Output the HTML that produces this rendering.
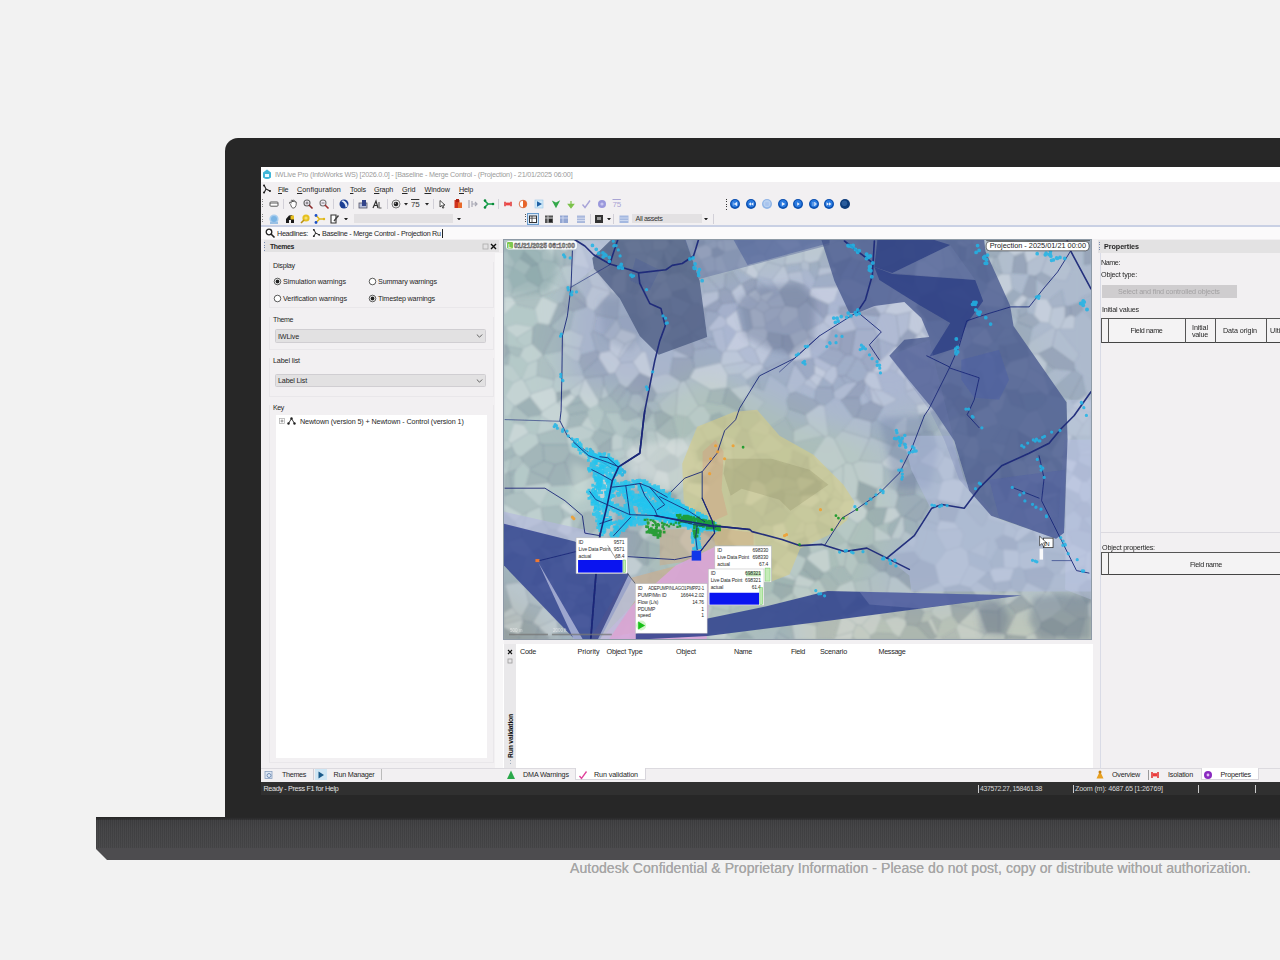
<!DOCTYPE html>
<html lang="en">
<head>
<meta charset="utf-8">
<title>IWLive Pro</title>
<style>
html,body{margin:0;padding:0;}
body{width:1280px;height:960px;overflow:hidden;background:#f2f2f2;font-family:"Liberation Sans",sans-serif;position:relative;}
.abs{position:absolute;}
#bezel{left:225px;top:138px;width:1075px;height:690px;background:#272727;border-radius:13px 0 0 0;}
#base{left:96px;top:817px;width:1184px;height:43px;background:linear-gradient(to bottom,#3d3d3f 0,#434345 10px,#474749 31px);}
#base .edge{left:0;top:0;width:100%;height:2.5px;background:linear-gradient(to bottom,#262626,#333335);}#base .dith{left:0;top:2px;width:100%;height:29px;background:repeating-linear-gradient(90deg,rgba(0,0,0,0.06) 0 1px,rgba(255,255,255,0.02) 1px 2px);}
#base .lip{left:0;top:31px;width:100%;height:12px;background:#4d4c4f;}
#base .cham{left:-1px;top:31px;width:0;height:0;border-left:0 solid transparent;border-bottom:13px solid #f2f2f2;border-right:13px solid transparent;}
#screen{left:0;top:0;width:1280px;height:960px;clip-path:inset(167px 0 165px 261px);filter:blur(0.5px);}
#screen > div, #screen > span, #screen > svg{position:absolute;white-space:nowrap;}
.t{font-size:7.5px;color:#262626;line-height:9px;letter-spacing:-0.1px;}
.b{font-weight:bold;}
#wm{left:570px;top:859.5px;font-size:14px;color:#a6a6a6;white-space:nowrap;line-height:16px;letter-spacing:0.057px;text-shadow:0 0 0.6px #a6a6a6;}
</style>
</head>
<body>
<div id="bezel" class="abs"></div>
<div id="base" class="abs"><div class="edge abs"></div><div class="dith abs"></div><div class="lip abs"></div><div class="cham abs"></div></div>
<div id="screen" class="abs">
<div style="left:261px;top:167px;width:1019px;height:628px;background:#f2f0f2"></div>
<div style="left:261px;top:167px;width:1019px;height:15px;background:#ffffff;"></div>
<svg style="left:262px;top:169px" width="10" height="11" viewBox="0 0 10 11"><path d="M5 0.5 L9 3.5 L9 8.5 Q5 11.5 1 8.5 L1 3.5 Z" fill="#3fb6d8"/><path d="M3 5 h4 v3 h-4z" fill="#e8f8ff"/></svg>
<span class="t" style="left:275.0px;top:170.0px;font-size:7.2px;letter-spacing:-0.198px;color:#9b9b9b">IWLive Pro (InfoWorks WS) [2026.0.0] - [Baseline - Merge Control - (Projection) - 21/01/2025 06:00]</span>
<svg style="left:262px;top:184px" width="10" height="10" viewBox="0 0 10 10"><path d="M2 1 L4 5 L2 9 M4 5 L8 7" stroke="#222" stroke-width="1.1" fill="none"/><circle cx="2" cy="1.5" r="1" fill="#222"/><circle cx="2" cy="8.5" r="1" fill="#222"/><circle cx="8" cy="7" r="1" fill="#222"/></svg>
<span class="t" style="left:278.0px;top:184.5px;font-size:7.2px;letter-spacing:-0.401px;"><u>F</u>ile</span>
<span class="t" style="left:297.0px;top:184.5px;font-size:7.2px;letter-spacing:0.090px;"><u>C</u>onfiguration</span>
<span class="t" style="left:350.0px;top:184.5px;font-size:7.2px;letter-spacing:-0.162px;"><u>T</u>ools</span>
<span class="t" style="left:374.0px;top:184.5px;font-size:7.2px;letter-spacing:-0.202px;"><u>G</u>raph</span>
<span class="t" style="left:402.0px;top:184.5px;font-size:7.2px;letter-spacing:-0.026px;"><u>G</u>rid</span>
<span class="t" style="left:424.5px;top:184.5px;font-size:7.2px;letter-spacing:-0.018px;"><u>W</u>indow</span>
<span class="t" style="left:459.0px;top:184.5px;font-size:7.2px;letter-spacing:-0.202px;"><u>H</u>elp</span>
<div style="left:262px;top:199.0px;width:1px;height:10px;background:repeating-linear-gradient(to bottom,#8a8a8a 0 1px,transparent 1px 2.5px)"></div>
<svg style="left:268.0px;top:198.0px" width="12" height="12" viewBox="0 0 12 12"><rect x="2" y="4" width="8" height="4.2" rx="0.8" fill="#fff" stroke="#444" stroke-width="0.9"/><path d="M2 5.4h8" stroke="#444" stroke-width=".5"/></svg>
<div style="left:283px;top:199.0px;width:1px;height:10px;background:#d2d0d8;"></div>
<svg style="left:286.5px;top:198.0px" width="12" height="12" viewBox="0 0 12 12"><path d="M3.6 6.5 L2.4 5 Q2.2 4 3.4 4.4 L4.2 5.2 L4.2 2.6 Q4.8 1.8 5.3 2.6 L5.4 4 L5.6 2.2 Q6.2 1.6 6.7 2.3 L6.8 4 L7.2 2.8 Q7.8 2.3 8.2 3 L8.2 4.4 L8.8 3.8 Q9.5 3.8 9.4 4.6 L9 7.5 Q8.4 10.2 6 10.2 Q4.4 10 3.6 6.5Z" fill="#fff" stroke="#444" stroke-width=".8"/></svg>
<svg style="left:301.5px;top:198.0px" width="12" height="12" viewBox="0 0 12 12"><circle cx="5" cy="5" r="3" fill="#f4eef8" stroke="#666" stroke-width="1.1"/><path d="M7 7 L10.5 10.5" stroke="#8a2a2a" stroke-width="1.6"/><path d="M3.5 5h3M5 3.5v3" stroke="#555" stroke-width=".8"/></svg>
<svg style="left:317.5px;top:198.0px" width="12" height="12" viewBox="0 0 12 12"><circle cx="5" cy="5" r="3" fill="#f4eef8" stroke="#777" stroke-width="1.1"/><path d="M7 7 L10.5 10.5" stroke="#a03030" stroke-width="1.6"/><path d="M3.5 5h3" stroke="#555" stroke-width=".8"/></svg>
<div style="left:333px;top:199.0px;width:1px;height:10px;background:#d2d0d8;"></div>
<svg style="left:337.5px;top:198.0px" width="12" height="12" viewBox="0 0 12 12"><circle cx="6" cy="6" r="4.5" fill="#1c3f94"/><path d="M5 2.2 Q9.5 4 9.6 8.4 L7.6 9.6 Q7.4 5 3.4 3.2Z" fill="#e4ecfa"/></svg>
<div style="left:352.5px;top:199.0px;width:1px;height:10px;background:#d2d0d8;"></div>
<svg style="left:356.5px;top:198.0px" width="12" height="12" viewBox="0 0 12 12"><rect x="2" y="5" width="8" height="5" fill="#b8c0dc" stroke="#556" stroke-width=".8"/><rect x="5" y="2" width="4" height="6" fill="#33448a"/></svg>
<svg style="left:371.0px;top:198.0px" width="12" height="12" viewBox="0 0 12 12"><path d="M2 10 L5 3 L7 10 M3 7.5 h3.5" stroke="#333" stroke-width="1.2" fill="none"/><path d="M8 4 v6 h2.5" stroke="#555" stroke-width="1.1" fill="none"/></svg>
<div style="left:386.5px;top:199.0px;width:1px;height:10px;background:#d2d0d8;"></div>
<svg style="left:389.5px;top:198.0px" width="12" height="12" viewBox="0 0 12 12"><circle cx="6" cy="6" r="4" fill="#eee" stroke="#777" stroke-width="1"/><circle cx="6" cy="6" r="2.3" fill="#222"/><circle cx="5.3" cy="5.3" r=".7" fill="#bbb"/></svg>
<svg style="left:404px;top:203.3px" width="4" height="2.6" viewBox="0 0 5 3"><path d="M0 0 L5 0 L2.5 3Z" fill="#222"/></svg>
<span class="t" style="left:411.0px;top:199.5px;font-size:7.2px;letter-spacing:-0.120px;font-size:8px;color:#333;text-decoration:overline;letter-spacing:-0.3px">75</span>
<svg style="left:425px;top:203.3px" width="4" height="2.6" viewBox="0 0 5 3"><path d="M0 0 L5 0 L2.5 3Z" fill="#222"/></svg>
<div style="left:433px;top:199.0px;width:1px;height:10px;background:#d2d0d8;"></div>
<svg style="left:436.0px;top:198.0px" width="12" height="12" viewBox="0 0 12 12"><path d="M4 2.5 L4 9 L5.7 7.5 L6.8 10.2 L7.9 9.7 L6.8 7.1 L9 7.1Z" fill="#fff" stroke="#222" stroke-width=".8"/></svg>
<svg style="left:451.5px;top:198.0px" width="12" height="12" viewBox="0 0 12 12"><rect x="2.5" y="2" width="5" height="8" fill="#d0321e"/><rect x="6" y="4.5" width="4" height="5.5" fill="#e86a2a"/><rect x="4" y="1" width="3" height="3" fill="#b02010"/></svg>
<svg style="left:466.5px;top:198.0px" width="12" height="12" viewBox="0 0 12 12"><path d="M2 2 v8 M5 3 v6 M5 6 h5 M8 4 l2 2 l-2 2" stroke="#a8a8b4" stroke-width="1.2" fill="none"/></svg>
<svg style="left:482.5px;top:198.0px" width="12" height="12" viewBox="0 0 12 12"><path d="M1.5 2.5 L5 6 L1.5 9.5 M5 6 H10.5" stroke="#14a04a" stroke-width="1.6" fill="none"/><circle cx="2" cy="2.5" r="1.3" fill="#0a8a3a"/><circle cx="2" cy="9.5" r="1.3" fill="#0a8a3a"/><circle cx="10" cy="6" r="1.3" fill="#0a8a3a"/></svg>
<div style="left:498px;top:199.0px;width:1px;height:10px;background:#d2d0d8;"></div>
<svg style="left:502.0px;top:198.0px" width="12" height="12" viewBox="0 0 12 12"><path d="M3 3.8 v4.4 M9 3.8 v4.4" stroke="#e03030" stroke-width="1.5"/><rect x="3.8" y="4.6" width="4.4" height="2.8" fill="#ee4444"/></svg>
<svg style="left:516.5px;top:198.0px" width="12" height="12" viewBox="0 0 12 12"><circle cx="6" cy="6" r="3.8" fill="#fff" stroke="#d8683a" stroke-width=".9"/><path d="M6 2.2 A3.8 3.8 0 0 1 6 9.8Z" fill="#e8642a"/></svg>
<svg style="left:532.5px;top:198.0px" width="12" height="12" viewBox="0 0 12 12"><rect x="2" y="2" width="8" height="8" fill="#cfe8f8" stroke="#9cc8e8" stroke-width=".6"/><path d="M4 3.2 L9 6 L4 8.8Z" fill="#1c5fa4"/></svg>
<svg style="left:550.0px;top:198.0px" width="12" height="12" viewBox="0 0 12 12"><path d="M1.8 2.6 L6 10.2 L10.2 2.2 L6 4.6Z" fill="#34a84a"/></svg>
<svg style="left:565.0px;top:198.0px" width="12" height="12" viewBox="0 0 12 12"><path d="M6 3 v4 M3.4 6.4 l2.6 3.4 l2.6 -3.4z" stroke="#7cc24a" stroke-width="1.2" fill="#7cc24a"/></svg>
<svg style="left:580.0px;top:198.0px" width="12" height="12" viewBox="0 0 12 12"><path d="M2.5 6.5 L5 9.5 L10 2.5" stroke="#a9a4d8" stroke-width="1.4" fill="none"/></svg>
<svg style="left:595.5px;top:198.0px" width="12" height="12" viewBox="0 0 12 12"><circle cx="6" cy="6" r="4" fill="#9a98dc"/><circle cx="6" cy="6" r="1.6" fill="#c8c6f0"/></svg>
<span class="t" style="left:612.5px;top:199.5px;font-size:7.2px;letter-spacing:-0.120px;font-size:8px;color:#a9a4d4;text-decoration:overline;letter-spacing:-0.3px">75</span>
<div style="left:725.5px;top:198.5px;width:1px;height:11px;background:repeating-linear-gradient(to bottom,#333 0 1px,transparent 1px 2.5px)"></div>
<svg style="left:729.0px;top:197.8px" width="12" height="12" viewBox="0 0 12 12"><circle cx="6" cy="6" r="5" fill="#0a4fb0"/><circle cx="6" cy="5.6" r="3.6" fill="#2a7ae0"/><path d="M4.3 4.4 v3.2 M8 4.2 L5.2 6 L8 7.8Z" fill="#e8f0ff" stroke="#e8f0ff" stroke-width=".5"/></svg>
<svg style="left:745.0px;top:197.8px" width="12" height="12" viewBox="0 0 12 12"><circle cx="6" cy="6" r="5" fill="#0a4fb0"/><circle cx="6" cy="5.6" r="3.6" fill="#2a7ae0"/><path d="M6 4.2 L3.6 6 L6 7.8Z M8.4 4.2 L6 6 L8.4 7.8Z" fill="#e8f0ff"/></svg>
<svg style="left:761.0px;top:197.8px" width="12" height="12" viewBox="0 0 12 12"><circle cx="6" cy="6" r="5" fill="#8fb4e6"/><circle cx="6" cy="5.6" r="3.6" fill="#b8d0f0"/><rect x="4.2" y="4.2" width="3.6" height="3.6" fill="#a8c4ee"/></svg>
<svg style="left:776.5px;top:197.8px" width="12" height="12" viewBox="0 0 12 12"><circle cx="6" cy="6" r="5" fill="#0a4fb0"/><circle cx="6" cy="5.6" r="3.6" fill="#2a7ae0"/><path d="M4.8 4 L8.2 6 L4.8 8Z" fill="#e8f0ff"/></svg>
<svg style="left:792.0px;top:197.8px" width="12" height="12" viewBox="0 0 12 12"><circle cx="6" cy="6" r="5" fill="#0a4fb0"/><circle cx="6" cy="5.6" r="3.6" fill="#2a7ae0"/><path d="M5.2 4.2 L7.8 6 L5.2 7.8Z" fill="#e8f0ff"/></svg>
<svg style="left:807.5px;top:197.8px" width="12" height="12" viewBox="0 0 12 12"><circle cx="6" cy="6" r="5" fill="#0a4fb0"/><circle cx="6" cy="5.6" r="3.6" fill="#2a7ae0"/><path d="M5 4 v4 M6.5 4 L8.5 6 L6.5 8Z" fill="#cfe0f8" stroke="#cfe0f8" stroke-width=".6"/></svg>
<svg style="left:823.0px;top:197.8px" width="12" height="12" viewBox="0 0 12 12"><circle cx="6" cy="6" r="5" fill="#0a4fb0"/><circle cx="6" cy="5.6" r="3.6" fill="#2a7ae0"/><path d="M3.6 4.2 L6 6 L3.6 7.8Z M6 4.2 L8.4 6 L6 7.8Z" fill="#e8f0ff"/></svg>
<svg style="left:839.0px;top:197.8px" width="12" height="12" viewBox="0 0 12 12"><circle cx="6" cy="6" r="5" fill="#0d3c7a"/><circle cx="5.4" cy="5.2" r="2.8" fill="#2a5c9c"/></svg>
<div style="left:262px;top:213.5px;width:1px;height:10px;background:repeating-linear-gradient(to bottom,#8a8a8a 0 1px,transparent 1px 2.5px)"></div>
<svg style="left:268.0px;top:212.5px" width="12" height="12" viewBox="0 0 12 12"><circle cx="6" cy="6" r="4.6" fill="#a8cdee"/><circle cx="6" cy="6" r="3" fill="#7ab4e4"/><rect x="2" y="9" width="8" height="2" fill="#9ac0e4"/></svg>
<svg style="left:283.5px;top:212.5px" width="12" height="12" viewBox="0 0 12 12"><path d="M2 10 L2 6 L5 2.5 L8 2 L10 5 L10 10 L7 10 L7 7 L5 7 L5 10Z" fill="#1a1a1a"/><rect x="6.5" y="2.5" width="3.5" height="4" fill="#e8c020"/></svg>
<svg style="left:299.0px;top:212.5px" width="12" height="12" viewBox="0 0 12 12"><circle cx="7" cy="5" r="3.6" fill="#e6c020"/><path d="M2 10 L5 7" stroke="#b89010" stroke-width="1.6"/><circle cx="7" cy="5" r="1.6" fill="#f4e070"/></svg>
<svg style="left:314.0px;top:212.5px" width="12" height="12" viewBox="0 0 12 12"><path d="M2 2.5 L5.5 6 L2 9.5 M5.5 6 H10.5" stroke="#e0b818" stroke-width="1.5" fill="none"/><circle cx="2" cy="2.5" r="1.4" fill="#1c50c8"/><circle cx="2" cy="9.5" r="1.4" fill="#1c50c8"/><circle cx="10" cy="6" r="1.2" fill="#e0b818"/></svg>
<svg style="left:328.0px;top:212.5px" width="12" height="12" viewBox="0 0 12 12"><path d="M3 2 H8 V10 H3Z" fill="#fff" stroke="#333" stroke-width="1.1"/><path d="M6 8 L10.5 2.5" stroke="#444" stroke-width="1.4"/></svg>
<svg style="left:343.5px;top:217.8px" width="4" height="2.6" viewBox="0 0 5 3"><path d="M0 0 L5 0 L2.5 3Z" fill="#222"/></svg>
<div style="left:353.5px;top:214.0px;width:99px;height:9px;background:#e3e1e3;"></div>
<svg style="left:456.5px;top:217.8px" width="4" height="2.6" viewBox="0 0 5 3"><path d="M0 0 L5 0 L2.5 3Z" fill="#222"/></svg>
<div style="left:525px;top:213.5px;width:1px;height:10px;background:repeating-linear-gradient(to bottom,#555 0 1px,transparent 1px 2.5px)"></div>
<div style="left:527px;top:212.5px;width:12px;height:12px;background:#d6e6f6;border:1px solid #6a9ccc;box-sizing:border-box"></div>
<svg style="left:527.0px;top:212.5px" width="12" height="12" viewBox="0 0 12 12"><rect x="2.5" y="3" width="7" height="6.5" fill="#fff" stroke="#333" stroke-width="1"/><path d="M2.5 5.2h7M5 3v6.5" stroke="#333" stroke-width=".8"/></svg>
<svg style="left:542.5px;top:212.5px" width="12" height="12" viewBox="0 0 12 12"><rect x="2" y="2.5" width="8" height="7.5" fill="#555"/><path d="M2 5h8M5 2.5v7.5" stroke="#ddd" stroke-width=".8"/><rect x="6" y="6" width="3" height="3" fill="#222"/></svg>
<svg style="left:557.5px;top:212.5px" width="12" height="12" viewBox="0 0 12 12"><rect x="2" y="2.5" width="8" height="7.5" fill="#93a6d2"/><path d="M2 5h8M5 2.5v7.5" stroke="#d8e0f4" stroke-width=".8"/></svg>
<svg style="left:575.0px;top:212.5px" width="12" height="12" viewBox="0 0 12 12"><rect x="2" y="2.5" width="8" height="7.5" fill="#a9b8dc"/><path d="M2 5.2h8M2 7.6h8" stroke="#e4e8f6" stroke-width=".8"/></svg>
<div style="left:590px;top:213.5px;width:1px;height:10px;background:#d2d0d8;"></div>
<svg style="left:592.5px;top:212.5px" width="12" height="12" viewBox="0 0 12 12"><rect x="2" y="2" width="8" height="8" fill="#333"/><rect x="4" y="4" width="4" height="3" fill="#999"/></svg>
<svg style="left:606.5px;top:217.8px" width="4" height="2.6" viewBox="0 0 5 3"><path d="M0 0 L5 0 L2.5 3Z" fill="#222"/></svg>
<div style="left:613px;top:213.5px;width:1px;height:10px;background:#d2d0d8;"></div>
<svg style="left:617.5px;top:212.5px" width="12" height="12" viewBox="0 0 12 12"><rect x="1.5" y="2.5" width="9" height="7.5" fill="#a4b8e0"/><path d="M1.5 5h9M1.5 7.5h9" stroke="#d4def4" stroke-width=".8"/></svg>
<div style="left:632px;top:214.0px;width:70px;height:9px;background:#e3e1e3;"></div>
<span class="t" style="left:635.5px;top:214.0px;font-size:7.2px;letter-spacing:-0.381px;color:#333">All assets</span>
<svg style="left:704px;top:217.8px" width="4" height="2.6" viewBox="0 0 5 3"><path d="M0 0 L5 0 L2.5 3Z" fill="#222"/></svg>
<div style="left:712.5px;top:213.5px;width:1px;height:10px;background:#d2d0d8;"></div>
<div style="left:261px;top:224.5px;width:1019px;height:2px;background:#c9d0e4;"></div>
<div style="left:261px;top:226.5px;width:1019px;height:12.5px;background:#fbfafb;"></div>
<svg style="left:264.0px;top:227.0px" width="12" height="12" viewBox="0 0 12 12"><circle cx="5" cy="5" r="2.8" fill="#fff" stroke="#222" stroke-width="1.3"/><path d="M7 7 L10.5 10.5" stroke="#222" stroke-width="1.6"/></svg>
<span class="t" style="left:277.0px;top:228.5px;font-size:7.2px;letter-spacing:-0.302px;">Headlines:</span>
<svg style="left:312px;top:228px" width="9" height="10" viewBox="0 0 10 10"><path d="M2 1 L4 5 L2 9 M4 5 L8 7" stroke="#222" stroke-width="1.1" fill="none"/><circle cx="2" cy="1.5" r="1" fill="#222"/><circle cx="2" cy="8.5" r="1" fill="#222"/><circle cx="8" cy="7" r="1" fill="#222"/></svg>
<span class="t" style="left:322.0px;top:228.5px;font-size:7.2px;letter-spacing:-0.256px;">Baseline - Merge Control - Projection Ru</span>
<div style="left:442px;top:228.5px;width:0.8px;height:9px;background:#222;"></div>
<div style="left:261px;top:239px;width:238px;height:529px;background:#f2f0f2;"></div>
<div style="left:264px;top:240px;width:235px;height:12px;background:#e3e2e3;"></div>
<div style="left:264px;top:241.5px;width:1px;height:9px;background:repeating-linear-gradient(to bottom,#7a8ab0 0 1px,transparent 1px 2.5px)"></div>
<span class="t" style="left:270.0px;top:242.0px;font-size:6.9px;letter-spacing:-0.346px;font-weight:bold;">Themes</span>
<svg style="left:482px;top:243px" width="7" height="7" viewBox="0 0 7 7"><rect x="1" y="1" width="5" height="5" fill="none" stroke="#aaa" stroke-width=".8"/></svg>
<svg style="left:490px;top:243px" width="7" height="7" viewBox="0 0 7 7"><path d="M1 1 L6 6 M6 1 L1 6" stroke="#111" stroke-width="1.4"/></svg>
<div style="left:494.5px;top:252.5px;width:9px;height:515px;background:#f8f7f8;"></div>
<span class="t" style="left:273.0px;top:260.5px;font-size:7.2px;letter-spacing:-0.230px;">Display</span>
<div style="left:268.5px;top:262px;width:225px;height:46px;background:transparent;border:1px solid #e9e7ea;box-sizing:border-box;border-top:none"></div>
<svg style="left:273.0px;top:276.5px" width="9" height="9" viewBox="0 0 9 9"><circle cx="4.5" cy="4.5" r="3.3" fill="#fff" stroke="#333" stroke-width=".8"/><circle cx="4.5" cy="4.5" r="1.9" fill="#222"/></svg>
<span class="t" style="left:283.0px;top:276.5px;font-size:7.2px;letter-spacing:-0.075px;">Simulation warnings</span>
<svg style="left:367.5px;top:276.5px" width="9" height="9" viewBox="0 0 9 9"><circle cx="4.5" cy="4.5" r="3.3" fill="#fff" stroke="#333" stroke-width=".8"/></svg>
<span class="t" style="left:378.0px;top:276.5px;font-size:7.2px;letter-spacing:-0.164px;">Summary warnings</span>
<svg style="left:273.0px;top:294.0px" width="9" height="9" viewBox="0 0 9 9"><circle cx="4.5" cy="4.5" r="3.3" fill="#fff" stroke="#333" stroke-width=".8"/></svg>
<span class="t" style="left:283.0px;top:294.0px;font-size:7.2px;letter-spacing:-0.097px;">Verification warnings</span>
<svg style="left:367.5px;top:294.0px" width="9" height="9" viewBox="0 0 9 9"><circle cx="4.5" cy="4.5" r="3.3" fill="#fff" stroke="#333" stroke-width=".8"/><circle cx="4.5" cy="4.5" r="1.9" fill="#222"/></svg>
<span class="t" style="left:378.0px;top:294.0px;font-size:7.2px;letter-spacing:-0.186px;">Timestep warnings</span>
<span class="t" style="left:273.0px;top:315.0px;font-size:7.0px;letter-spacing:-0.357px;">Theme</span>
<div style="left:268.5px;top:317px;width:225px;height:33px;background:transparent;border:1px solid #e9e7ea;box-sizing:border-box;border-top:none"></div>
<div style="left:275px;top:329px;width:211px;height:14px;background:#e2e1e2;border:1px solid #d0ced2;box-sizing:border-box;border-radius:1.5px"></div>
<span class="t" style="left:278.0px;top:331.8px;font-size:7.2px;letter-spacing:-0.167px;">IWLive</span>
<svg style="left:476px;top:334.0px" width="7" height="4" viewBox="0 0 7 4"><path d="M0.8 0.5 L3.5 3.2 L6.2 0.5" stroke="#555" stroke-width=".9" fill="none"/></svg>
<span class="t" style="left:273.0px;top:356.0px;font-size:7.2px;letter-spacing:-0.142px;">Label list</span>
<div style="left:268.5px;top:358px;width:225px;height:39px;background:transparent;border:1px solid #e9e7ea;box-sizing:border-box;border-top:none"></div>
<div style="left:275px;top:374px;width:211px;height:13px;background:#e2e1e2;border:1px solid #d0ced2;box-sizing:border-box;border-radius:1.5px"></div>
<span class="t" style="left:278.0px;top:376.3px;font-size:7.2px;letter-spacing:-0.182px;">Label List</span>
<svg style="left:476px;top:378.5px" width="7" height="4" viewBox="0 0 7 4"><path d="M0.8 0.5 L3.5 3.2 L6.2 0.5" stroke="#555" stroke-width=".9" fill="none"/></svg>
<span class="t" style="left:273.0px;top:403.0px;font-size:7.0px;letter-spacing:-0.354px;">Key</span>
<div style="left:268.5px;top:405px;width:225px;height:358px;background:transparent;border:1px solid #e9e7ea;box-sizing:border-box;border-top:none"></div>
<div style="left:275.5px;top:415px;width:211px;height:343px;background:#ffffff;"></div>
<svg style="left:279px;top:418px" width="6" height="6" viewBox="0 0 6 6"><rect x=".5" y=".5" width="5" height="5" fill="#fff" stroke="#aaa" stroke-width=".7"/><path d="M1.5 3h3M3 1.5v3" stroke="#666" stroke-width=".7"/></svg>
<svg style="left:287px;top:417px" width="9" height="8" viewBox="0 0 9 8"><path d="M4.5 1.5 L1.5 6.5 M4.5 1.5 L7.5 6.5" stroke="#222" stroke-width=".9"/><circle cx="4.5" cy="1.5" r="1.2" fill="#222"/><circle cx="1.5" cy="6.5" r="1.2" fill="#222"/><circle cx="7.5" cy="6.5" r="1.2" fill="#222"/></svg>
<span class="t" style="left:300.0px;top:416.5px;font-size:7.2px;letter-spacing:-0.099px;">Newtown (version 5) + Newtown - Control (version 1)</span>
<div style="left:261px;top:768px;width:243px;height:13.5px;background:#f2f0f2;"></div>
<div style="left:261px;top:767.5px;width:243px;height:0.8px;background:#dcdadf;"></div>
<svg style="left:263.0px;top:768.5px" width="12" height="12" viewBox="0 0 12 12"><rect x="2" y="2.5" width="7" height="7" fill="#dfe8f4" stroke="#8aa0c0" stroke-width=".8"/><circle cx="6" cy="6.5" r="2" fill="none" stroke="#5a7aa8" stroke-width=".8"/></svg>
<span class="t" style="left:282.0px;top:770.0px;font-size:7.2px;letter-spacing:-0.335px;">Themes</span>
<div style="left:313px;top:769.0px;width:1px;height:11px;background:#d0cdd4;"></div>
<div style="left:315px;top:769px;width:12px;height:11px;background:#cfe6f4;"></div>
<svg style="left:315.0px;top:768.5px" width="12" height="12" viewBox="0 0 12 12"><path d="M3.5 2.5 L9 6 L3.5 9.5Z" fill="#1a5a8a"/></svg>
<span class="t" style="left:333.5px;top:770.0px;font-size:7.2px;letter-spacing:-0.239px;">Run Manager</span>
<div style="left:381px;top:769.0px;width:1px;height:11px;background:#bbb;"></div>
<div style="left:503.3px;top:238.8px;width:588.4px;height:401px;background:#8e9aa6;"></div>
<div style="left:503px;top:643.5px;width:590px;height:124px;background:#ffffff;"></div>
<div style="left:504px;top:644px;width:11.5px;height:124px;background:#e9e8ea;"></div>
<svg style="left:506.5px;top:649px" width="6" height="6" viewBox="0 0 6 6"><path d="M1 1 L5 5 M5 1 L1 5" stroke="#111" stroke-width="1.1"/></svg>
<svg style="left:506.5px;top:657.5px" width="6" height="6" viewBox="0 0 6 6"><rect x="1" y="1" width="4" height="4" fill="none" stroke="#999" stroke-width=".8"/></svg>
<span class="t" style="left:509.5px;top:758px;font-size:6.8px;font-weight:bold;letter-spacing:-0.2px;transform-origin:0 0;transform:rotate(-90deg) translate(0,-4.5px);color:#111">Run validation</span>
<div style="left:509.5px;top:759.5px;width:1px;height:4px;background:repeating-linear-gradient(to bottom,#9ab 0 1px,transparent 1px 2.5px)"></div>
<span class="t" style="left:520.0px;top:647.0px;font-size:7.2px;letter-spacing:-0.303px;">Code</span>
<span class="t" style="left:577.5px;top:647.0px;font-size:7.2px;letter-spacing:-0.050px;">Priority</span>
<span class="t" style="left:606.5px;top:647.0px;font-size:7.2px;letter-spacing:-0.208px;">Object Type</span>
<span class="t" style="left:676.0px;top:647.0px;font-size:7.2px;letter-spacing:-0.135px;">Object</span>
<span class="t" style="left:734.0px;top:647.0px;font-size:7.2px;letter-spacing:-0.302px;">Name</span>
<span class="t" style="left:791.0px;top:647.0px;font-size:7.2px;letter-spacing:-0.321px;">Field</span>
<span class="t" style="left:820.0px;top:647.0px;font-size:7.2px;letter-spacing:-0.177px;">Scenario</span>
<span class="t" style="left:878.5px;top:647.0px;font-size:7.2px;letter-spacing:-0.317px;">Message</span>
<div style="left:504px;top:768px;width:594px;height:13.5px;background:#f2f0f2;"></div>
<div style="left:504px;top:767.5px;width:594px;height:0.8px;background:#dcdadf;"></div>
<svg style="left:505.0px;top:768.5px" width="12" height="12" viewBox="0 0 12 12"><path d="M6 1.5 L10 10 H2Z" fill="#2aa84a"/></svg>
<span class="t" style="left:523.0px;top:770.0px;font-size:7.2px;letter-spacing:-0.146px;">DMA Warnings</span>
<div style="left:575px;top:768px;width:70.5px;height:12px;background:#ffffff;border:1px solid #d8d6dc;border-top:none;box-sizing:border-box"></div>
<svg style="left:576.5px;top:768.5px" width="12" height="12" viewBox="0 0 12 12"><path d="M2.5 7 L4.5 9.5 L9.5 2.5" stroke="#e0409a" stroke-width="1.3" fill="none"/></svg>
<span class="t" style="left:594.0px;top:770.0px;font-size:7.2px;letter-spacing:-0.116px;">Run validation</span>
<div style="left:1093px;top:239px;width:187px;height:529px;background:#f2f0f2;"></div>
<div style="left:1099.5px;top:240px;width:1px;height:528px;background:#d9dbe6;"></div>
<div style="left:1098px;top:240px;width:182px;height:12.5px;background:#e3e2e3;"></div>
<div style="left:1099px;top:241.5px;width:1px;height:9px;background:repeating-linear-gradient(to bottom,#7a8ab0 0 1px,transparent 1px 2.5px)"></div>
<span class="t" style="left:1104.0px;top:242.3px;font-size:7.2px;letter-spacing:-0.061px;font-weight:bold;">Properties</span>
<span class="t" style="left:1101.0px;top:258.2px;font-size:7.2px;letter-spacing:-0.441px;">Name:</span>
<span class="t" style="left:1101.0px;top:270.1px;font-size:7.2px;letter-spacing:-0.202px;">Object type:</span>
<div style="left:1101.5px;top:284.5px;width:135px;height:13px;background:#cfcdcf;"></div>
<span class="t" style="left:1118.0px;top:286.7px;font-size:7.2px;letter-spacing:-0.108px;color:#a2a0a2">Select and find controlled objects</span>
<span class="t" style="left:1102.0px;top:304.8px;font-size:7.2px;letter-spacing:-0.187px;">Initial values</span>
<div style="left:1100.5px;top:318px;width:180px;height:24.5px;background:#f4f3f4;border-top:1px solid #555;border-bottom:1.2px solid #444;box-sizing:border-box"></div>
<div style="left:1100.5px;top:318px;width:1px;height:24.5px;background:#555;"></div>
<div style="left:1107.5px;top:318px;width:1px;height:24.5px;background:#555;"></div>
<div style="left:1185px;top:318px;width:1px;height:24.5px;background:#555;"></div>
<div style="left:1214.5px;top:318px;width:1px;height:24.5px;background:#555;"></div>
<div style="left:1265.5px;top:318px;width:1px;height:24.5px;background:#555;"></div>
<span class="t" style="left:1130.5px;top:326.0px;font-size:7.2px;letter-spacing:-0.362px;">Field name</span>
<span class="t" style="left:1192.0px;top:322.5px;font-size:7.2px;letter-spacing:-0.116px;">Initial</span>
<span class="t" style="left:1192.0px;top:330.0px;font-size:7.2px;letter-spacing:-0.243px;">value</span>
<span class="t" style="left:1223.0px;top:326.0px;font-size:7.2px;letter-spacing:-0.075px;">Data origin</span>
<span class="t" style="left:1270.0px;top:326.0px;font-size:7.2px;letter-spacing:-0.051px;">Ultimate</span>
<div style="left:1100.5px;top:532px;width:180px;height:1px;background:#dcdae0;"></div>
<span class="t" style="left:1102.0px;top:542.5px;font-size:7.2px;letter-spacing:-0.213px;">Object properties:</span>
<div style="left:1100.5px;top:551.5px;width:180px;height:23px;background:#f4f3f4;border-top:1px solid #555;border-bottom:1.2px solid #444;box-sizing:border-box"></div>
<div style="left:1100.5px;top:551.5px;width:1px;height:23px;background:#555;"></div>
<div style="left:1107.5px;top:551.5px;width:1px;height:23px;background:#555;"></div>
<span class="t" style="left:1190.0px;top:559.5px;font-size:7.2px;letter-spacing:-0.362px;">Field name</span>
<div style="left:1093px;top:768px;width:187px;height:13.5px;background:#f2f0f2;"></div>
<div style="left:1093px;top:767.5px;width:187px;height:0.8px;background:#dcdadf;"></div>
<svg style="left:1094.0px;top:768.5px" width="12" height="12" viewBox="0 0 12 12"><path d="M6 2 L9.5 9.5 H2.5Z" fill="#e8a020"/><circle cx="6" cy="3" r="1.5" fill="#c88010"/></svg>
<span class="t" style="left:1112.0px;top:770.0px;font-size:7.2px;letter-spacing:-0.251px;">Overview</span>
<div style="left:1148px;top:769.5px;width:1px;height:10px;background:#999;"></div>
<svg style="left:1149.0px;top:768.5px" width="12" height="12" viewBox="0 0 12 12"><path d="M3 3 v6 M9 3 v6" stroke="#e02828" stroke-width="1.5"/><rect x="4" y="4.2" width="4" height="3.2" fill="#ee3a3a"/></svg>
<span class="t" style="left:1168.0px;top:770.0px;font-size:7.2px;letter-spacing:-0.202px;">Isolation</span>
<div style="left:1201px;top:768px;width:58px;height:12px;background:#ffffff;border:1px solid #d8d6dc;border-top:none;box-sizing:border-box"></div>
<svg style="left:1202.0px;top:768.5px" width="12" height="12" viewBox="0 0 12 12"><circle cx="6" cy="6" r="4" fill="#8a2ac0"/><circle cx="6" cy="6" r="1.4" fill="#e0c0f4"/></svg>
<span class="t" style="left:1220.5px;top:770.0px;font-size:7.2px;letter-spacing:-0.232px;">Properties</span>
<div style="left:261px;top:781.5px;width:1019px;height:13.5px;background:#303030;"></div>
<span class="t" style="left:263.5px;top:784.0px;font-size:7.2px;letter-spacing:-0.329px;color:#e4e4e4">Ready - Press F1 for Help</span>
<div style="left:978px;top:784.5px;width:1px;height:8px;background:#ccc;"></div>
<span class="t" style="left:980.0px;top:784.0px;font-size:6.9px;letter-spacing:-0.353px;color:#d8d8d8">437572.27, 158461.38</span>
<div style="left:1072.5px;top:784.5px;width:1px;height:8px;background:#ccc;"></div>
<span class="t" style="left:1075.0px;top:784.0px;font-size:7.2px;letter-spacing:-0.195px;color:#d8d8d8">Zoom (m): 4687.65 [1:26769]</span>
<div style="left:1198px;top:784.5px;width:1px;height:8px;background:#ccc;"></div>
<div style="left:1254.5px;top:784.5px;width:1px;height:8px;background:#ccc;"></div>
<svg style="left:504px;top:239.5px" width="587" height="399.5" preserveAspectRatio="none" viewBox="504 240 588 400">
<defs><filter id="bl" x="-5%" y="-5%" width="110%" height="110%"><feGaussianBlur stdDeviation="0.7"/></filter><filter id="bl2" x="-20%" y="-20%" width="140%" height="140%"><feGaussianBlur stdDeviation="14"/></filter><filter id="bl3"><feGaussianBlur stdDeviation="0.55"/></filter><filter id="bl5" x="-20%" y="-20%" width="140%" height="140%"><feGaussianBlur stdDeviation="3"/></filter><filter id="bl4"><feGaussianBlur stdDeviation="1.1"/></filter></defs>
<rect x="504" y="240" width="588" height="400" fill="#b0c0c8"/>
<g filter="url(#bl2)">
<polygon points="480.0,220.0 575.0,220.0 565.0,330.0 560.0,430.0 620.0,470.0 600.0,560.0 480.0,560.0" fill="#bcd0cc" fill-opacity="0.95" />
<polygon points="560.0,390.0 640.0,390.0 640.0,470.0 600.0,470.0 560.0,430.0" fill="#bcd0ca" fill-opacity="0.8" />
<polygon points="660.0,380.0 760.0,380.0 860.0,430.0 900.0,520.0 860.0,600.0 700.0,660.0 640.0,560.0 650.0,440.0" fill="#b2c6bc" fill-opacity="0.85" />
<polygon points="580.0,250.0 700.0,290.0 720.0,360.0 655.0,400.0 570.0,380.0 565.0,330.0" fill="#aeb8d2" fill-opacity="0.85" />
<polygon points="700.0,280.0 900.0,250.0 1000.0,300.0 960.0,420.0 800.0,380.0 720.0,350.0" fill="#b2bcd6" fill-opacity="0.85" />
<polygon points="990.0,240.0 1110.0,240.0 1110.0,420.0 1060.0,400.0 1010.0,310.0" fill="#b4c0d4" fill-opacity="0.8" />
<polygon points="700.0,290.0 800.0,270.0 900.0,300.0 920.0,400.0 880.0,440.0 800.0,420.0 740.0,390.0 690.0,340.0" fill="#b0bcd8" fill-opacity="0.7" />
<polygon points="800.0,606.0 1110.0,600.0 1110.0,660.0 800.0,660.0" fill="#c0c8b8" fill-opacity="0.95" />
<polygon points="480.0,580.0 540.0,620.0 560.0,660.0 480.0,660.0" fill="#aab4ac" fill-opacity="0.9" />
</g>
<g filter="url(#bl4)">
<path d="M516 525L522 531L527 513L523 515L515 522ZM1068 532L1067 532L1054 544L1066 552L1073 544ZM628 458L626 457L617 461L623 468ZM1080 453L1080 455L1092 455L1092 449ZM782 600L777 613L790 608L795 596L793 593ZM982 326L968 328L973 339L986 328ZM704 533L696 534L695 553L714 555L717 549L719 545ZM623 449L612 451L612 451L617 461L617 461L626 457L626 452ZM830 495L832 495L835 488L832 474L822 482L822 488ZM779 316L784 307L771 308L764 313L766 324ZM766 629L778 616L777 613L767 610L757 620L761 631ZM642 587L642 587L637 575L626 578L632 590L636 590ZM1073 268L1067 260L1052 254L1048 256L1042 272L1053 278L1059 280L1067 281ZM802 269L810 271L810 263L804 261L801 263ZM637 269L638 276L644 283L647 281L650 269L646 266ZM1006 635L1027 637L1036 633L1041 628L1042 623L1035 607L1034 607L1017 614ZM710 441L721 436L723 435L724 430L710 420L701 429L707 441ZM1054 327L1030 343L1028 349L1030 355L1039 354L1053 347L1057 330ZM1065 427L1066 433L1073 436L1077 437L1078 436L1084 425L1071 411L1068 413ZM815 365L827 372L833 366L818 358L814 359ZM787 252L775 240L774 240L765 255L768 262L783 266L785 266L785 265ZM1042 272L1048 256L1043 254L1028 263L1028 274L1030 275L1036 276ZM750 310L755 308L759 303L748 295L747 295L740 305L740 306ZM971 484L976 496L986 495L983 481ZM988 599L994 592L978 582L971 588L980 600ZM818 521L819 517L812 508L800 505L793 513L802 521L806 524L816 523ZM770 433L770 428L761 420L749 431L767 436ZM992 442L992 443L995 451L1003 458L1007 445ZM925 612L932 611L945 593L945 588L940 583L915 593L912 602ZM639 464L639 490L640 490L642 492L649 491L657 470L654 466L647 460L647 460L647 460ZM968 328L965 325L955 342L956 345L964 351L973 343L973 339ZM701 429L696 428L684 439L690 449L697 451L707 441ZM672 328L665 317L664 317L662 336L664 339ZM692 250L694 250L694 249L694 243L693 240L685 240ZM668 276L667 280L672 292L686 288L687 286L678 273L670 274ZM870 439L860 461L882 463L890 455L893 446L871 437ZM772 280L783 266L768 262L759 273L758 276ZM1018 531L1029 523L1024 510L1017 506L1017 506L1009 521ZM780 451L785 446L770 433L767 436L756 450L756 454L757 454L765 454ZM682 615L672 598L665 602L654 611L654 623L658 628L677 630ZM581 243L590 268L605 249L605 249L606 247L597 240L582 240ZM771 308L784 307L786 306L781 294L767 302ZM601 400L609 396L604 384ZM1084 425L1078 436L1092 437L1092 415ZM678 389L672 392L659 404L662 411L672 417L673 417L676 415ZM565 242L566 245L568 250L576 247L581 243L582 240L566 240ZM553 387L556 393L570 390L584 380L585 378L585 378L583 375L555 377L554 380ZM966 260L966 260L969 260L971 259L973 243L970 245L967 247ZM970 552L986 558L989 539ZM691 511L697 509L701 499L685 491L677 496L677 497ZM755 350L750 346L738 351L746 362L754 365L761 364ZM554 591L543 594L546 601L554 599L557 595ZM751 393L742 401L745 411L757 412L765 402ZM621 363L633 362L642 352L636 339L635 339L619 360ZM909 329L911 312L897 315L900 339Z" fill="#fff" fill-opacity="0.09" stroke="#56667a" stroke-opacity="0.22" stroke-width="0.6"/>
<path d="M993 569L991 562L986 558L970 552L968 552L970 565L988 573L991 573ZM1084 518L1092 528L1092 516ZM770 428L770 433L785 446L792 446L794 443L794 431L786 418ZM737 267L732 271L741 284L742 284L754 278L746 273ZM965 456L963 451L953 446L952 447L958 460L964 457ZM941 338L946 336L948 320L948 319L927 321L937 338ZM1002 274L993 266L985 262L985 262L990 282ZM646 405L653 413L654 413L662 411L659 404L654 401L646 402ZM660 586L673 580L651 570L649 583ZM1084 310L1092 319L1092 294L1082 298L1081 302ZM625 266L625 264L605 249L605 249L610 267ZM785 494L801 496L801 492L799 488L783 491ZM621 329L636 334L642 325L642 321L637 315L618 317L617 319L617 319ZM672 295L670 298L672 314L682 317L692 304ZM506 249L505 246L504 247L504 253ZM1012 430L1002 426L992 442L1007 445ZM569 599L567 592L566 591L561 594L563 606ZM598 272L611 291L613 276L608 270ZM841 276L842 279L852 279L861 261L852 258ZM784 508L790 514L793 513L800 505L802 496L801 496L785 494ZM506 345L507 345L507 330L506 327L504 326L504 346ZM919 527L937 531L939 525L922 519L917 522ZM857 329L875 329L880 316L854 314L853 314L852 318ZM560 635L561 640L571 640L574 638L575 634ZM1005 311L1004 308L984 306L991 322L998 322ZM836 637L842 616L822 617L817 626L817 640L834 640ZM611 485L614 496L640 490L639 490L628 480ZM723 240L715 240L717 241ZM957 629L942 638L944 640L961 640ZM962 416L954 405L941 421L941 425ZM786 418L794 431L809 424L806 415L789 409ZM567 290L567 287L562 288L541 296L542 296L558 304L563 303ZM785 266L788 273L802 271L802 269L801 263L785 265ZM852 577L845 567L840 567L831 569L828 572L840 586L852 581ZM918 261L925 260L935 244L935 243L920 241L916 243L918 261ZM554 599L546 601L545 607L557 619L562 617L562 607ZM617 319L596 315L593 331L604 336L617 319Z" fill="#3c4a66" fill-opacity="0.03" stroke="#56667a" stroke-opacity="0.22" stroke-width="0.6"/>
<path d="M760 389L758 377L752 387ZM996 360L998 356L988 348L988 350ZM867 547L849 544L859 563L870 564ZM835 593L828 594L817 602L816 605L816 605L822 617L842 616L844 615L844 612ZM562 509L560 506L541 508L543 522L549 530L557 531L564 519ZM764 367L767 369L791 358L790 355L783 347L773 349L763 365ZM664 341L664 342L671 343L690 334L691 333L684 321L672 328L664 339ZM758 377L760 372L747 380L748 385L751 387L752 387ZM820 534L834 529L818 521L816 523L819 533ZM760 389L764 391L770 375L767 369L764 367L760 372L758 377ZM573 265L576 247L568 250L565 252L564 266ZM894 245L902 250L907 242L905 240L896 240ZM740 425L742 429L748 431L749 431L761 420L757 412L745 411L742 413L741 415ZM900 640L931 640L917 626L907 625L900 638ZM858 383L865 380L869 372L862 360L857 358L846 376L856 382ZM1050 503L1060 517L1058 496L1055 497ZM889 535L892 538L902 517L901 516L892 522L889 527ZM794 587L795 586L796 581L771 574L770 575L775 583ZM818 276L820 268L819 261L810 263L810 271L816 280ZM905 517L904 517L905 531L917 538L919 527L917 522ZM813 288L838 287L842 279L841 276L837 272L818 276L816 280ZM567 583L585 587L586 585L589 576L567 574L565 580ZM722 578L742 574L736 564L719 568L718 570ZM712 347L694 350L693 359L695 369L721 363L723 353L717 348ZM938 632L942 621L934 616L932 618ZM625 264L629 254L624 243L618 240L606 247L605 249ZM625 621L620 601L619 599L610 595L602 601L607 613L620 622ZM609 374L603 376L604 384L609 396L610 396L620 384L615 373ZM920 462L937 447L934 433L924 432L920 434L918 446L918 457L920 462ZM542 547L549 530L543 522L522 532L522 538L532 552L533 552L533 552L539 549ZM941 338L943 354L956 345L955 342L946 336L941 338ZM767 369L770 375L787 387L795 364L795 361L791 358ZM566 429L566 429L560 428L537 435L539 443L543 445L568 445ZM1066 527L1063 519L1060 518L1052 518L1047 522L1049 534ZM637 269L627 269L626 292L631 293L638 276ZM596 351L600 353L610 351L610 340L604 336L593 331L591 333ZM517 357L520 356L523 349L507 346L509 352L510 353ZM777 462L777 461L765 454L757 454L762 463L771 467ZM877 420L872 422L871 437L893 446L894 445L897 436L895 431ZM633 439L643 433L632 427L623 437L623 437ZM984 306L978 301L976 301L973 304L968 310L968 311L982 326L986 328L987 328L991 322ZM871 636L871 640L900 640L900 638L894 634L876 633ZM505 585L518 583L526 557L519 555L504 563L504 585ZM824 378L823 378L818 387L833 388L833 385ZM998 241L999 240L998 240ZM1055 369L1048 364L1045 376ZM512 608L505 585L504 585L504 613ZM702 340L712 347L717 348L714 339ZM841 376L838 376L833 385L833 388L834 392L846 384ZM648 542L648 565L660 554L663 548L663 547ZM739 248L754 243L756 240L737 240ZM792 623L785 622L778 633L790 640L795 640ZM610 396L609 396L601 400L599 401L598 405L605 413L605 413L620 413L622 410L617 403ZM1021 394L1025 409L1029 413L1038 410L1044 405L1047 401L1048 396L1042 392ZM679 272L694 282L699 281L690 270L686 270L679 272ZM574 311L569 309L551 326L555 331L562 333L570 330ZM993 569L1005 568L1004 550L999 548L991 562ZM568 618L582 614L580 606L576 605L567 618ZM942 484L944 481L938 469L920 462L920 462L915 467L914 473L917 478ZM638 508L642 492L640 490L614 496L613 500L618 508L634 510ZM988 348L988 347L973 343L964 351L966 367L970 371L976 370L985 357L988 350ZM1080 640L1080 640L1080 640ZM857 358L852 355L846 355L837 367L838 376L841 376L846 376ZM543 281L538 264L538 264L531 266L525 275L528 281L539 287ZM616 434L605 413L605 413L599 430L614 435ZM737 310L743 331L748 332L753 328L750 310L740 306ZM846 376L841 376L846 384L856 382ZM712 331L708 329L703 327L692 333L702 340L714 339ZM903 259L902 250L894 245L880 251L878 262L882 269L894 265ZM655 314L664 317L665 317L672 314L670 298L654 301ZM558 553L562 548L547 549L551 551ZM924 432L934 433L940 429L941 425L941 421L934 411L920 415Z" fill="#3c4a66" fill-opacity="0.09" stroke="#56667a" stroke-opacity="0.22" stroke-width="0.6"/>
<path d="M933 640L944 640L942 638L937 638ZM827 341L832 329L824 322L807 331L809 336ZM789 551L777 562L777 563L796 579L799 575L803 569L807 559ZM888 508L896 508L899 496L897 491L884 485L878 489L875 508ZM1036 633L1027 637L1027 640L1039 640ZM507 240L504 240L504 247L505 246ZM1088 482L1083 482L1080 494L1083 502L1088 502L1092 498L1092 487ZM944 453L937 447L920 462L938 469L945 456ZM828 499L830 495L822 488L818 495L821 501L826 504ZM830 511L830 511L835 529L836 530L844 515L839 509ZM699 461L695 468L706 477L716 463ZM1024 480L1029 479L1028 466L1024 461L1022 460L1009 462L1015 477ZM801 263L804 261L804 246L802 246L787 252L785 265ZM883 391L873 389L884 407L896 401L897 399ZM588 275L592 286L611 292L612 292L611 291L598 272L589 269ZM746 362L723 366L728 375L741 374L754 365ZM1020 567L1025 570L1046 567L1045 552L1044 548L1043 547L1020 554ZM806 415L809 424L824 436L826 437L829 436L825 406L820 405ZM985 357L996 360L996 360L988 350ZM525 275L531 266L520 259L515 263L513 268L513 268ZM551 242L553 245L565 242L566 240L550 240ZM597 564L592 560L584 561L567 574L567 574L589 576ZM988 573L970 565L960 585L971 588L978 582ZM837 367L833 366L827 372L824 378L833 385L838 376ZM929 622L937 637L938 632L932 618ZM879 242L880 240L878 240ZM539 290L539 287L528 281L513 288L511 296L512 297ZM688 417L699 406L685 381L681 382L678 389L676 415ZM543 355L543 355L532 344L525 347L523 349L520 356L528 364L538 360ZM519 555L526 557L532 552L522 538L508 542L508 544L513 552ZM523 620L522 617L517 614L504 619L504 625ZM723 584L710 588L713 601L725 587ZM1087 395L1074 405L1074 408L1092 413L1092 403ZM631 640L629 640L631 640ZM586 546L569 541L568 543L570 554L584 561L592 560ZM905 355L909 374L917 368ZM852 257L852 258L861 261L868 260L858 240L841 240ZM598 272L608 270L610 267L605 249L590 268L589 269L589 269ZM612 451L623 449L623 437L623 437L616 434L616 434L614 435L612 438ZM873 389L870 387L873 402L884 407L884 407ZM696 428L701 429L710 420L711 416L704 406L699 406L688 417ZM1041 501L1055 497L1058 496L1059 493L1041 496ZM871 636L862 626L857 625L854 632L853 638L857 640L871 640ZM1052 618L1063 609L1058 598L1049 590L1047 592L1035 607L1042 623ZM1047 522L1034 527L1034 530L1039 541L1043 547L1044 548L1048 545L1049 534Z" fill="#fff" fill-opacity="0.18" stroke="#56667a" stroke-opacity="0.22" stroke-width="0.6"/>
<path d="M532 344L533 328L517 338L518 342L525 347ZM595 492L598 474L573 486L573 487L578 492L588 494ZM777 562L789 551L788 548L774 541L758 550ZM676 580L675 580L675 580L672 598L682 615L691 610L698 602L694 588ZM670 271L673 258L666 249L664 250L664 253ZM995 257L985 258L985 262L993 266ZM662 283L651 283L653 294ZM879 246L879 242L878 240L862 240ZM805 533L794 535L789 537L789 545L806 537ZM533 552L533 552L538 569L546 570ZM897 315L885 313L881 314L880 316L875 329L879 339L879 339L897 346L897 347L900 339ZM535 249L524 249L524 251L538 264L538 264L542 260L541 253ZM1011 483L1012 488L1024 480L1015 477L1015 477ZM759 598L767 610L777 613L777 613L782 600L773 593ZM699 406L704 406L707 402L711 390L690 378L685 381ZM713 608L708 623L713 632L726 631L733 620L730 612L730 612ZM1057 330L1053 347L1075 363L1080 354L1059 329ZM854 582L858 597L873 603L870 579ZM846 384L834 392L835 398L841 400L845 398L858 383L856 382ZM818 465L813 456L809 457L810 470ZM537 586L532 585L525 586L529 604L542 608L545 607L546 601L543 594ZM673 358L692 358L674 350ZM901 350L889 370L897 372L901 366ZM1065 487L1074 475L1073 473L1071 472L1059 471L1053 483L1060 489ZM735 470L756 454L756 450L754 449L736 443L733 449L734 470ZM843 431L870 439L871 437L872 422L857 418L854 418ZM935 244L942 244L947 242L949 240L949 240L934 240L935 243ZM800 602L795 596L790 608L797 612ZM625 578L619 563L600 565L608 584L611 590ZM916 243L913 242L907 242L902 250L903 259L918 261ZM733 590L732 590L730 612L730 612L751 601L752 599ZM597 564L598 563L606 543L588 541L586 546L592 560ZM754 243L761 254L765 255L774 240L756 240ZM795 364L787 387L790 394L796 392L804 384L807 380ZM819 517L818 521L834 529L835 529L830 511ZM853 314L854 314L876 307L868 295L855 301L853 305ZM1002 251L998 257L1003 274L1011 274L1013 273L1015 256L1009 251ZM727 349L723 328L712 331L714 339L717 348L723 353L726 351ZM930 403L935 388L935 387L931 383L907 392L906 393L917 405ZM873 603L874 603L876 604L887 597L891 577L886 572L880 572L870 579Z" fill="#fff" fill-opacity="0.06" stroke="#56667a" stroke-opacity="0.22" stroke-width="0.6"/>
<path d="M646 405L639 414L640 417L645 424L653 413ZM897 578L915 593L940 583L936 566L921 560ZM903 259L894 265L915 278L918 261L918 261ZM1017 614L1034 607L1022 595L1009 605ZM852 318L853 314L853 305L840 307L839 314L842 317ZM822 482L819 481L817 481L801 492L801 496L802 496L818 495L822 488ZM1085 248L1092 246L1092 240L1075 240L1075 242ZM563 303L558 304L549 325L551 326L569 309ZM1080 530L1092 533L1092 528L1084 518L1083 518ZM548 479L549 483L551 486L572 485L565 462L555 465ZM640 394L646 402L654 401L657 394L650 383ZM866 383L865 380L858 383L845 398L860 398L864 392ZM873 402L870 402L862 406L857 418L872 422L877 420L884 407ZM1037 453L1041 464L1047 464L1051 460ZM1066 306L1066 306L1066 318L1072 315L1071 306ZM858 597L844 612L844 615L847 617L874 603L873 603ZM639 533L627 531L616 533L626 557L634 557L643 539ZM674 502L677 497L677 496L671 491L652 492L657 508ZM1085 248L1085 265L1092 264L1092 246ZM828 315L829 304L810 296L807 301L825 319ZM875 508L878 489L859 481L857 499L868 511ZM539 549L533 552L546 570L549 571L551 565ZM634 510L618 508L614 532L616 533L627 531ZM879 242L879 246L880 251L894 245L896 240L880 240ZM1028 298L1037 298L1037 279L1036 276L1030 275L1023 295L1023 295ZM783 335L783 347L790 355L795 347L790 335ZM551 326L549 325L538 323L533 327L533 328L532 344L543 355L543 355L555 331ZM1079 462L1078 462L1073 473L1074 475L1083 482L1088 482L1092 477L1092 468ZM712 256L715 258L722 255L725 252L725 252L718 247L712 249ZM719 299L722 304L737 302L732 292L725 288L720 290L719 291ZM917 626L921 623L925 612L912 602L909 605L906 620L907 625ZM692 358L693 359L694 350L690 334L671 343L674 350ZM888 561L873 545L867 547L870 564L880 572L886 572ZM1072 315L1076 317L1084 310L1081 302L1071 306ZM505 296L504 295L504 297ZM665 274L668 276L670 274L670 271L664 253L662 260ZM1092 580L1089 580L1080 587L1080 591L1088 605L1092 602L1092 580ZM935 388L947 398L954 400L961 395L963 388L950 383L935 387ZM809 470L810 470L809 457L808 457L802 469L803 472ZM696 534L704 533L710 527L709 516L706 515L693 530ZM529 417L541 415L542 412L530 397L516 406ZM914 473L901 480L897 491L899 496L916 494L917 478ZM1059 493L1060 491L1060 489L1053 483L1046 481L1038 484L1041 496ZM587 307L567 290L563 303L569 309L574 311ZM680 633L681 633L704 622L691 610L682 615L677 630L678 632ZM1046 567L1025 570L1028 583L1047 592L1049 590L1055 575ZM693 303L686 288L672 292L672 295L692 304ZM860 398L845 398L841 400L854 418L857 418L862 406ZM921 623L917 626L931 640L933 640L937 638L937 637L929 622ZM846 355L852 355L856 330L842 333L840 350ZM1005 640L1007 640L1006 637ZM1037 442L1036 441L1019 431L1022 460L1024 461L1034 450ZM779 506L770 498L765 515ZM938 500L941 521L955 523L961 506L960 505L938 500ZM673 258L670 271L670 274L678 273L679 272L679 272L680 261L675 258ZM905 349L913 345L918 335L909 329L900 339L897 347L901 350L902 350ZM1055 369L1074 371L1076 370L1075 363L1053 347L1039 354L1048 364ZM610 595L611 590L608 584L586 585L585 587L586 591L596 601L597 601L602 601ZM722 304L719 299L704 308L706 310L717 312ZM999 548L1004 550L1018 551L1018 543L1018 542L1015 539L1004 535L996 540ZM598 448L599 455L612 451L612 451L612 438ZM565 462L572 485L573 486L598 474L599 473L595 464L570 453ZM1028 274L1028 263L1025 252L1015 256L1013 273ZM673 240L667 240L670 244L671 244ZM673 640L681 640L680 633L678 632ZM897 578L921 560L915 552L892 555L888 561L886 572L891 577ZM965 476L964 457L958 460L956 461L954 479L963 481ZM1092 580L1092 580L1092 580ZM742 284L747 295L748 295L756 290L757 278L757 278L754 278ZM1075 511L1083 518L1084 518L1092 516L1092 507L1088 502L1083 502L1078 506ZM706 477L695 468L688 471L689 483L708 485ZM547 549L562 548L568 543L569 541L567 536L557 531L549 530L542 547ZM960 624L976 609L951 605L953 616L959 624ZM614 532L613 532L606 543L598 563L600 565L619 563L626 557L616 533ZM782 490L768 496L770 498L779 506L784 508L785 494L783 491ZM1027 637L1006 635L1006 635L1006 637L1007 640L1027 640ZM971 437L976 437L981 430L974 415L967 416L969 436ZM1000 356L1008 358L1005 346L1000 345Z" fill="#3c4a66" fill-opacity="0.18" stroke="#56667a" stroke-opacity="0.22" stroke-width="0.6"/>
<path d="M802 521L794 535L805 533L806 524ZM604 336L610 340L615 338L621 329L617 319ZM913 242L916 243L920 241L920 240L913 240ZM510 416L514 406L505 397L504 397L504 417ZM1022 595L1021 594L1012 589L1005 593L1006 605L1009 605ZM561 594L557 595L554 599L562 607L563 606ZM620 384L627 388L640 373L633 362L621 363L615 373ZM1004 535L1015 539L1018 531L1009 521L1006 524ZM816 523L806 524L805 533L806 537L808 539L819 533ZM608 584L600 565L598 563L597 564L589 576L586 585ZM745 577L755 578L754 552L743 554L738 560L736 564L742 574ZM678 273L687 286L694 282L679 272ZM935 387L950 383L947 368L935 367L934 368L931 383ZM580 349L564 345L562 351L573 360L579 362L581 355ZM708 329L712 331L723 328L727 324L726 319L720 315ZM1053 483L1059 471L1052 460L1051 460L1047 464L1046 481ZM513 383L521 379L512 366L508 365L504 365L504 378ZM655 431L648 431L646 432L647 460L647 460L659 448ZM790 280L805 285L802 271L788 273ZM554 262L542 260L538 264L543 281L546 280L561 269L561 268ZM1001 463L986 467L984 480L993 484L999 484L1002 477ZM832 495L834 497L844 502L844 501L843 498L835 488ZM847 542L834 548L840 567L845 567L849 544L848 543ZM537 376L524 381L531 394L553 387L554 380ZM701 261L707 273L716 271L715 258L712 256L701 260ZM859 563L849 544L849 544L845 567L852 577ZM917 538L905 531L901 539L914 549L917 542ZM855 301L868 295L869 287L852 279L842 279L838 287L839 289ZM651 283L647 281L644 283L637 294L651 297L653 294ZM546 280L543 281L539 287L539 290L541 296L562 288ZM1034 607L1035 607L1047 592L1028 583L1021 594L1022 595ZM628 480L639 490L639 464L638 464L628 472ZM681 525L686 526L687 523L674 505L672 510ZM931 383L934 368L933 367L917 368L909 374L907 377L906 380L907 392ZM567 592L579 595L586 591L585 587L567 583L566 591ZM713 601L712 606L713 608L730 612L732 590L725 587ZM575 602L579 595L567 592L569 599ZM511 444L512 447L516 455L521 457L539 443L537 435L537 435L529 433ZM589 269L573 265L564 266L561 268L561 269L568 286L575 285L588 275L589 269ZM960 505L961 506L966 507L973 504L976 496L971 484L966 483ZM842 333L856 330L857 329L852 318L842 317L836 329ZM718 247L717 241L715 240L714 240L708 245L712 249ZM994 505L1007 501L999 484L993 484L990 498ZM942 300L968 310L973 304L940 292L937 292ZM512 447L511 444L508 441L504 440L504 451ZM704 293L700 303L704 308L719 299L719 291ZM647 254L645 253L629 254L625 264L625 266L626 268L627 269L637 269L646 266L647 255ZM635 295L637 315L642 321L654 314L655 314L654 301L651 297L637 294ZM833 472L818 465L810 470L809 470L819 481L822 482L832 474Z" fill="#fff" fill-opacity="0.12" stroke="#56667a" stroke-opacity="0.22" stroke-width="0.6"/>
<path d="M671 491L668 473L657 470L649 491L652 492ZM818 495L802 496L800 505L812 508L821 501ZM1019 309L1028 299L1028 298L1023 295L1014 304ZM505 296L511 296L513 288L509 277L504 278L504 295ZM986 328L973 339L973 343L988 347L994 342L987 328ZM577 513L565 502L560 506L562 509L572 516ZM519 636L523 621L523 620L504 625L504 628ZM554 246L553 245L551 242L541 253L542 260L554 262ZM680 538L680 543L691 556L695 553L696 534L693 530L687 527ZM1052 518L1039 505L1024 510L1029 523L1034 527L1047 522ZM947 368L966 367L964 351L956 345L943 354L939 358L935 367ZM988 288L978 301L984 306L1004 308L1006 303L1005 297ZM809 337L795 347L790 355L791 358L795 361L812 358ZM727 324L737 332L743 331L737 310L726 319ZM771 574L796 581L796 579L777 563ZM1009 251L1015 256L1025 252L1029 247L1027 240L1016 240L1011 245ZM514 423L508 441L511 444L529 433L524 425ZM853 638L854 632L836 637L834 640L852 640ZM973 304L976 301L963 286L940 292ZM599 358L609 374L615 373L621 363L619 360L618 358L610 351L600 353ZM590 409L598 405L599 401L585 378L584 380L579 395L583 402ZM1046 481L1047 464L1041 464L1028 466L1029 479L1031 482L1038 484ZM920 241L935 243L934 240L920 240ZM768 495L765 485L758 481L752 481L745 504L751 506ZM1071 472L1073 473L1078 462L1063 458L1056 458ZM1011 581L1015 569L1005 568L993 569L991 573L995 583ZM1011 362L1003 372L1025 380L1026 380L1030 367L1029 357ZM677 630L658 628L656 632L654 640L673 640L678 632ZM610 351L618 358L625 344L615 338L610 340ZM799 575L796 579L796 581L795 586L810 588L816 582ZM626 557L619 563L625 578L626 578L637 575L643 565L634 557ZM815 365L815 374L823 378L824 378L827 372ZM1025 252L1028 263L1043 254L1034 249L1029 247ZM918 335L920 334L922 331L927 321L917 308L911 312L909 329ZM567 574L584 561L570 554L563 561L563 562ZM892 612L895 602L887 597L876 604L876 611L881 615ZM917 308L921 296L921 296L904 293L888 307L885 313L897 315L911 312Z" fill="#fff" fill-opacity="0.3" stroke="#56667a" stroke-opacity="0.22" stroke-width="0.6"/>
<path d="M1060 574L1063 575L1086 566L1087 555L1067 563ZM1061 329L1066 318L1066 306L1053 308L1050 323L1054 327L1057 330L1059 329ZM945 588L960 585L970 565L968 552L961 547L947 551L936 566L940 583ZM525 586L518 583L505 585L512 608L517 614L522 617L529 604ZM730 389L742 401L751 393L751 387L748 385ZM542 608L533 623L539 627L557 619L557 619L545 607ZM733 449L736 443L735 440L723 435L721 436L725 449ZM962 416L962 416L941 425L940 429L953 433L955 432ZM795 596L800 602L816 605L817 602L810 588L795 586L794 587L793 593ZM654 517L648 517L639 533L643 539L645 540L664 525L662 523ZM713 632L708 623L704 622L681 633L706 640L707 640ZM691 610L704 622L708 623L713 608L712 606L698 602ZM759 273L768 262L765 255L761 254L749 257L750 260ZM1048 364L1039 354L1030 355L1029 357L1030 367L1045 376L1045 376ZM1088 482L1092 487L1092 477ZM817 626L796 621L792 623L795 640L817 640ZM894 634L900 638L907 625L906 620L897 617L885 620ZM747 295L742 284L741 284L732 292L737 302L740 305ZM729 469L734 470L733 449L725 449L717 455L718 462ZM576 397L579 395L584 380L570 390L571 394ZM725 252L725 252L739 249L739 248L737 240L723 240ZM956 461L945 456L938 469L944 481L954 479ZM897 372L906 380L907 377L901 366ZM780 291L790 280L788 273L785 266L783 266L772 280L779 291ZM1066 552L1066 555L1067 563L1087 555L1089 552L1073 544ZM717 241L718 247L725 252L723 240L723 240ZM1090 618L1092 621L1092 617ZM595 432L596 431L588 416L581 426ZM986 634L960 624L959 624L957 629L961 640L982 640ZM836 329L842 317L839 314L828 315L825 319L824 322L832 329ZM592 286L586 299L587 307L594 311L611 292ZM638 464L639 464L647 460L634 446L626 452L626 457L628 458ZM515 522L523 515L504 504L504 512ZM645 253L640 240L632 240L624 243L629 254ZM961 240L970 245L973 243L973 243L973 240L961 240Z" fill="#fff" fill-opacity="0.21" stroke="#56667a" stroke-opacity="0.22" stroke-width="0.6"/>
<path d="M807 559L803 569L817 581L820 580L824 573L807 559ZM706 575L699 585L710 588L723 584L722 578L718 570ZM705 240L697 240L694 243L694 249L705 245ZM782 600L793 593L794 587L775 583L773 593ZM1020 317L1018 319L1018 322L1033 328L1041 322L1035 315L1028 313ZM582 614L591 618L597 601L596 601L580 606ZM717 455L710 441L707 441L697 451L699 461L716 463L718 462ZM673 358L670 375L681 382L685 381L690 378L695 369L693 359L692 358ZM1078 506L1083 502L1080 494L1065 487L1060 489L1060 491ZM754 552L755 578L756 578L770 575L771 574L777 563L777 562L758 550L757 550ZM504 628L504 640L519 640L519 636ZM504 496L512 493L510 475L508 473L508 473L505 474ZM776 639L775 640L778 640ZM727 388L723 404L742 413L745 411L742 401L730 389L727 388ZM523 462L530 469L544 461L543 445L539 443L521 457ZM676 456L671 454L654 466L657 470L668 473L679 467L678 458ZM802 469L808 457L793 450L792 460ZM550 579L549 571L546 570L538 569L532 585L537 586ZM1011 245L1016 240L1007 240ZM775 477L783 478L786 477L787 466L777 462L771 467ZM682 317L684 321L691 333L692 333L703 327L706 310L704 308L700 303L693 303L692 304ZM1056 636L1063 635L1068 627L1052 618L1042 623L1041 628ZM627 389L627 388L620 384L610 396L617 403ZM976 370L970 371L968 380L987 398L987 398L988 397L982 372ZM530 471L548 479L555 465L544 461L530 469ZM684 321L682 317L672 314L665 317L672 328ZM762 463L758 481L765 485L775 477L771 467ZM504 558L504 563L519 555L513 552ZM1060 517L1060 518L1063 519L1075 511L1078 506L1060 491L1059 493L1058 496ZM990 282L985 262L978 268L978 276L988 284ZM586 299L575 285L568 286L567 287L567 290L587 307L587 307ZM988 633L1000 633L1000 612L980 611ZM674 505L674 502L657 508L654 517L662 523L672 510ZM1053 278L1042 272L1036 276L1037 279L1046 286ZM1034 249L1041 240L1027 240L1029 247ZM1028 349L1020 343L1005 346L1008 358L1011 362L1029 357L1030 355ZM797 481L800 477L803 472L802 469L792 460L787 466L786 477ZM980 600L971 588L960 585L945 588L945 593L951 605L976 609L978 608ZM837 272L841 276L852 258L852 257L834 264L835 267ZM543 445L544 461L555 465L565 462L570 453L568 445L568 445ZM809 470L803 472L800 477L817 481L819 481ZM549 637L539 628L535 640L548 640ZM767 339L773 349L783 347L783 335L781 334L768 332ZM654 623L654 611L653 608L636 604L637 622ZM526 486L549 483L548 479L530 471ZM827 506L833 499L828 499L826 504ZM591 512L588 512L585 513L578 530L589 535L600 527ZM745 632L735 639L754 639ZM922 519L932 501L924 499L905 517L917 522ZM781 294L786 306L798 308L807 301L810 296L811 290L805 285L790 280L780 291ZM657 430L672 417L662 411L654 413ZM520 259L531 266L538 264L524 251ZM1011 581L995 583L996 590L1005 593L1012 589ZM995 583L991 573L988 573L978 582L994 592L996 590ZM789 409L806 415L820 405L815 400L796 392L790 394L787 401ZM563 562L563 561L558 553L551 551L557 563ZM1039 505L1050 503L1055 497L1041 501ZM620 413L622 420L628 421L640 417L639 414L628 406L622 410ZM1079 462L1080 455L1080 453L1077 437L1073 436L1063 458L1078 462ZM789 545L788 548L789 551L807 559L807 559L811 554L808 539L806 537ZM579 362L583 372L599 358L600 353L596 351L581 355ZM706 575L689 558L684 563L676 580L694 588L699 585ZM754 449L748 431L742 429L735 440L736 443ZM894 265L882 269L882 271L915 284L915 278ZM634 557L643 565L648 566L648 565L648 542L645 540L643 539Z" fill="#3c4a66" fill-opacity="0.15" stroke="#56667a" stroke-opacity="0.22" stroke-width="0.6"/>
<path d="M716 271L707 273L706 275L720 290L725 288L726 273ZM1049 301L1053 308L1066 306L1066 306L1063 290ZM958 460L952 447L944 453L945 456L956 461ZM752 481L735 470L730 501L733 507L745 504ZM1000 612L1000 609L988 599L980 600L978 608L980 611ZM523 515L527 513L540 507L540 507L523 492L514 493L512 493L504 496L504 496L504 504ZM516 455L511 458L508 473L516 470L523 462L521 457ZM1052 460L1059 471L1071 472L1056 458L1053 457ZM996 341L1005 328L998 322L991 322L987 328L994 342L996 342ZM825 319L807 301L798 308L799 316L804 329L807 331L824 322ZM1078 592L1065 610L1079 619L1086 619L1089 618L1088 605L1080 591ZM551 551L547 549L542 547L539 549L551 565L557 563ZM882 269L878 262L868 260L861 261L852 279L869 287L882 274L882 271ZM897 346L879 339L881 361ZM1009 462L1022 460L1019 431L1018 430L1012 430L1007 445L1003 458L1003 460ZM508 542L522 538L522 532L522 531L516 525L504 532L504 536ZM636 602L636 590L632 590L619 599L620 601L635 603ZM985 258L982 254L971 259L969 260L978 268L985 262L985 262ZM918 457L894 445L894 445L893 446L890 455L910 466L915 467L920 462ZM968 512L981 526L984 526L988 519L990 510L973 504L966 507ZM699 281L701 281L706 275L707 273L701 261L690 270ZM1004 308L1005 311L1018 319L1020 317L1019 309L1014 304L1006 303ZM756 290L761 295L771 292L757 278ZM757 640L757 640L757 640ZM783 478L782 490L783 491L799 488L797 481L786 477ZM648 517L638 508L634 510L627 531L639 533ZM639 414L646 405L646 402L640 394L632 394L628 406ZM720 290L706 275L701 281L704 293L719 291ZM1011 483L1015 477L1004 478ZM510 416L514 423L524 425L529 417L516 406L514 406ZM1038 484L1031 482L1017 506L1024 510L1039 505L1039 505L1041 501L1041 496ZM922 519L939 525L941 521L938 500L932 501ZM720 315L726 319L737 310L740 306L740 305L737 302L722 304L717 312ZM555 377L554 371L543 355L538 360L537 376L554 380ZM572 533L578 530L585 513L577 513L572 516L572 516ZM565 252L557 247L554 246L554 262L561 268L564 266ZM1003 458L995 451L980 451L977 460L979 462L986 467L1001 463L1003 460ZM576 605L580 606L596 601L586 591L579 595L575 602ZM762 518L765 515L770 498L768 496L768 495L751 506ZM998 241L996 244L1002 251L1009 251L1011 245L1007 240L999 240ZM572 516L562 509L564 519L572 516ZM1089 552L1092 551L1092 533L1080 530L1068 532L1073 544ZM603 376L585 378L585 378L599 401L601 400L604 384ZM949 240L947 242L959 263L961 262L960 245L957 242ZM882 618L885 620L897 617L892 612L881 615ZM562 617L557 619L557 619L558 632L560 635L575 634L578 629L568 618L567 618ZM870 387L866 383L864 392L870 402L873 402ZM820 268L835 267L834 264L827 246L826 246L819 261ZM634 446L647 460L647 460L646 432L643 433L633 439ZM862 360L879 339L875 329L857 329L856 330L852 355L857 358ZM726 418L725 428L740 425L741 415ZM672 417L657 430L656 431L670 440L677 438L678 438L673 417ZM778 633L777 634L776 639L778 640L790 640ZM945 269L941 272L936 291L937 292L940 292L963 286L964 279L956 267ZM821 501L812 508L819 517L830 511L830 511L827 506L826 504ZM818 240L818 240L818 240ZM533 623L542 608L529 604L522 617L523 620L523 621ZM998 257L995 257L993 266L1002 274L1003 274ZM735 470L752 481L758 481L762 463L757 454L756 454L735 470ZM716 463L706 477L708 485L709 486L729 469L718 462ZM828 572L824 573L820 580L828 594L835 593L840 586ZM539 290L512 297L516 303L517 305L535 309L542 296L541 296ZM723 404L727 388L711 390L707 402L722 405ZM897 617L906 620L909 605L895 602L892 612ZM1056 636L1041 628L1036 633L1039 640L1056 640ZM1052 247L1063 240L1051 240ZM987 398L990 403L1007 392L1008 390L999 377L988 397ZM817 626L822 617L816 605L797 619L796 621ZM1066 555L1045 552L1046 567L1055 575L1060 574L1067 563Z" fill="#3c4a66" fill-opacity="0.06" stroke="#56667a" stroke-opacity="0.22" stroke-width="0.6"/>
<path d="M977 460L980 451L979 441L976 437L971 437L963 451L965 456ZM892 538L892 539L901 539L905 531L904 517L902 517ZM853 464L847 463L844 465L843 498L844 501L857 499L859 481ZM893 288L888 307L904 293ZM754 365L741 374L747 380L760 372L764 367L763 365L761 364ZM738 351L726 351L723 353L721 363L723 366L746 362ZM876 611L862 626L871 636L876 633L882 618L881 615ZM665 448L670 440L656 431L655 431L659 448ZM835 488L843 498L844 465L833 472L832 474ZM1075 329L1076 317L1072 315L1066 318L1061 329ZM875 527L875 542L891 540L892 539L892 538L889 535L876 527ZM568 250L566 245L557 247L565 252ZM810 263L819 261L826 246L818 241L804 246L804 261ZM852 581L840 586L835 593L844 612L858 597L854 582ZM884 485L884 466L882 463L860 461L853 464L859 481L878 489ZM918 457L918 446L894 445ZM844 465L847 463L835 439L829 436L826 437L813 456L818 465L833 472ZM763 365L773 349L767 339L755 350L761 364ZM818 240L818 241L826 246L827 246L841 240L818 240ZM767 339L768 332L765 328L753 328L748 332L750 346L755 350ZM896 425L895 431L897 436L907 433L908 418L906 417ZM1018 542L1034 530L1034 527L1029 523L1018 531L1015 539ZM512 608L504 613L504 619L517 614ZM973 243L982 253L990 244L987 240L973 240ZM883 391L877 373L873 372L869 372L865 380L866 383L870 387L873 389ZM517 338L533 328L533 327L516 324L506 327L507 330ZM1017 506L1017 506L1031 482L1029 479L1024 480L1012 488L1008 501ZM753 328L765 328L766 324L764 313L755 308L750 310ZM522 379L521 379L513 383L505 397L514 406L516 406L530 397L531 394L524 381Z" fill="#fff" fill-opacity="0.24" stroke="#56667a" stroke-opacity="0.22" stroke-width="0.6"/>
<path d="M675 258L680 261L687 251L681 249ZM508 365L510 353L509 352L504 358L504 365ZM1020 317L1028 313L1028 299L1019 309ZM924 499L916 494L899 496L896 508L901 516L902 517L904 517L905 517ZM996 360L997 374L999 375L1003 372L1011 362L1008 358L1000 356L998 356L996 360ZM764 525L762 518L751 506L745 504L733 507L732 509L733 525L755 533ZM650 599L655 593L656 590L643 587L642 587L642 587L646 597ZM918 446L920 434L907 433L897 436L894 445L894 445ZM818 387L818 387L816 390L815 400L820 405L825 406L835 398L834 392L833 388ZM583 402L579 395L576 397L568 406ZM583 375L585 378L603 376L609 374L599 358L583 372ZM692 333L691 333L690 334L694 350L712 347L702 340ZM724 430L725 428L726 418L720 413L711 416L710 420ZM511 458L516 455L512 447L504 451L504 462ZM961 262L966 260L967 247L960 245ZM830 348L840 350L842 333L836 329L832 329L827 341ZM1083 376L1071 399L1074 405L1087 395L1083 376ZM565 408L569 415L587 412L590 409L583 402L568 406ZM1019 390L1008 390L1007 392L1007 393L1012 405L1025 409L1021 394ZM618 317L620 294L612 292L611 292L594 311L596 315L617 319ZM588 416L587 412L569 415L566 429L566 429L581 426ZM1068 627L1063 635L1070 640L1080 640L1080 640L1086 619L1079 619ZM999 484L1007 501L1008 501L1012 488L1011 483L1004 478L1002 477ZM1028 349L1030 343L1033 328L1018 322L1014 328L1015 335L1020 343ZM622 410L628 406L632 394L627 389L617 403ZM706 310L703 327L708 329L720 315L717 312ZM987 398L968 399L975 413L990 406L990 403L987 398ZM514 474L516 470L508 473L508 473L510 475ZM638 276L631 293L635 295L637 294L644 283ZM1000 633L1006 635L1006 635L1017 614L1009 605L1006 605L1000 609L1000 612ZM1039 541L1034 530L1018 542L1018 543ZM990 244L982 253L982 254L985 258L995 257L998 257L1002 251L996 244ZM1050 392L1049 395L1071 399L1083 376L1076 370L1074 371ZM717 549L738 560L743 554L728 538L719 545ZM717 455L725 449L721 436L710 441ZM1006 303L1014 304L1023 295L1023 295L1013 289L1005 297ZM833 366L837 367L846 355L840 350L830 348L818 358ZM773 526L784 523L790 514L784 508L779 506L765 515L762 518L764 525ZM803 569L799 575L816 582L817 581ZM1004 478L1015 477L1015 477L1009 462L1003 460L1001 463L1002 477ZM884 524L888 508L875 508L868 511L866 518L875 527L876 527L881 525ZM591 438L598 448L612 438L614 435L599 430L596 431L595 432ZM516 525L515 522L504 512L504 532ZM869 372L873 372L881 361L879 339L879 339L862 360ZM948 320L963 318L968 311L968 310L942 300L948 319ZM514 493L514 474L510 475L512 493ZM812 358L795 361L795 364L807 380L810 379L815 374L815 365L814 359ZM613 276L626 268L625 266L610 267L608 270ZM941 421L954 405L954 400L947 398L934 410L934 411ZM687 527L693 530L706 515L697 509L691 511L687 523L686 526ZM955 342L965 325L963 318L948 320L946 336ZM1048 430L1036 441L1037 442L1053 451L1063 434ZM680 261L679 272L686 270L692 251L687 251ZM971 484L983 481L984 480L986 467L979 462L965 476L963 481L966 483ZM519 636L519 640L535 640L539 628L539 627L533 623L523 621ZM726 273L725 288L732 292L741 284L732 271L728 272ZM562 333L555 331L543 355L562 351L562 351L564 345ZM1028 583L1025 570L1020 567L1015 569L1011 581L1012 589L1021 594Z" fill="#3c4a66" fill-opacity="0.12" stroke="#56667a" stroke-opacity="0.22" stroke-width="0.6"/>
<path d="M728 538L731 529L710 527L704 533L719 545ZM571 394L570 390L556 393L557 402L558 403ZM967 416L974 415L975 413L968 399L961 395L954 400L954 405L962 416L962 416ZM880 316L881 314L876 307L854 314ZM602 601L597 601L591 618L590 629L593 631L602 629L607 613ZM942 300L937 292L936 291L921 296L917 308L927 321L927 321L948 319ZM627 389L632 394L640 394L650 383L651 378L640 373L627 388ZM736 564L738 560L717 549L714 555L719 568ZM509 352L507 346L506 345L504 346L504 358ZM982 326L968 311L963 318L965 325L968 328Z" fill="#3c4a66" fill-opacity="0.21" stroke="#56667a" stroke-opacity="0.22" stroke-width="0.6"/>
<path d="M942 621L953 616L951 605L945 593L932 611L934 616ZM749 257L741 254L737 267L746 273L750 260ZM926 347L930 363L933 367L934 368L935 367L939 358L938 354L934 340L932 341L928 344ZM632 590L626 578L625 578L611 590L610 595L619 599ZM557 247L566 245L565 242L553 245L554 246ZM759 303L755 308L764 313L771 308L767 302L767 302L761 299ZM566 429L568 445L568 445L591 438L595 432L581 426ZM562 607L562 617L567 618L576 605L575 602L569 599L563 606ZM835 439L847 463L853 464L860 461L870 439L843 431ZM947 242L942 244L945 269L956 267L959 263ZM816 582L810 588L817 602L828 594L820 580L817 581ZM509 277L513 268L513 268L504 265L504 278ZM810 379L807 380L804 384L816 390L818 387ZM538 360L528 364L522 379L524 381L537 376ZM1041 464L1037 453L1034 450L1024 461L1028 466ZM938 535L947 551L961 547L964 535L961 530L960 529L937 531ZM574 638L571 640L574 640ZM836 530L847 542L848 543L858 524L844 515ZM895 602L909 605L912 602L915 593L897 578L891 577L887 597ZM505 474L508 473L504 464L504 474ZM543 522L541 508L540 507L527 513L522 531L522 532ZM549 483L526 486L523 492L540 507L551 486ZM800 477L797 481L799 488L801 492L817 481ZM537 435L537 435L560 428L541 416ZM807 331L804 329L790 335L795 347L809 337L809 336ZM1029 413L1018 430L1019 431L1036 441L1048 430L1038 410ZM722 255L715 258L716 271L726 273L728 272ZM953 433L953 446L963 451L971 437L969 436L955 432ZM1026 380L1025 380L1019 390L1021 394L1042 392ZM584 336L570 330L562 333L564 345L580 349ZM1025 380L1003 372L999 375L999 377L1008 390L1019 390ZM837 272L835 267L820 268L818 276ZM824 436L809 424L794 431L794 443ZM994 505L990 510L988 519L1006 524L1009 521L1017 506L1008 501L1007 501ZM1074 408L1071 411L1084 425L1092 415L1092 413ZM1048 545L1054 544L1067 532L1066 527L1049 534ZM882 274L869 287L868 295L876 307L881 314L885 313L888 307L893 288ZM827 506L830 511L839 509L844 502L834 497L833 499ZM645 253L647 254L653 250L653 240L640 240ZM643 587L656 590L660 586L649 583ZM799 316L798 308L786 306L784 307L779 316L783 328ZM653 377L651 378L650 383L657 394L672 392L678 389L681 382L670 375L666 374ZM978 608L976 609L960 624L986 634L988 633L980 611ZM808 539L811 554L825 549L820 534L819 533ZM907 242L913 242L913 240L905 240ZM827 246L834 264L852 257L841 240L841 240ZM1006 637L1006 635L1000 633L988 633L986 634L982 640L1005 640Z" fill="#fff" fill-opacity="0.15" stroke="#56667a" stroke-opacity="0.22" stroke-width="0.6"/>
<path d="M853 638L852 640L857 640ZM694 243L697 240L693 240ZM666 527L666 535L680 538L687 527L686 526L681 525ZM1015 335L1014 328L1005 328L996 341ZM866 518L858 524L848 543L849 544L849 544L867 547L873 545L875 542L875 527ZM758 550L774 541L773 526L764 525L755 533L757 550ZM659 261L662 260L664 253L664 250L653 250L647 254L647 255ZM660 554L675 580L676 580L684 563L664 548L663 548ZM961 262L959 263L956 267L964 279L975 276L966 260L966 260ZM508 544L508 542L504 536L504 548ZM1080 455L1079 462L1092 468L1092 455ZM969 436L967 416L962 416L955 432ZM671 244L670 244L666 249L673 258L675 258L681 249Z" fill="#fff" fill-opacity="0.03" stroke="#56667a" stroke-opacity="0.22" stroke-width="0.6"/>
<path d="M874 603L847 617L857 625L862 626L876 611L876 604ZM1056 458L1063 458L1073 436L1066 433L1063 434L1053 451L1053 457ZM662 523L664 525L666 527L681 525L672 510ZM710 588L699 585L694 588L698 602L712 606L713 601ZM554 580L550 579L537 586L543 594L554 591ZM919 415L920 415L934 411L934 410L930 403L917 405ZM1088 605L1089 618L1090 618L1092 617L1092 602ZM1089 552L1087 555L1086 566L1089 580L1092 580L1092 580L1092 551ZM631 640L630 624L628 623L618 640L629 640ZM650 269L647 281L651 283L662 283L667 280L668 276L665 274L656 271ZM557 402L542 412L541 415L541 416L560 428L566 429L569 415L565 408L558 403ZM1026 380L1042 392L1048 396L1049 395L1050 392L1045 376L1030 367ZM646 597L642 587L636 590L636 602ZM937 531L960 529L955 523L941 521L939 525L937 531ZM681 633L680 633L681 640L706 640ZM599 503L595 492L588 494ZM844 615L842 616L836 637L854 632L857 625L847 617ZM557 619L539 627L539 628L549 637L558 632ZM732 639L728 635L726 640L731 640ZM990 406L975 413L974 415L981 430L999 424L996 414ZM815 374L810 379L818 387L818 387L823 378ZM983 481L986 495L990 498L993 484L984 480ZM889 370L901 350L901 350L897 347L897 346L881 361L873 372L877 373L883 373ZM926 347L928 344L920 334L918 335L913 345ZM619 360L635 339L625 344L618 358ZM767 302L775 292L771 292L761 295L761 299ZM564 519L557 531L567 536L572 533L572 516ZM678 438L677 438L676 456L678 458L690 449L684 439ZM1018 551L1004 550L1005 568L1015 569L1020 567L1020 554ZM925 260L941 272L945 269L942 244L935 244ZM617 461L617 461L603 475L607 478L624 472L623 468ZM755 533L733 525L731 529L728 538L743 554L754 552L757 550ZM535 249L541 253L551 242L550 240L539 240ZM665 602L655 593L650 599L653 608L654 611ZM549 325L558 304L542 296L535 309L538 323ZM599 503L600 504L613 500L614 496L611 485L607 478L603 475L599 473L598 474L595 492ZM613 276L611 291L612 292L620 294L626 292L627 269L626 268ZM957 242L960 245L967 247L970 245L961 240ZM513 268L515 263L506 249L504 253L504 265ZM667 280L662 283L653 294L651 297L654 301L670 298L672 295L672 292ZM759 303L761 299L761 295L756 290L748 295Z" fill="#fff" fill-opacity="0.27" stroke="#56667a" stroke-opacity="0.22" stroke-width="0.6"/>
<path d="M932 341L922 331L920 334L928 344ZM938 500L960 505L966 483L963 481L954 479L944 481L942 484ZM892 522L901 516L896 508L888 508L884 524ZM1007 392L990 403L990 406L996 414L1003 409L1007 393ZM802 246L798 240L775 240L787 252ZM653 250L664 250L666 249L670 244L667 240L653 240ZM645 637L632 640L643 640ZM824 573L828 572L831 569L829 550L825 549L811 554L807 559ZM788 548L789 545L789 537L784 523L773 526L774 541ZM1080 494L1083 482L1074 475L1065 487ZM701 260L712 256L712 249L708 245L705 245L694 249L694 250ZM701 499L703 498L710 489L709 486L708 485L689 483L685 491ZM578 629L590 629L591 618L582 614L568 618ZM565 408L568 406L576 397L571 394L558 403ZM726 631L713 632L707 640L726 640L728 635ZM748 332L743 331L737 332L727 349L726 351L738 351L750 346ZM590 268L581 243L576 247L573 265L589 269ZM671 454L676 456L677 438L670 440L665 448ZM615 338L625 344L635 339L636 339L636 336L636 334L621 329ZM516 303L512 297L511 296L505 296L504 297L504 315ZM1041 322L1050 323L1053 308L1049 301L1047 299L1038 299L1035 315ZM1013 289L1011 274L1003 274L1002 274L990 282L988 284L988 288L1005 297ZM835 301L839 289L838 287L813 288L811 290L810 296L829 304ZM868 511L857 499L844 501L844 502L839 509L844 515L858 524L866 518ZM893 471L910 466L890 455L882 463L884 466ZM646 266L650 269L656 271L659 261L647 255ZM642 352L633 362L640 373L651 378L653 377L646 352ZM695 369L690 378L711 390L727 388L727 388L728 375L723 366L721 363ZM934 410L947 398L935 388L930 403ZM531 394L530 397L542 412L557 402L556 393L553 387ZM930 363L926 347L913 345L905 349ZM746 273L754 278L757 278L758 276L759 273L750 260ZM915 278L915 284L921 296L921 296L936 291L941 272L925 260L918 261Z" fill="#fff" fill-opacity="0.33" stroke="#56667a" stroke-opacity="0.22" stroke-width="0.6"/>
</g>
<rect x="504" y="240" width="588" height="400" fill="#34486a" fill-opacity="0.045"/>
<g filter="url(#bl5)">
<polygon points="630.0,445.0 690.0,440.0 700.0,470.0 680.0,492.0 650.0,480.0 628.0,470.0" fill="#dde4e4" fill-opacity="0.5" />
<polygon points="572.0,462.0 590.0,470.0 586.0,500.0 570.0,505.0" fill="#d8e4dc" fill-opacity="0.4" />
<polygon points="738.0,300.0 760.0,286.0 800.0,284.0 816.0,300.0 814.0,340.0 796.0,356.0 770.0,350.0 745.0,336.0" fill="#50607e" fill-opacity="0.32" />
<polygon points="1034.0,598.0 1060.0,594.0 1092.0,598.0 1092.0,640.0 1040.0,640.0 1030.0,622.0" fill="#50607e" fill-opacity="0.36" />
<polygon points="978.0,604.0 1000.0,600.0 1011.0,618.0 1005.0,637.0 982.0,634.0" fill="#50607e" fill-opacity="0.34" />
<polygon points="880.0,418.0 925.0,416.0 940.0,450.0 930.0,490.0 895.0,488.0" fill="#6070a0" fill-opacity="0.3" />
<polygon points="504.0,244.0 545.0,244.0 560.0,262.0 548.0,292.0 504.0,296.0" fill="#5a8088" fill-opacity="0.3" />
<polygon points="600.0,300.0 640.0,296.0 650.0,330.0 630.0,352.0 604.0,340.0" fill="#6a7a9a" fill-opacity="0.22" />
</g>
<g filter="url(#bl)">
<polygon points="684.0,500.0 682.5,464.0 697.5,427.0 735.0,412.0 757.5,410.0 780.0,436.0 814.0,455.0 844.0,485.0 855.0,502.0 847.5,520.6 829.0,535.6 800.6,549.0 790.0,575.0 772.0,582.0 772.0,546.0 716.0,546.0 712.0,530.0 700.0,533.0 690.0,520.0" fill="#d6cc86" fill-opacity="0.6" />
<polygon points="726.0,459.0 772.0,459.0 810.0,470.0 829.0,485.0 791.0,511.0 780.0,500.0 742.0,489.0 731.0,496.0 724.0,474.0" fill="#7c7c50" fill-opacity="0.22" />
<polygon points="703.0,452.0 716.0,440.0 724.0,452.0 722.0,490.0 728.0,515.0 712.0,522.0 703.0,498.0" fill="#d8987a" fill-opacity="0.35" />
<polygon points="660.0,530.0 716.0,528.0 754.0,533.0 754.0,546.0 716.0,546.0 700.0,560.0 660.0,566.0" fill="#d0a880" fill-opacity="0.45" />
<polygon points="625.0,580.0 700.0,560.0 715.0,548.0 715.0,575.0 640.0,632.0 600.0,640.0 590.0,640.0" fill="#cfae8a" fill-opacity="0.6" />
<polygon points="676.0,566.0 716.0,547.0 716.0,575.0 709.0,580.0 709.0,606.0 707.0,640.0 600.0,640.0 640.0,598.0" fill="#dca6dc" fill-opacity="0.85" />
<polygon points="903.0,436.0 952.0,436.0 965.0,480.0 1000.0,520.0 1058.0,538.0 1065.0,440.0 1092.0,440.0 1092.0,592.0 912.0,592.0 910.0,576.0 887.0,558.0 915.0,536.0 931.0,508.0 912.0,470.0" fill="#b2bce0" fill-opacity="0.5" />
<polygon points="1068.0,400.0 1092.0,400.0 1092.0,600.0 1066.0,590.0" fill="#c4cceb" fill-opacity="0.35" />
<polygon points="504.0,512.0 585.0,530.0 600.0,540.0 576.0,542.0 504.0,526.0" fill="#b4b8e0" fill-opacity="0.6" />
<polygon points="592.5,258.0 611.0,240.0 686.0,240.0 700.0,281.0 707.5,337.0 659.0,355.0 640.0,336.0 620.0,298.5 594.0,268.5" fill="#46567f" fill-opacity="0.74" />
<polygon points="636.0,258.0 660.0,270.0 650.0,290.0 630.0,280.0" fill="#4a5a98" fill-opacity="0.3" />
<polygon points="577.0,241.0 611.0,240.0 592.0,258.0 594.0,268.0 572.0,286.0 573.0,250.0" fill="#bcc4e2" fill-opacity="0.5" />
<polygon points="685.0,240.0 830.0,240.0 830.0,245.0 699.5,279.0" fill="#62729f" fill-opacity="0.5" />
<polygon points="734.0,240.0 830.0,240.0 830.0,243.0 748.0,265.0" fill="#465a96" fill-opacity="0.5" />
<polygon points="822.0,240.0 985.0,240.0 986.3,251.3 1011.0,305.6 1014.4,326.0 1067.5,402.5 1068.5,440.0 1065.0,533.0 1057.0,539.0 992.0,516.0 970.0,491.0 955.0,441.0 935.0,411.0 910.0,381.0 890.0,356.0 905.0,340.0 930.0,337.0 922.0,318.0 905.0,302.0 875.0,306.0 858.0,313.0 850.0,313.0 835.0,281.0" fill="#42528a" fill-opacity="0.74" />
<polygon points="878.0,240.0 935.0,240.0 951.0,245.0 893.0,273.0 875.0,267.0" fill="#2c3e84" fill-opacity="0.76" />
<polygon points="893.0,274.0 976.0,280.0 984.0,301.0 968.0,323.0 958.0,348.0 930.0,357.0 951.0,323.0 920.0,305.0 880.0,280.0 875.0,267.0" fill="#2c3e84" fill-opacity="0.8" />
<polygon points="893.0,273.0 951.0,245.0 976.0,280.0" fill="#7484b4" fill-opacity="0.25" />
<polygon points="962.0,360.0 1000.0,350.0 1010.0,380.0 1000.0,400.0 975.0,398.0 962.0,380.0" fill="#4a5ea6" fill-opacity="0.45" />
<polygon points="990.0,480.0 1066.0,470.0 1065.0,533.0 1057.0,539.0 1000.0,518.0" fill="#4d60a4" fill-opacity="0.4" />
<polygon points="890.0,356.0 930.0,340.0 955.0,441.0 970.0,491.0 960.0,480.0 945.0,440.0 930.0,410.0" fill="#6a7bb0" fill-opacity="0.25" />
<polygon points="504.0,524.0 575.0,542.0 628.0,573.0 632.0,580.0 600.0,640.0 575.0,640.0 504.0,566.0" fill="#2f4090" fill-opacity="0.82" />
<polygon points="538.4,562.8 574.0,640.0 583.0,640.0" fill="#b4bcdc" fill-opacity="0.8" />
<polygon points="629.0,575.0 636.0,584.0 636.0,600.0 609.0,640.0 598.0,640.0" fill="#b8c0dc" fill-opacity="0.75" />
<polygon points="636.0,634.0 708.0,619.0 766.0,607.0 828.0,591.5 1022.0,596.0 937.0,607.0 831.0,621.0 708.0,636.5 640.0,640.0 636.0,640.0" fill="#33448e" fill-opacity="0.88" />
<polygon points="860.0,592.0 1022.0,596.0 920.0,609.0 870.0,605.0" fill="#8a98c8" fill-opacity="0.3" />
</g>
<g filter="url(#bl3)">
<polyline points="575.0,239.8 585.0,246.0 593.8,254.8 610.0,264.0 630.0,269.8 638.8,272.9 666.2,269.8 672.5,265.4 682.5,263.5 693.8,256.0 696.2,248.5 698.8,239.8" fill="none" stroke="#1b2878" stroke-width="1.6" stroke-opacity="0.95" stroke-linejoin="round" stroke-linecap="round" />
<polyline points="618.0,239.8 613.8,252.2 610.0,264.0" fill="none" stroke="#1b2878" stroke-width="1.6" stroke-opacity="0.95" stroke-linejoin="round" stroke-linecap="round" />
<polyline points="638.8,273.5 640.0,283.5 650.0,303.5 661.2,308.5 665.5,326.0 660.0,341.0 655.0,361.0 650.0,386.0 645.0,411.0 643.8,420.0 640.0,453.5 618.8,467.2 612.5,481.0 605.0,516.0 600.0,536.0 596.0,576.0 591.0,638.5" fill="none" stroke="#1b2878" stroke-width="1.6" stroke-opacity="0.95" stroke-linejoin="round" stroke-linecap="round" />
<polyline points="887.5,558.5 915.0,536.0 932.5,508.5 942.5,504.8 965.0,508.5 980.0,488.5 1002.5,466.0 1030.0,453.5 1050.0,443.5 1062.5,428.5 1075.0,416.0 1092.0,392.0" fill="none" stroke="#1b2878" stroke-width="1.6" stroke-opacity="0.95" stroke-linejoin="round" stroke-linecap="round" />
<polyline points="655.0,516.0 712.5,526.0 750.0,529.8 752.5,532.0 782.5,539.8 800.0,546.0 822.5,544.8 845.0,552.0 867.5,548.5 887.5,558.5 910.0,569.8" fill="none" stroke="#1b2878" stroke-width="1.6" stroke-opacity="0.95" stroke-linejoin="round" stroke-linecap="round" />
<polyline points="1068.0,240.0 1071.6,251.0 1092.0,289.0" fill="none" stroke="#1b2878" stroke-width="1.6" stroke-opacity="0.95" stroke-linejoin="round" stroke-linecap="round" />
<polyline points="875.0,241.0 873.0,275.0 866.0,300.0 858.0,312.0" fill="none" stroke="#1b2878" stroke-width="1.6" stroke-opacity="0.95" stroke-linejoin="round" stroke-linecap="round" />
<polyline points="845.0,241.0 872.0,262.0" fill="none" stroke="#1b2878" stroke-width="1.6" stroke-opacity="0.95" stroke-linejoin="round" stroke-linecap="round" />
<polyline points="572.5,251.0 571.2,286.0 567.5,316.0 562.5,336.0 562.0,376.0 561.2,411.0 560.0,421.0 567.5,436.0 582.5,448.5 600.0,461.0 617.5,472.0" fill="none" stroke="#1b2878" stroke-width="1.0" stroke-opacity="0.9" stroke-linejoin="round" stroke-linecap="round" />
<polyline points="505.0,488.5 545.0,488.5 565.0,501.0 582.5,516.0 585.0,533.5 600.0,536.0" fill="none" stroke="#1b2878" stroke-width="1.0" stroke-opacity="0.9" stroke-linejoin="round" stroke-linecap="round" />
<polyline points="537.5,561.5 576.0,552.0 600.0,548.0 628.0,557.0 675.0,560.0 695.0,556.0" fill="none" stroke="#1b2878" stroke-width="1.0" stroke-opacity="0.9" stroke-linejoin="round" stroke-linecap="round" />
<polyline points="667.5,496.0 685.0,478.5 702.5,472.0 717.5,453.5 725.0,431.0 736.0,420.0 740.0,408.5 760.0,376.0 795.0,358.5 820.0,336.0 858.0,312.0" fill="none" stroke="#1b2878" stroke-width="1.0" stroke-opacity="0.9" stroke-linejoin="round" stroke-linecap="round" />
<polyline points="1071.6,251.0 1058.5,272.0 1045.0,288.0 1030.0,307.0 1011.4,307.0 985.0,315.0 967.5,321.0 960.0,346.0 950.0,368.5 930.0,408.5 925.0,416.0" fill="none" stroke="#1b2878" stroke-width="1.0" stroke-opacity="0.9" stroke-linejoin="round" stroke-linecap="round" />
<polyline points="702.5,472.0 702.5,498.5 712.5,521.0 715.0,533.5 697.5,556.0" fill="none" stroke="#1b2878" stroke-width="1.0" stroke-opacity="0.9" stroke-linejoin="round" stroke-linecap="round" />
<polyline points="925.0,416.0 912.5,448.5 900.0,473.5 880.0,493.5 855.0,511.0 842.5,518.5 825.0,546.0" fill="none" stroke="#1b2878" stroke-width="1.0" stroke-opacity="0.9" stroke-linejoin="round" stroke-linecap="round" />
<polyline points="1040.0,456.0 1045.0,478.5 1042.5,501.0 1055.0,526.0 1070.0,556.0 1077.5,571.0 1090.0,573.5" fill="none" stroke="#1b2878" stroke-width="1.0" stroke-opacity="0.9" stroke-linejoin="round" stroke-linecap="round" />
<polyline points="1015.0,488.5 1040.0,498.5" fill="none" stroke="#1b2878" stroke-width="1.0" stroke-opacity="0.9" stroke-linejoin="round" stroke-linecap="round" />
<polyline points="858.0,312.0 882.0,332.0 870.0,345.0 880.0,360.0" fill="none" stroke="#1b2878" stroke-width="1.0" stroke-opacity="0.9" stroke-linejoin="round" stroke-linecap="round" />
<polyline points="927.5,356.0 950.0,367.0" fill="none" stroke="#1b2878" stroke-width="1.0" stroke-opacity="0.9" stroke-linejoin="round" stroke-linecap="round" />
<polyline points="950.0,368.0 980.0,378.0 975.0,400.0 968.0,415.0 980.0,428.0" fill="none" stroke="#1b2878" stroke-width="1.0" stroke-opacity="0.9" stroke-linejoin="round" stroke-linecap="round" />
<polyline points="610.0,264.8 571.2,287.2" fill="none" stroke="#1b2878" stroke-width="0.7" stroke-opacity="0.85" stroke-linejoin="round" stroke-linecap="round" />
<polyline points="505.0,419.8 560.0,421.5" fill="none" stroke="#1b2878" stroke-width="0.7" stroke-opacity="0.85" stroke-linejoin="round" stroke-linecap="round" />
<polyline points="820.0,336.0 780.0,372.0" fill="none" stroke="#1b2878" stroke-width="0.7" stroke-opacity="0.85" stroke-linejoin="round" stroke-linecap="round" />
<polyline points="1053.0,561.0 1072.0,561.0" fill="none" stroke="#1b2878" stroke-width="0.7" stroke-opacity="0.85" stroke-linejoin="round" stroke-linecap="round" />
<polyline points="573.8,442.5 588.8,456.0 607.5,462.5 618.8,467.0" fill="none" stroke="#1b2878" stroke-width="1.0" stroke-opacity="0.9" stroke-linejoin="round" stroke-linecap="round" />
<polyline points="612.5,487.5 626.0,486.0 640.0,483.8 650.0,487.5 667.5,497.5" fill="none" stroke="#1b2878" stroke-width="1.0" stroke-opacity="0.9" stroke-linejoin="round" stroke-linecap="round" />
<polyline points="607.5,505.0 630.0,515.0 657.5,516.0 695.0,525.0 716.0,527.5" fill="none" stroke="#1b2878" stroke-width="1.0" stroke-opacity="0.9" stroke-linejoin="round" stroke-linecap="round" />
<polyline points="631.0,517.5 613.8,536.0" fill="none" stroke="#1b2878" stroke-width="1.0" stroke-opacity="0.9" stroke-linejoin="round" stroke-linecap="round" />
<polyline points="640.0,483.8 645.0,496.0 655.0,510.0 657.5,516.0" fill="none" stroke="#1b2878" stroke-width="1.0" stroke-opacity="0.9" stroke-linejoin="round" stroke-linecap="round" />
<polyline points="650.0,487.5 665.0,505.0 657.5,510.0" fill="none" stroke="#1b2878" stroke-width="1.0" stroke-opacity="0.9" stroke-linejoin="round" stroke-linecap="round" />
<polyline points="697.5,525.0 696.0,537.5 697.5,550.0" fill="none" stroke="#1b2878" stroke-width="1.0" stroke-opacity="0.9" stroke-linejoin="round" stroke-linecap="round" />
<polyline points="612.5,481.0 600.0,474.0 592.0,470.0" fill="none" stroke="#1b2878" stroke-width="1.0" stroke-opacity="0.9" stroke-linejoin="round" stroke-linecap="round" />
<polyline points="618.0,467.0 608.0,458.0 600.0,457.0" fill="none" stroke="#1b2878" stroke-width="1.0" stroke-opacity="0.9" stroke-linejoin="round" stroke-linecap="round" />
<polyline points="607.5,505.0 596.0,500.0 590.0,492.0" fill="none" stroke="#1b2878" stroke-width="1.0" stroke-opacity="0.9" stroke-linejoin="round" stroke-linecap="round" />
<polyline points="660.0,497.0 690.0,512.0 705.0,522.0" fill="none" stroke="#1b2878" stroke-width="1.0" stroke-opacity="0.9" stroke-linejoin="round" stroke-linecap="round" />
<polyline points="626.0,486.0 628.0,500.0 630.0,515.0" fill="none" stroke="#1b2878" stroke-width="1.0" stroke-opacity="0.9" stroke-linejoin="round" stroke-linecap="round" />
<polyline points="612.0,520.0 600.0,524.0" fill="none" stroke="#1b2878" stroke-width="1.0" stroke-opacity="0.9" stroke-linejoin="round" stroke-linecap="round" />
</g>
<g filter="url(#bl3)">
<path d="M564.9 257.0h0M564.8 256.6h0M570.3 257.9h0M563.7 254.9h0" stroke="#1fb4e6" stroke-width="3.25" stroke-linecap="round" stroke-opacity="0.85" fill="none"/>
<path d="M621.5 264.4h0M596.4 249.3h0M609.6 261.4h0M609.5 257.3h0M603.4 256.8h0M622.6 268.2h0M603.1 253.0h0M592.6 245.5h0M605.0 254.5h0M606.1 255.5h0M598.9 253.2h0M621.0 266.1h0M618.8 267.1h0M619.0 267.7h0" stroke="#1fb4e6" stroke-width="3.75" stroke-linecap="round" stroke-opacity="0.85" fill="none"/>
<path d="M614.6 245.3h0M618.5 249.9h0M613.5 241.2h0M616.3 245.6h0M620.3 255.9h0M614.0 245.9h0" stroke="#1fb4e6" stroke-width="3.25" stroke-linecap="round" stroke-opacity="0.85" fill="none"/>
<path d="M632.4 276.6h0M630.9 275.2h0M646.8 289.7h0M633.9 275.9h0M631.4 274.8h0" stroke="#1fb4e6" stroke-width="3.25" stroke-linecap="round" stroke-opacity="0.85" fill="none"/>
<path d="M698.7 272.4h0M702.5 280.7h0M690.2 258.9h0M699.8 269.6h0M694.4 267.5h0M694.5 268.4h0M695.4 264.0h0M693.4 258.0h0M695.5 268.3h0M699.0 275.5h0" stroke="#1fb4e6" stroke-width="3.75" stroke-linecap="round" stroke-opacity="0.85" fill="none"/>
<path d="M667.6 323.1h0M663.3 316.0h0M665.9 318.3h0M666.4 323.4h0" stroke="#1fb4e6" stroke-width="3.25" stroke-linecap="round" stroke-opacity="0.85" fill="none"/>
<path d="M570.7 294.1h0M568.5 289.9h0M568.1 287.8h0M572.2 291.9h0M576.6 292.0h0M571.8 294.9h0" stroke="#1fb4e6" stroke-width="3.25" stroke-linecap="round" stroke-opacity="0.85" fill="none"/>
<path d="M561.4 334.2h0M560.6 336.3h0" stroke="#1fb4e6" stroke-width="3.25" stroke-linecap="round" stroke-opacity="0.85" fill="none"/>
<path d="M560.9 374.5h0M562.6 380.4h0M563.0 380.9h0M560.9 377.0h0" stroke="#1fb4e6" stroke-width="3.25" stroke-linecap="round" stroke-opacity="0.85" fill="none"/>
<path d="M647.7 389.2h0M646.7 387.1h0M647.6 389.6h0" stroke="#1fb4e6" stroke-width="3.25" stroke-linecap="round" stroke-opacity="0.85" fill="none"/>
<path d="M652.9 372.0h0" stroke="#1fb4e6" stroke-width="3.25" stroke-linecap="round" stroke-opacity="0.85" fill="none"/>
<path d="M568.4 436.2h0M554.3 426.8h0M562.6 431.5h0M572.1 439.2h0M556.5 425.8h0M579.7 447.3h0M555.4 425.0h0M567.1 431.3h0M556.1 425.5h0M557.4 428.4h0M555.3 424.9h0M562.9 429.8h0" stroke="#1fb4e6" stroke-width="3.25" stroke-linecap="round" stroke-opacity="0.85" fill="none"/>
<path d="M596.5 456.1h0M617.1 469.3h0M589.2 453.4h0M590.4 449.8h0M596.4 458.0h0M606.4 463.1h0M593.1 453.8h0M619.2 471.2h0M624.7 472.2h0M618.9 472.5h0M607.1 462.4h0M601.1 457.3h0M619.6 473.0h0M613.0 468.1h0M591.5 451.3h0M590.3 452.9h0M594.9 455.5h0M598.6 458.6h0M592.8 452.5h0M597.1 458.8h0M622.5 475.1h0M619.6 471.0h0M619.3 470.6h0M590.9 454.5h0M622.3 470.1h0M618.4 472.3h0" stroke="#1fb4e6" stroke-width="3.75" stroke-linecap="round" stroke-opacity="0.85" fill="none"/>
<path d="M798.9 354.1h0M805.5 364.2h0M805.0 361.5h0M803.4 362.7h0" stroke="#1fb4e6" stroke-width="3.25" stroke-linecap="round" stroke-opacity="0.85" fill="none"/>
<path d="M855.9 312.8h0M834.3 318.2h0M857.0 314.6h0M858.4 310.0h0M848.8 313.1h0M835.9 322.5h0M851.5 316.0h0M841.8 316.6h0M837.7 318.3h0M838.7 321.3h0M847.4 317.4h0M859.8 313.7h0" stroke="#1fb4e6" stroke-width="3.75" stroke-linecap="round" stroke-opacity="0.85" fill="none"/>
<path d="M856.1 249.5h0M858.4 252.3h0M853.7 245.5h0M853.5 246.9h0M867.1 258.6h0M873.4 263.1h0M870.9 256.0h0M859.8 250.7h0M851.0 246.1h0M868.7 257.6h0M867.2 254.2h0M848.7 245.5h0M869.6 256.7h0M848.8 245.7h0" stroke="#1fb4e6" stroke-width="4.0" stroke-linecap="round" stroke-opacity="0.85" fill="none"/>
<path d="M871.5 270.7h0M870.2 266.7h0M870.1 269.8h0M870.7 266.6h0M870.0 270.1h0M872.4 276.7h0" stroke="#1fb4e6" stroke-width="4.0" stroke-linecap="round" stroke-opacity="0.85" fill="none"/>
<path d="M864.0 346.9h0M863.1 348.7h0M870.1 355.0h0M866.1 349.0h0M877.8 365.5h0M880.4 368.3h0M877.7 361.9h0M878.6 365.3h0M862.0 345.3h0M881.1 373.1h0M872.7 358.8h0M880.3 365.4h0M860.8 349.7h0M863.2 348.3h0" stroke="#1fb4e6" stroke-width="3.25" stroke-linecap="round" stroke-opacity="0.85" fill="none"/>
<path d="M842.6 336.6h0M836.6 342.8h0M830.3 342.8h0M830.7 343.4h0M827.3 346.7h0M836.7 336.0h0" stroke="#1fb4e6" stroke-width="3.25" stroke-linecap="round" stroke-opacity="0.85" fill="none"/>
<path d="M807.5 347.0h0M805.8 346.5h0M808.3 346.2h0M796.8 355.3h0" stroke="#1fb4e6" stroke-width="3.25" stroke-linecap="round" stroke-opacity="0.85" fill="none"/>
<path d="M976.1 304.4h0M978.9 312.3h0M986.6 317.8h0M973.3 304.4h0M980.0 314.6h0M974.6 302.4h0M991.4 324.2h0M980.3 312.5h0M978.7 313.7h0M976.6 310.0h0M976.8 302.5h0M981.0 312.1h0" stroke="#1fb4e6" stroke-width="3.75" stroke-linecap="round" stroke-opacity="0.85" fill="none"/>
<path d="M956.8 352.7h0M957.0 353.8h0M956.5 349.2h0M957.1 339.1h0M958.1 347.6h0M958.4 352.1h0" stroke="#1fb4e6" stroke-width="4.0" stroke-linecap="round" stroke-opacity="0.85" fill="none"/>
<path d="M982.7 428.1h0M969.5 409.4h0M973.9 417.4h0M973.1 416.7h0M966.7 409.3h0" stroke="#1fb4e6" stroke-width="3.25" stroke-linecap="round" stroke-opacity="0.85" fill="none"/>
<path d="M988.4 255.1h0M987.5 263.3h0M978.4 245.6h0M987.4 259.7h0M984.5 257.5h0M976.9 252.4h0M985.6 256.5h0M986.0 263.4h0M984.9 258.3h0M979.9 250.5h0" stroke="#1fb4e6" stroke-width="3.75" stroke-linecap="round" stroke-opacity="0.85" fill="none"/>
<path d="M1057.5 258.0h0M1051.2 253.9h0M1046.0 248.1h0M1049.9 254.6h0M1046.2 254.8h0M1060.9 257.4h0M1065.7 258.5h0M1052.5 260.4h0M1058.2 258.5h0M1051.4 251.6h0M1051.8 256.2h0M1054.3 259.9h0M1038.1 253.7h0M1047.0 253.2h0" stroke="#1fb4e6" stroke-width="3.75" stroke-linecap="round" stroke-opacity="0.85" fill="none"/>
<path d="M1040.0 296.3h0M1037.2 297.1h0M1039.6 298.4h0M1038.1 296.8h0" stroke="#1fb4e6" stroke-width="3.25" stroke-linecap="round" stroke-opacity="0.85" fill="none"/>
<path d="M1088.0 309.6h0M1081.8 303.7h0M1084.2 305.3h0M1085.1 302.2h0M1084.2 301.1h0" stroke="#1fb4e6" stroke-width="4.0" stroke-linecap="round" stroke-opacity="0.85" fill="none"/>
<path d="M1082.3 402.6h0M1082.8 403.4h0M1084.8 407.9h0M1087.4 415.6h0" stroke="#1fb4e6" stroke-width="3.25" stroke-linecap="round" stroke-opacity="0.85" fill="none"/>
<path d="M1039.8 441.1h0M1028.6 443.3h0M1037.4 439.3h0M1034.2 440.2h0M1060.9 430.7h0M1036.1 441.3h0M1022.6 446.0h0M1052.6 432.3h0M1045.5 436.6h0M1024.8 447.3h0M1040.8 441.2h0M1043.5 437.6h0" stroke="#1fb4e6" stroke-width="3.25" stroke-linecap="round" stroke-opacity="0.85" fill="none"/>
<path d="M1041.5 466.6h0M1042.1 470.4h0M1041.7 466.9h0M1043.7 468.5h0M1038.2 459.7h0M1045.1 477.7h0" stroke="#1fb4e6" stroke-width="3.25" stroke-linecap="round" stroke-opacity="0.85" fill="none"/>
<path d="M1013.1 487.7h0M1036.8 507.6h0M1024.7 493.3h0M1041.9 509.5h0M1033.4 504.6h0M1047.4 517.0h0M1047.3 516.3h0M1025.8 501.3h0M1020.7 495.2h0M1036.9 507.5h0" stroke="#1fb4e6" stroke-width="3.25" stroke-linecap="round" stroke-opacity="0.85" fill="none"/>
<path d="M1064.0 541.5h0M1083.8 571.9h0M1066.3 545.5h0M1078.2 560.1h0M1069.2 554.1h0M1063.8 545.7h0M1084.6 571.4h0M1065.9 544.6h0M1083.2 571.2h0M1061.7 537.9h0" stroke="#1fb4e6" stroke-width="3.25" stroke-linecap="round" stroke-opacity="0.85" fill="none"/>
<path d="M1036.2 561.5h0M1033.4 560.7h0M1037.8 562.2h0" stroke="#1fb4e6" stroke-width="3.25" stroke-linecap="round" stroke-opacity="0.85" fill="none"/>
<path d="M906.4 447.6h0M916.8 451.3h0M913.2 451.9h0M897.0 430.7h0M901.6 441.1h0M905.9 444.9h0M900.6 441.3h0M915.3 451.3h0M905.7 444.8h0M899.5 437.8h0M905.4 444.4h0M903.1 438.5h0M913.1 447.0h0M895.2 438.8h0M909.9 453.0h0M905.5 435.8h0M914.6 448.2h0M900.5 440.4h0M897.6 433.1h0M897.0 439.1h0M900.4 445.8h0M901.5 443.1h0" stroke="#1fb4e6" stroke-width="3.5" stroke-linecap="round" stroke-opacity="0.85" fill="none"/>
<path d="M902.4 470.2h0M902.5 479.4h0M902.6 470.7h0M903.0 477.4h0M903.0 474.4h0M902.0 461.2h0M901.7 470.2h0M899.4 470.3h0" stroke="#1fb4e6" stroke-width="3.25" stroke-linecap="round" stroke-opacity="0.85" fill="none"/>
<path d="M866.8 503.9h0M883.7 493.0h0M855.5 507.0h0M876.6 495.1h0M871.6 499.5h0M883.8 491.6h0M881.2 490.5h0M871.0 499.1h0" stroke="#1fb4e6" stroke-width="3.25" stroke-linecap="round" stroke-opacity="0.85" fill="none"/>
<path d="M942.4 506.0h0M947.8 505.9h0M942.2 505.7h0M932.7 505.4h0M935.3 506.0h0M940.3 506.9h0" stroke="#1fb4e6" stroke-width="3.25" stroke-linecap="round" stroke-opacity="0.85" fill="none"/>
<path d="M981.2 484.3h0M976.3 489.0h0M980.1 483.5h0" stroke="#1fb4e6" stroke-width="3.25" stroke-linecap="round" stroke-opacity="0.85" fill="none"/>
<path d="M845.8 551.2h0M852.1 552.4h0M847.1 550.9h0M863.6 552.1h0M840.2 552.5h0M853.7 553.2h0" stroke="#1fb4e6" stroke-width="3.25" stroke-linecap="round" stroke-opacity="0.85" fill="none"/>
<path d="M895.3 560.5h0M890.3 560.6h0M883.2 559.3h0M891.3 563.8h0M884.5 558.3h0M895.7 561.2h0M896.6 566.3h0M884.4 559.4h0" stroke="#1fb4e6" stroke-width="3.25" stroke-linecap="round" stroke-opacity="0.85" fill="none"/>
<path d="M816.3 591.0h0M825.1 596.2h0M819.3 594.2h0M821.2 594.1h0" stroke="#1fb4e6" stroke-width="3.25" stroke-linecap="round" stroke-opacity="0.85" fill="none"/>
<path d="M579.0 449.7h0M606.3 460.9h0M609.3 459.8h0M588.5 460.6h0M614.9 464.5h0M605.2 459.9h0M579.8 450.1h0M614.7 469.9h0M600.3 461.4h0M581.2 445.1h0M573.1 444.9h0M595.1 461.8h0M612.5 464.9h0M604.3 457.3h0M600.7 459.7h0M607.2 461.7h0M585.7 452.8h0M589.9 453.4h0M595.6 460.2h0M614.7 462.9h0M614.6 465.8h0M607.6 462.4h0M595.6 460.7h0M609.4 466.3h0M601.4 457.9h0M596.8 458.0h0M601.5 462.0h0M596.3 455.2h0M575.7 446.7h0M602.8 460.8h0M614.9 467.5h0M601.4 459.8h0M598.1 456.0h0M612.0 459.5h0M579.4 446.2h0M580.3 444.4h0M579.9 444.0h0M596.1 457.4h0M589.6 457.8h0M580.6 448.9h0M593.5 457.2h0M617.0 464.7h0M602.2 465.5h0M587.1 454.2h0M589.0 457.1h0M595.0 455.0h0M575.2 446.4h0M603.4 462.7h0M588.8 454.4h0M603.0 465.6h0M575.6 442.1h0M606.3 466.3h0M575.8 444.2h0M592.1 457.1h0M589.4 454.3h0M611.5 462.1h0M601.6 457.2h0M599.2 456.3h0M588.3 453.6h0M581.5 449.9h0M607.5 458.2h0M575.1 440.3h0M576.6 444.6h0M597.3 460.6h0M614.2 468.4h0M595.8 463.0h0M605.0 465.1h0M580.5 448.9h0M581.6 448.8h0M612.9 467.3h0M606.9 459.0h0M574.4 443.4h0M579.6 443.3h0M593.3 455.2h0M578.8 447.0h0M594.9 459.6h0M619.1 467.8h0M575.9 441.7h0M614.2 464.5h0M609.9 463.1h0M588.7 454.8h0M613.1 462.4h0M589.2 455.4h0M617.3 462.4h0M583.6 451.6h0M602.1 462.8h0M577.6 440.4h0M609.0 458.4h0M600.2 454.7h0M593.6 456.9h0M578.7 447.4h0M580.5 453.3h0M614.4 462.2h0M586.9 449.2h0M599.0 459.5h0M581.3 447.4h0M607.9 461.9h0M577.3 439.6h0M598.2 460.2h0M591.0 453.0h0M598.9 461.1h0M584.1 451.2h0M616.7 464.1h0M608.7 460.6h0M591.1 455.6h0M573.4 446.1h0M613.2 461.5h0M614.9 467.5h0M598.8 461.1h0M615.0 465.0h0M614.0 463.3h0M617.0 462.9h0M620.5 466.6h0M608.2 459.0h0" stroke="#25c4ee" stroke-width="2.9" stroke-linecap="square" stroke-opacity="0.85" fill="none"/>
<path d="M643.4 489.7h0M663.4 496.6h0M622.8 484.4h0M649.6 492.3h0M614.1 483.8h0M654.7 490.6h0M632.6 484.4h0M624.1 484.6h0M621.5 488.2h0M653.5 486.9h0M633.9 483.9h0M646.7 487.6h0M642.1 481.2h0M648.5 489.4h0M617.7 484.0h0M613.5 488.6h0M652.6 490.8h0M640.1 486.8h0M633.6 486.8h0M647.4 485.0h0M613.1 490.9h0M663.9 490.8h0M654.7 491.4h0M654.1 488.9h0M658.9 494.6h0M641.5 481.1h0M668.4 495.0h0M616.8 488.6h0M629.3 483.1h0M655.3 495.9h0M624.7 482.7h0M669.7 495.5h0M619.3 490.0h0M614.3 490.3h0M639.7 486.3h0M624.6 487.2h0M644.6 484.0h0M662.6 497.1h0M661.3 490.9h0M621.9 483.3h0M618.3 485.7h0M639.8 485.4h0M650.5 489.7h0M641.2 485.7h0M632.4 487.1h0M626.0 485.6h0M626.1 481.8h0M669.1 496.8h0M648.7 489.5h0M667.2 495.8h0M670.0 493.5h0M636.0 482.5h0M645.0 488.7h0M656.8 494.9h0M629.1 487.2h0M668.7 495.5h0M650.9 491.4h0M634.8 482.2h0M627.5 482.9h0M623.6 483.3h0M654.5 491.0h0M662.0 490.9h0M623.7 488.0h0M663.4 492.9h0M650.0 484.9h0M667.2 496.1h0M637.4 480.8h0M615.8 488.9h0M668.0 501.3h0M633.0 480.9h0M629.5 489.4h0M627.7 487.2h0M635.5 481.8h0M663.4 495.3h0M662.9 491.9h0M633.4 485.1h0M621.4 483.5h0M641.4 487.1h0M657.2 488.0h0M654.0 491.2h0M617.6 484.3h0M647.8 487.3h0M650.3 490.6h0M665.3 499.5h0M656.3 494.5h0M619.1 485.9h0M656.5 496.8h0M611.5 483.2h0M623.7 489.4h0M660.8 496.6h0M658.9 489.7h0M667.8 498.1h0M628.2 487.6h0M642.2 488.0h0M639.8 480.6h0M644.8 481.0h0M650.3 489.7h0M645.3 490.4h0M623.7 485.4h0M613.0 489.2h0M618.5 490.0h0M641.4 486.6h0M618.7 488.7h0M663.5 495.3h0M645.6 486.4h0M658.7 487.0h0M655.0 486.1h0M629.1 486.0h0M643.2 486.1h0M665.2 494.4h0M650.5 486.8h0M647.3 482.5h0M621.1 485.0h0M618.0 486.0h0M654.3 493.9h0M614.9 488.4h0M611.5 484.7h0M629.0 483.3h0M656.5 487.3h0M659.1 495.7h0M644.7 489.0h0M650.6 489.2h0M627.9 488.9h0M663.5 500.1h0M649.0 486.0h0M640.9 487.1h0M626.7 489.2h0M621.5 485.5h0" stroke="#25c4ee" stroke-width="2.9" stroke-linecap="square" stroke-opacity="0.85" fill="none"/>
<path d="M623.6 509.1h0M685.2 521.5h0M674.5 516.3h0M665.4 517.8h0M704.5 524.9h0M627.8 517.5h0M682.7 521.4h0M659.1 517.2h0M623.3 512.6h0M677.7 518.1h0M644.1 515.5h0M687.6 522.5h0M703.1 523.9h0M671.9 518.7h0M667.0 519.7h0M706.3 527.1h0M661.5 515.7h0M677.8 521.6h0M651.0 516.5h0M707.5 526.6h0M713.3 526.3h0M712.6 524.1h0M617.8 511.4h0M646.4 517.1h0M707.1 526.3h0M676.6 520.4h0M621.9 509.3h0M614.9 505.9h0M616.9 509.7h0M642.7 514.7h0M630.1 513.5h0M685.3 523.0h0M697.2 524.6h0M699.7 523.2h0M614.4 511.5h0M651.6 519.4h0M706.8 522.5h0M634.0 516.4h0M686.5 523.8h0M712.6 526.8h0M696.1 527.6h0M688.9 519.3h0M630.4 510.7h0M656.6 515.8h0M706.2 524.6h0M624.5 510.7h0M630.3 511.2h0M668.4 519.5h0M707.5 530.1h0M616.4 510.1h0M707.7 527.0h0M668.1 518.1h0M639.1 518.2h0M686.7 522.6h0M617.2 505.4h0M689.7 521.1h0M619.6 509.3h0M711.4 530.3h0M620.0 510.9h0M649.2 513.5h0M657.0 513.3h0M680.6 521.8h0M678.9 518.4h0M685.5 517.9h0M659.9 518.6h0M715.1 531.1h0M613.0 510.3h0M648.6 515.3h0M650.3 519.4h0M629.8 517.5h0M690.2 524.7h0M709.3 527.4h0M633.8 518.1h0M703.4 523.7h0M690.6 520.8h0M607.3 503.8h0M683.3 524.1h0M685.6 525.6h0M657.9 517.6h0M633.5 512.5h0M652.6 511.8h0M664.6 516.1h0M614.3 506.6h0M616.7 510.9h0M617.9 505.3h0M656.9 519.0h0M706.0 524.4h0M644.3 515.5h0M677.7 517.9h0M652.0 514.3h0M696.4 521.6h0M659.7 517.7h0M686.9 523.9h0M650.4 518.4h0M705.1 524.7h0M674.5 518.9h0M639.0 518.5h0M631.3 512.4h0M645.3 512.3h0M675.7 523.1h0M634.4 518.9h0M623.8 516.5h0M649.1 513.0h0M695.6 528.3h0M664.9 522.3h0M706.9 527.0h0M692.4 521.1h0M634.5 514.4h0M717.0 527.5h0M624.7 513.1h0M672.1 518.8h0M704.8 523.4h0M693.5 528.4h0M705.4 524.1h0M682.8 521.2h0M687.2 520.5h0M669.8 521.9h0M620.3 508.4h0M711.9 523.9h0M642.5 512.9h0M689.2 525.9h0M631.3 516.3h0M626.9 517.1h0M648.3 516.6h0M684.9 522.4h0M702.9 529.0h0M708.6 528.0h0M645.7 519.1h0M650.4 516.2h0M691.7 520.5h0M695.6 528.1h0M710.1 529.8h0M673.8 523.2h0M644.3 517.6h0M712.3 526.4h0M652.6 518.7h0M632.8 512.0h0M707.6 528.9h0M614.5 510.2h0M688.3 523.8h0M698.5 521.8h0M673.8 520.1h0M690.6 524.3h0M611.3 506.1h0M629.5 510.9h0M612.7 503.2h0M675.5 517.2h0M687.8 524.3h0M685.6 519.7h0M653.6 518.8h0M676.9 523.2h0M696.7 522.9h0M611.1 503.0h0M669.9 520.2h0M710.4 524.1h0M651.0 514.9h0M688.5 524.2h0M704.8 523.7h0M684.3 518.4h0M714.3 528.8h0M630.4 512.0h0M708.8 523.7h0M686.4 521.4h0M711.0 526.3h0M687.7 525.4h0M648.3 513.4h0M652.5 517.6h0M650.5 515.2h0M683.9 521.9h0M655.3 518.3h0M631.7 518.3h0M687.0 523.9h0M628.6 516.1h0M654.0 515.3h0M669.7 522.0h0M616.3 508.1h0M631.4 513.3h0M628.0 510.6h0M617.4 512.6h0M635.4 516.0h0M641.5 516.0h0M714.8 526.4h0M684.4 525.3h0M655.0 516.0h0M672.4 516.9h0M619.3 514.6h0M662.2 516.7h0M690.0 523.2h0M643.5 515.3h0M675.9 518.3h0M678.7 522.1h0M701.1 523.0h0M674.5 519.2h0M622.8 514.2h0M700.2 529.0h0M695.2 527.2h0M687.4 525.1h0M676.3 523.3h0M683.8 522.2h0M607.4 502.3h0M606.1 506.8h0M629.2 510.4h0M695.2 528.2h0M664.7 516.6h0M639.8 511.4h0M617.7 511.3h0M687.4 524.3h0M695.6 527.7h0M617.8 511.2h0M647.8 516.8h0M609.9 502.8h0M709.5 524.5h0M663.1 514.1h0M689.1 526.4h0M691.9 527.2h0M639.0 515.9h0M676.0 522.1h0M678.4 521.2h0M620.2 508.4h0M672.6 517.2h0M650.6 512.9h0M665.3 517.6h0M640.9 515.8h0M658.1 513.2h0M656.0 517.6h0M680.4 521.4h0M641.4 515.9h0M696.9 525.5h0M683.2 519.1h0M653.1 512.3h0M701.2 526.9h0M703.7 525.3h0M693.4 527.3h0M704.4 529.6h0M710.8 526.1h0M685.9 518.7h0M651.0 512.7h0M666.5 515.6h0M670.4 518.9h0M607.1 506.5h0M610.9 506.6h0M712.1 529.9h0M688.7 526.0h0M683.1 517.8h0M622.2 512.3h0M641.5 517.7h0" stroke="#25c4ee" stroke-width="2.9" stroke-linecap="square" stroke-opacity="0.85" fill="none"/>
<path d="M613.8 537.4h0M616.0 527.7h0M617.6 527.7h0M618.6 530.9h0M627.4 521.6h0M628.4 514.8h0M629.0 517.3h0M625.8 526.9h0M626.1 525.8h0M614.7 531.8h0M624.6 529.2h0M620.8 524.5h0M631.2 524.6h0M615.8 535.7h0M625.7 520.1h0M621.8 522.1h0M611.9 537.0h0M615.7 530.3h0M617.7 536.4h0M619.4 530.1h0M622.3 526.8h0M616.4 534.6h0M629.4 515.1h0M622.8 529.8h0M622.2 525.8h0M625.0 525.8h0M624.3 523.2h0M622.8 526.4h0M622.0 530.5h0M612.6 539.0h0M626.8 523.4h0M631.4 521.1h0M616.2 533.7h0M626.3 520.2h0M633.6 519.0h0M627.6 518.8h0M614.3 535.4h0M616.7 529.3h0M621.2 527.9h0M627.7 522.9h0M630.8 523.2h0M619.6 533.1h0M611.0 534.7h0M629.3 515.8h0M624.5 528.9h0M622.6 526.3h0M617.9 528.9h0M633.6 518.7h0M618.4 535.4h0M615.1 530.4h0M625.7 527.9h0M618.6 531.3h0M629.0 522.3h0M623.9 530.9h0M611.6 533.3h0" stroke="#25c4ee" stroke-width="2.9" stroke-linecap="square" stroke-opacity="0.85" fill="none"/>
<path d="M659.9 516.5h0M641.8 493.2h0M650.8 506.8h0M653.0 513.7h0M645.8 497.9h0M648.9 501.3h0M651.7 503.2h0M647.6 497.3h0M643.1 486.7h0M652.6 505.8h0M642.8 495.8h0M648.8 493.3h0M651.6 511.9h0M655.0 510.5h0M660.2 510.5h0M644.8 500.0h0M639.3 489.7h0M638.4 482.7h0M652.7 506.3h0M652.4 504.9h0M649.3 503.4h0M647.1 495.9h0M658.6 513.9h0M648.6 502.7h0M646.0 506.0h0M642.7 490.2h0M641.9 487.7h0M655.7 508.1h0M653.1 503.3h0M651.4 512.2h0M640.3 489.6h0M639.2 487.5h0M641.2 494.0h0M638.8 483.0h0M646.0 500.7h0M640.9 491.8h0M644.1 486.7h0M646.2 500.7h0M647.1 497.8h0M647.7 497.6h0M647.0 490.2h0M647.2 499.2h0M643.3 499.5h0M642.7 496.9h0M652.1 509.4h0M644.7 487.9h0M653.4 501.9h0M643.7 500.8h0M646.8 502.4h0M651.5 506.7h0M643.0 494.3h0M650.3 499.5h0M657.9 512.6h0M646.8 503.0h0M645.4 487.1h0M653.8 510.1h0M646.0 494.8h0M653.9 504.8h0M639.6 495.4h0M643.5 484.1h0M644.8 490.9h0M644.1 484.4h0M641.7 487.9h0M645.3 501.0h0M648.3 502.9h0M654.5 510.2h0M656.9 518.2h0M641.8 489.2h0M656.2 513.1h0M655.7 508.8h0M645.2 500.1h0M651.2 508.3h0M658.5 514.8h0M649.3 499.7h0M655.2 511.0h0M638.1 484.4h0M640.8 489.2h0M652.0 504.6h0M654.9 514.1h0M655.1 515.0h0M643.4 495.3h0" stroke="#25c4ee" stroke-width="2.9" stroke-linecap="square" stroke-opacity="0.85" fill="none"/>
<path d="M659.5 510.2h0M657.3 511.3h0M654.3 494.4h0M661.3 506.8h0M654.7 495.5h0M657.7 500.0h0M657.4 512.5h0M666.4 504.9h0M659.0 503.7h0M658.5 506.9h0M664.3 509.9h0M661.9 511.5h0M658.4 497.1h0M664.9 508.3h0M661.5 503.8h0M666.5 507.9h0M651.9 488.8h0M652.5 490.8h0M662.3 502.2h0M659.0 505.5h0M650.4 495.1h0M658.5 494.9h0M665.0 503.0h0M652.6 488.2h0M656.3 507.5h0M658.9 505.3h0M666.3 506.3h0M656.4 490.3h0M651.5 496.5h0M651.9 492.1h0M668.6 502.2h0M661.0 505.4h0M661.6 502.1h0M660.9 496.6h0M655.0 493.6h0M658.4 503.5h0M664.4 509.3h0M662.6 502.5h0M655.1 490.8h0M660.4 504.7h0M650.0 491.8h0M665.5 503.2h0M664.8 503.0h0M660.6 507.4h0M661.6 506.8h0M659.8 495.3h0M660.7 506.4h0M654.2 488.4h0M648.3 491.3h0M666.0 500.9h0M661.3 500.4h0M656.0 497.5h0M662.0 510.0h0M658.2 496.7h0M662.5 499.3h0M653.9 491.4h0M652.3 493.8h0M664.9 503.1h0M662.8 496.1h0M656.4 498.9h0M665.4 507.5h0M653.1 492.8h0M660.3 493.3h0M663.8 498.3h0M658.9 497.2h0M659.4 491.4h0M653.8 490.9h0M658.7 497.6h0M654.8 492.6h0M661.0 502.6h0" stroke="#25c4ee" stroke-width="2.9" stroke-linecap="square" stroke-opacity="0.85" fill="none"/>
<path d="M699.8 538.9h0M699.9 545.0h0M699.4 542.7h0M696.3 548.9h0M698.0 543.3h0M696.5 529.1h0M696.6 528.5h0M699.0 531.2h0M692.5 537.7h0M694.7 529.5h0M696.6 536.9h0M695.4 534.6h0M694.7 526.5h0M699.7 530.7h0M695.3 525.3h0M700.6 547.9h0M697.8 548.5h0M697.6 532.5h0M695.2 539.4h0M698.4 543.9h0M698.1 540.1h0M694.1 527.0h0M696.6 544.8h0M698.7 536.5h0M699.0 542.7h0M695.2 532.9h0M693.0 542.8h0M699.5 530.9h0M695.8 527.2h0M696.5 532.6h0M693.0 535.7h0M694.3 534.5h0M692.4 537.4h0M696.7 543.4h0M695.6 548.3h0M699.5 545.4h0M693.1 541.6h0M696.7 540.3h0M692.7 533.9h0M698.2 527.9h0M697.1 543.1h0M699.5 539.0h0M700.2 524.7h0M697.0 546.6h0M693.9 549.0h0M698.9 535.6h0M695.7 549.7h0M694.5 537.1h0M698.3 526.7h0M699.3 538.7h0M698.2 522.4h0M696.6 539.5h0M693.2 540.4h0M694.6 527.1h0M699.7 534.4h0" stroke="#25c4ee" stroke-width="2.9" stroke-linecap="square" stroke-opacity="0.85" fill="none"/>
<path d="M608.1 482.0h0M599.0 472.0h0M613.7 481.5h0M608.2 479.8h0M592.2 469.5h0M609.4 482.2h0M594.6 471.7h0M608.2 480.1h0M607.6 477.2h0M606.8 474.1h0M599.3 472.4h0M608.7 480.3h0M600.7 474.6h0M604.3 478.1h0M602.4 477.3h0M600.0 473.5h0M601.0 473.3h0M599.2 472.2h0M604.6 478.0h0M601.0 473.7h0M598.9 476.2h0M588.9 469.6h0M597.6 473.6h0M606.4 481.0h0M601.9 476.8h0M596.6 474.1h0M597.6 470.4h0M603.8 478.5h0M593.8 469.7h0M607.9 476.6h0M605.5 478.5h0M609.9 474.8h0M613.8 483.3h0M602.4 473.9h0M602.7 473.3h0M595.4 473.1h0M610.6 475.8h0M594.5 473.8h0M613.1 482.5h0M607.2 478.4h0M611.8 482.0h0M608.7 476.5h0M611.6 477.8h0M597.4 469.8h0M600.8 475.3h0M602.9 477.9h0M599.4 476.9h0M603.2 473.2h0M591.9 470.3h0M606.9 479.3h0M589.7 471.3h0" stroke="#25c4ee" stroke-width="2.9" stroke-linecap="square" stroke-opacity="0.85" fill="none"/>
<path d="M618.4 468.2h0M610.1 459.0h0M614.4 463.5h0M600.6 454.9h0M604.9 454.0h0M616.7 461.5h0M609.5 459.2h0M618.9 468.7h0M609.6 462.3h0M603.8 454.6h0M605.1 461.5h0M600.5 460.3h0M599.4 456.6h0M599.0 456.7h0M606.7 460.3h0M615.9 464.8h0M619.9 468.9h0M600.7 457.6h0M617.5 465.7h0M599.4 455.3h0M620.3 467.1h0M617.7 464.5h0M613.8 463.1h0M608.6 459.1h0M609.3 458.8h0M612.8 459.6h0M607.8 464.5h0M611.3 464.2h0M599.4 453.9h0M618.5 464.0h0M617.6 465.5h0M612.8 464.5h0M600.1 461.0h0M610.6 458.4h0M605.6 461.9h0M604.2 459.0h0M611.7 461.0h0M616.0 466.5h0M619.7 467.5h0M611.5 463.5h0M609.0 454.9h0M608.9 455.8h0M611.0 461.6h0M612.8 467.0h0M600.8 460.2h0M609.2 462.8h0M616.4 465.0h0" stroke="#25c4ee" stroke-width="2.9" stroke-linecap="square" stroke-opacity="0.85" fill="none"/>
<path d="M601.4 502.9h0M605.4 507.7h0M596.1 502.2h0M596.4 503.7h0M607.2 506.6h0M596.3 496.6h0M606.1 505.3h0M592.2 500.6h0M593.1 493.5h0M597.7 498.2h0M610.4 503.8h0M599.3 505.4h0M592.7 495.8h0M597.8 502.6h0M590.9 497.8h0M597.0 502.9h0M592.3 495.8h0M595.0 494.8h0M600.2 501.4h0M597.3 497.3h0M593.3 502.1h0M594.9 496.1h0M603.7 502.3h0M593.7 499.0h0M589.1 490.5h0M593.1 499.6h0M596.1 504.5h0M595.8 498.2h0M593.7 489.4h0M602.2 506.3h0M598.9 497.3h0M606.9 504.4h0M601.3 506.0h0M589.1 498.7h0M604.1 504.9h0M595.6 491.5h0M599.4 499.3h0M591.6 497.3h0M596.5 498.1h0M595.4 495.4h0M606.5 501.0h0M587.7 492.2h0M592.2 501.9h0M598.1 500.1h0M589.0 493.5h0M601.5 499.8h0M604.7 507.4h0M596.0 501.7h0M596.2 500.4h0" stroke="#25c4ee" stroke-width="2.9" stroke-linecap="square" stroke-opacity="0.85" fill="none"/>
<path d="M701.3 522.7h0M671.3 500.9h0M681.6 508.8h0M670.9 506.8h0M698.4 520.6h0M683.8 509.9h0M688.7 511.2h0M687.3 512.1h0M695.1 518.9h0M707.2 519.0h0M676.8 506.1h0M698.7 516.5h0M664.7 503.4h0M706.0 516.7h0M669.5 502.9h0M669.2 501.3h0M689.2 511.6h0M665.6 497.5h0M698.0 515.0h0M704.6 519.1h0M706.9 517.8h0M699.9 517.6h0M669.9 501.3h0M687.2 508.2h0M659.5 496.3h0M683.6 506.9h0M665.4 498.1h0M663.3 498.8h0M699.9 513.8h0M662.0 498.3h0M681.3 509.2h0M687.3 509.8h0M704.9 525.1h0M704.4 521.0h0M692.2 512.2h0M675.5 503.5h0M662.5 495.7h0M668.2 496.5h0M694.1 511.0h0M682.8 511.5h0M685.2 507.5h0M665.2 503.6h0M695.3 519.8h0M698.6 519.3h0M670.2 504.5h0M669.3 502.7h0M703.0 521.5h0M677.3 509.5h0M701.5 518.9h0M700.2 518.2h0M692.9 516.2h0M687.7 508.5h0M703.9 517.0h0M674.8 507.3h0M691.8 509.7h0M662.1 501.6h0M687.7 512.1h0M700.6 515.3h0M683.1 509.2h0M669.7 502.2h0M695.1 515.8h0M694.6 517.5h0M677.1 502.5h0M684.8 510.6h0M694.4 519.8h0M677.4 506.3h0M672.9 507.6h0M686.7 510.8h0M660.0 494.9h0M679.4 501.5h0M676.5 501.3h0M686.6 510.8h0M676.5 504.2h0M679.1 505.2h0M683.7 506.3h0M670.9 499.3h0M698.5 519.3h0M659.2 500.7h0M669.3 501.8h0M666.0 494.6h0M701.3 516.4h0M676.5 507.3h0M686.3 508.6h0M663.8 497.3h0M679.8 509.8h0M677.9 500.7h0M688.3 513.3h0M658.8 501.1h0M680.4 504.4h0M690.8 511.5h0M704.2 516.9h0M689.0 515.1h0M697.8 513.2h0M682.3 507.4h0M683.6 510.7h0M660.3 500.9h0M676.6 506.2h0M664.7 502.6h0M699.4 517.7h0M702.5 517.7h0M664.4 498.8h0M662.6 501.7h0M676.0 502.6h0M693.0 518.4h0M660.7 501.9h0M685.3 509.9h0M690.4 514.8h0M668.0 502.2h0M686.1 509.3h0M678.1 511.3h0M701.7 517.8h0M687.3 508.3h0M693.6 511.7h0" stroke="#25c4ee" stroke-width="2.9" stroke-linecap="square" stroke-opacity="0.85" fill="none"/>
<path d="M627.0 513.5h0M627.2 501.3h0M624.3 490.3h0M628.3 492.0h0M625.8 494.9h0M632.1 505.6h0M627.7 511.4h0M627.5 492.2h0M631.6 508.1h0M626.1 486.6h0M630.6 496.4h0M622.3 487.5h0M632.9 515.0h0M628.9 507.4h0M626.3 512.3h0M626.2 509.0h0M630.4 493.0h0M628.6 503.0h0M625.2 498.2h0M626.9 514.3h0M629.1 497.1h0M630.4 517.3h0M626.9 517.4h0M626.2 508.6h0M623.5 490.3h0M630.5 493.1h0M631.4 501.9h0M629.7 508.9h0M631.8 499.1h0M623.9 490.2h0M630.0 486.5h0M631.5 510.1h0M623.8 491.0h0M630.0 495.0h0M625.1 486.2h0M628.0 492.6h0M626.8 501.5h0M627.5 492.9h0M632.4 503.4h0M625.2 505.8h0M628.9 501.9h0M629.5 485.4h0M626.7 495.0h0M632.1 505.0h0M629.1 499.8h0M625.1 485.4h0M623.4 489.1h0M630.5 504.4h0M631.1 498.7h0M625.4 490.2h0M624.2 487.6h0M626.6 490.0h0M627.0 507.4h0M630.8 510.9h0M625.8 484.0h0M627.6 514.3h0M630.3 503.4h0M632.6 510.2h0M632.1 507.9h0M630.5 501.1h0M627.4 498.3h0M627.6 516.8h0M624.6 491.9h0M627.3 504.9h0" stroke="#25c4ee" stroke-width="2.9" stroke-linecap="square" stroke-opacity="0.85" fill="none"/>
<path d="M607.6 522.9h0M606.8 524.8h0M607.8 520.3h0M611.0 523.4h0M605.2 519.7h0M608.2 519.7h0M605.3 522.7h0M605.5 522.4h0M609.5 524.5h0M608.3 524.7h0M609.2 521.6h0M602.3 524.5h0M603.7 522.8h0M610.4 517.8h0M607.6 520.4h0M609.4 524.1h0M609.1 521.5h0M606.6 522.6h0M605.2 522.9h0M610.6 520.3h0M603.1 518.6h0M607.4 523.4h0M599.7 522.9h0M608.1 522.7h0M598.4 524.1h0M604.8 522.5h0M609.7 521.1h0" stroke="#25c4ee" stroke-width="2.9" stroke-linecap="square" stroke-opacity="0.85" fill="none"/>
<path d="M602.7 473.0h0M600.3 468.6h0M597.3 503.6h0M595.6 492.1h0M595.7 486.9h0M596.0 504.4h0M600.9 486.1h0M596.8 495.6h0M597.9 474.7h0M600.0 473.9h0M600.3 480.3h0M600.4 484.7h0M602.1 473.4h0M592.9 485.5h0M598.1 493.4h0M598.3 483.7h0M600.4 472.4h0M595.6 508.6h0M592.2 504.5h0M598.7 498.4h0M595.6 500.6h0M595.9 504.5h0M594.9 501.3h0M596.7 480.2h0M591.4 495.8h0M597.2 485.5h0M600.6 484.0h0M600.0 486.3h0M593.2 493.8h0M592.6 503.9h0M600.8 479.5h0M601.5 481.2h0M599.5 490.7h0M599.7 486.9h0M595.5 507.8h0M598.8 493.1h0M597.0 478.8h0M595.2 493.4h0M598.0 482.1h0M591.7 493.4h0M595.2 495.3h0M592.0 493.4h0M593.1 504.7h0M596.1 496.0h0M594.1 476.6h0M594.1 504.6h0M596.0 507.6h0M602.4 471.9h0M598.2 473.8h0M595.2 477.5h0M603.2 467.9h0M597.7 487.5h0M598.2 505.7h0M597.7 485.9h0M598.5 477.1h0M597.7 478.6h0M603.1 473.4h0M592.4 491.0h0M602.7 472.9h0M597.6 489.4h0M599.9 487.5h0M594.6 494.4h0M599.3 473.4h0M594.1 500.9h0M595.8 486.8h0M596.8 480.2h0M595.7 498.9h0M596.1 487.0h0M598.8 499.7h0M596.0 497.5h0M592.5 493.9h0M595.3 497.9h0M596.1 496.6h0M594.9 492.9h0M600.9 467.8h0M591.9 496.9h0M597.4 484.6h0M597.8 499.6h0M598.4 508.1h0M595.2 477.4h0M593.6 495.9h0M599.7 487.6h0M600.0 473.1h0M601.5 478.3h0M598.2 509.0h0M596.7 494.4h0M601.3 472.3h0M596.0 481.2h0M601.6 471.9h0" stroke="#25c4ee" stroke-width="2.9" stroke-linecap="square" stroke-opacity="0.85" fill="none"/>
<path d="M625.1 496.7h0M629.4 492.6h0M650.9 509.8h0M624.9 496.1h0M628.5 500.5h0M647.2 505.9h0M647.9 503.3h0M635.7 499.1h0M649.0 507.5h0M651.3 513.5h0M630.0 500.4h0M645.0 506.5h0M625.9 491.8h0M625.9 498.0h0M633.2 495.7h0M629.0 493.8h0M621.6 490.9h0M623.8 495.4h0M643.0 501.9h0M631.2 494.9h0M632.3 492.1h0M632.9 497.6h0M652.3 511.2h0M627.2 496.0h0M633.3 494.3h0M648.8 509.5h0M636.7 495.9h0M649.2 508.2h0M650.5 513.1h0M636.2 501.8h0M644.0 508.3h0M629.9 495.1h0M626.5 496.4h0M645.2 507.7h0M642.3 500.1h0M622.8 492.5h0M618.9 494.0h0M635.3 501.9h0M617.7 493.9h0M650.4 510.1h0M633.6 501.7h0M639.5 505.3h0M647.7 503.8h0M635.7 496.4h0M633.7 498.7h0M649.3 510.0h0M624.0 490.2h0M642.4 499.1h0M639.8 500.7h0M642.9 505.2h0M641.6 504.4h0M643.6 503.4h0M640.0 496.5h0M644.6 509.6h0M619.5 494.9h0M653.1 514.2h0M630.2 492.0h0M635.9 495.2h0M629.4 494.8h0M644.9 506.1h0M646.7 511.5h0M620.6 492.1h0M618.5 493.7h0M644.6 504.0h0M638.9 505.1h0M618.6 495.6h0M641.6 500.3h0M641.3 498.3h0M645.0 511.9h0M637.9 495.5h0M650.6 504.1h0M633.4 497.4h0M647.3 507.1h0M648.4 512.9h0M627.3 497.0h0M630.8 500.5h0M644.3 502.6h0M638.9 501.0h0M640.7 500.8h0M631.4 495.1h0M633.3 493.1h0" stroke="#25c4ee" stroke-width="2.9" stroke-linecap="square" stroke-opacity="0.85" fill="none"/>
<path d="M694.0 516.5h0M671.0 505.3h0M701.1 522.9h0M689.1 515.2h0M666.4 506.0h0M696.9 519.4h0M683.1 515.5h0M686.7 513.5h0M693.7 519.5h0M681.9 509.3h0M690.3 516.2h0M691.0 513.3h0M693.8 517.3h0M695.1 520.4h0M673.6 507.6h0M689.5 513.7h0M689.9 514.0h0M698.9 523.9h0M674.8 507.4h0M682.4 509.3h0M682.5 510.0h0M701.9 524.1h0M679.1 505.2h0M691.8 521.2h0M667.6 501.2h0M683.0 514.3h0M696.3 520.6h0M689.2 515.0h0M674.8 506.4h0M685.8 512.9h0M679.0 505.2h0M680.0 512.3h0M664.4 504.2h0M697.5 522.6h0M678.7 507.6h0M689.0 513.0h0M701.2 516.8h0M669.5 505.5h0M687.7 513.2h0M684.6 516.7h0M696.7 521.7h0M687.7 516.5h0M667.3 503.8h0M670.1 507.5h0M694.8 522.5h0M687.6 516.8h0M698.0 517.5h0M666.5 503.9h0M673.1 504.3h0M682.8 509.3h0M676.5 509.1h0M684.8 511.8h0M670.7 501.3h0M673.5 503.9h0M693.2 515.8h0M674.2 508.5h0M675.3 506.1h0M688.9 513.9h0M666.8 499.8h0M699.8 522.3h0M702.6 519.7h0M699.2 521.3h0M679.3 507.9h0M686.2 516.1h0M686.1 507.9h0M664.5 502.6h0M692.6 515.7h0M690.1 511.6h0M685.8 514.8h0M676.9 505.2h0M695.0 516.7h0M685.7 514.1h0M695.9 519.0h0M675.6 508.6h0M689.0 520.1h0M687.6 508.9h0M682.1 512.5h0M671.6 502.5h0M693.2 518.9h0M668.9 501.7h0M681.7 515.4h0M686.5 511.9h0M699.6 518.8h0M675.9 508.6h0M664.0 501.6h0M677.2 509.8h0M671.8 507.9h0M687.6 512.6h0M697.1 515.7h0M673.2 499.8h0" stroke="#25c4ee" stroke-width="2.9" stroke-linecap="square" stroke-opacity="0.85" fill="none"/>
<path d="M603.2 526.4h0M613.6 483.4h0M607.0 504.6h0M608.6 505.7h0M605.4 510.0h0M601.9 517.8h0M606.2 513.2h0M609.1 503.3h0M603.6 506.9h0M609.4 490.2h0M603.0 517.9h0M608.9 502.7h0M604.9 520.1h0M606.9 507.6h0M606.2 501.8h0M611.7 504.7h0M605.5 499.0h0M604.5 499.8h0M614.7 487.6h0M603.2 510.1h0M602.9 508.7h0M601.8 526.8h0M600.2 531.0h0M602.9 527.9h0M609.7 501.1h0M601.3 518.4h0M603.3 511.5h0M607.9 493.4h0M612.8 491.6h0M613.9 487.9h0M608.9 480.6h0M607.9 506.1h0M600.0 522.2h0M607.2 503.9h0M603.5 506.9h0M607.2 500.5h0M614.9 480.5h0M610.7 488.3h0M614.1 486.0h0M603.6 517.8h0M607.1 501.7h0M606.5 515.9h0M608.5 488.3h0M608.9 495.3h0M597.9 528.0h0M604.4 508.0h0M602.4 535.2h0M607.2 492.6h0M606.6 502.1h0M603.1 519.1h0M598.4 528.0h0M604.8 521.0h0M604.8 503.4h0M606.1 495.3h0M612.8 483.6h0M604.2 525.9h0M608.9 505.7h0M606.1 492.7h0M610.0 495.1h0M610.1 488.9h0M612.6 495.6h0M605.4 505.1h0M607.9 480.3h0M607.5 503.5h0M608.1 503.9h0M606.6 509.5h0M602.3 528.9h0M600.3 523.6h0M614.4 485.2h0M613.1 481.3h0M604.2 526.4h0M608.5 493.7h0M612.0 480.6h0M606.1 497.4h0M601.5 523.3h0M612.0 496.7h0M608.6 482.4h0M615.3 481.4h0M607.3 504.9h0M607.2 492.5h0M610.5 498.1h0M608.2 491.8h0M609.3 492.9h0M608.9 478.8h0M606.0 520.0h0M599.9 521.8h0M607.6 483.5h0M607.3 515.8h0M600.2 516.7h0M612.5 496.8h0M602.0 523.5h0M613.7 482.5h0M608.6 486.3h0M609.7 491.1h0M603.9 526.2h0M615.2 486.0h0M607.1 505.2h0M604.7 500.0h0M612.0 492.0h0M599.7 528.6h0M602.6 516.7h0M607.7 512.7h0M606.8 522.9h0M604.0 532.8h0M601.0 527.5h0M604.8 514.0h0M609.7 490.2h0M608.7 498.5h0M611.6 485.2h0M610.2 483.7h0M605.3 524.2h0M607.9 505.8h0M602.8 525.7h0M611.2 508.2h0M600.1 530.3h0M599.5 526.7h0M614.5 488.4h0M609.1 510.0h0M610.2 504.8h0" stroke="#25c4ee" stroke-width="2.9" stroke-linecap="square" stroke-opacity="0.85" fill="none"/>
<path d="M667.0 517.8h0M663.9 514.7h0M687.7 520.6h0M700.7 528.7h0M678.8 519.9h0M676.8 522.3h0M694.8 524.1h0M710.1 526.4h0M715.5 523.7h0M665.1 518.2h0M654.0 514.9h0M678.0 519.0h0M692.2 523.7h0M708.3 524.6h0M710.2 524.4h0M673.6 522.8h0M696.5 525.0h0M700.4 526.8h0M697.4 526.2h0M672.4 518.2h0M660.4 521.1h0M675.0 519.7h0M695.7 521.6h0M691.2 526.7h0M684.8 524.2h0M698.0 525.4h0M691.0 525.9h0M676.1 518.3h0M686.1 519.8h0M690.5 519.6h0M658.1 519.1h0M658.4 518.2h0M684.6 522.1h0M656.4 517.3h0M714.6 527.0h0M658.6 513.3h0M686.7 524.3h0M664.8 517.2h0M703.3 528.5h0M695.7 525.8h0M665.4 517.8h0M694.4 523.0h0M677.8 521.3h0M700.1 525.1h0M699.4 520.6h0M688.7 521.5h0M688.8 525.0h0M671.0 520.9h0M688.1 524.9h0M712.0 529.7h0M712.7 522.9h0M670.2 519.7h0M659.0 519.4h0M702.1 526.6h0M668.1 514.8h0M698.6 525.9h0M706.1 520.9h0M703.7 523.6h0M674.8 518.5h0M666.8 516.4h0M670.7 514.9h0M691.3 524.4h0M669.1 515.9h0M662.8 518.7h0M687.6 522.4h0M676.3 520.9h0M711.2 524.2h0M692.7 519.1h0M671.6 520.2h0M657.8 519.2h0M671.1 518.8h0M691.4 521.1h0M708.0 524.0h0M674.2 519.1h0M685.6 517.4h0M699.4 520.8h0M696.4 520.2h0M676.6 520.1h0M693.4 526.4h0M667.7 515.9h0M663.9 514.4h0M659.6 518.3h0M688.2 523.6h0M666.8 520.0h0M697.9 523.9h0M692.7 525.9h0M691.6 523.1h0M679.0 523.2h0M681.6 524.7h0M669.6 522.7h0M692.9 524.3h0M654.1 515.8h0M711.0 526.5h0M665.1 520.1h0M676.1 521.8h0M665.8 521.6h0M670.5 520.8h0M705.7 525.5h0M694.8 524.2h0M717.4 530.3h0M667.3 519.0h0M713.5 529.2h0M679.3 523.2h0M712.4 530.0h0M710.3 521.9h0M671.9 521.4h0M705.5 528.5h0M670.5 516.5h0M709.6 522.5h0M712.6 528.9h0M702.9 521.5h0M672.8 518.2h0M713.0 522.8h0M670.3 516.9h0M667.3 518.0h0M685.2 519.9h0M708.2 525.1h0M686.1 522.9h0M703.2 525.1h0M652.3 512.7h0M675.1 518.1h0M672.5 516.0h0M701.6 525.2h0M697.6 522.9h0M661.7 516.5h0M691.3 519.0h0M668.2 516.6h0M665.3 517.4h0M708.8 523.7h0M683.3 524.4h0M703.5 522.2h0M680.4 518.2h0M665.1 516.8h0M672.7 523.4h0M699.7 525.7h0M691.5 519.3h0" stroke="#25c4ee" stroke-width="2.9" stroke-linecap="square" stroke-opacity="0.85" fill="none"/>
<path d="M671.6 511.0h0M657.1 505.7h0M684.6 517.8h0M669.0 512.3h0M681.2 516.4h0M633.0 497.2h0M687.0 516.6h0M673.0 517.9h0M641.0 502.4h0M685.3 517.2h0M637.3 504.6h0M667.8 515.5h0M635.4 504.8h0M684.2 520.7h0M644.4 506.6h0M646.9 508.5h0M665.5 513.2h0M667.7 510.4h0M682.5 514.8h0M679.4 512.3h0M670.3 508.6h0M676.0 517.1h0M640.7 499.7h0M644.2 498.9h0M644.1 499.5h0M687.8 520.6h0M667.8 511.3h0M650.8 505.8h0M669.9 510.0h0M650.5 502.9h0M634.1 503.3h0M666.5 509.8h0M647.0 503.1h0M638.7 505.2h0M669.6 510.3h0M671.3 513.8h0M681.5 514.2h0M664.3 509.7h0M680.2 519.3h0M672.2 514.8h0M683.8 520.2h0M647.3 506.2h0M638.4 498.8h0M661.6 505.5h0M642.7 499.1h0M668.7 516.6h0M669.5 512.5h0M665.6 507.3h0M692.0 517.6h0M636.0 502.3h0M672.0 515.9h0M682.6 520.2h0M666.7 511.9h0M655.3 505.2h0M647.4 504.4h0M637.7 503.5h0M636.7 501.8h0M648.0 506.4h0M642.5 504.2h0M661.3 510.1h0M672.5 510.7h0M640.4 503.5h0M654.9 510.7h0M674.2 511.6h0M681.3 515.8h0M659.2 509.9h0M645.7 508.6h0M651.9 510.2h0M654.0 510.2h0M664.0 514.7h0M672.4 518.2h0M677.3 512.8h0M680.9 520.3h0M686.2 516.5h0M641.5 501.8h0M657.4 506.3h0M657.6 507.4h0M649.0 506.7h0M687.7 519.3h0M672.7 511.8h0M670.7 512.4h0M692.5 518.7h0M643.5 504.5h0M685.6 515.9h0M680.7 514.5h0M685.4 519.0h0M665.0 507.4h0M690.0 522.5h0M660.9 510.4h0M670.0 515.0h0M685.7 521.3h0M645.8 501.7h0M653.2 507.1h0M666.2 512.9h0M655.0 508.5h0M672.1 511.3h0M666.1 510.0h0M676.4 510.6h0M653.2 507.6h0M662.2 506.1h0M639.5 504.8h0M646.9 505.3h0M670.9 509.9h0M645.3 501.0h0M653.8 509.1h0M679.4 511.9h0M682.8 521.1h0M666.8 507.3h0M665.0 510.7h0M645.3 501.7h0M639.0 501.1h0M685.5 515.8h0M634.7 504.3h0M647.3 503.7h0M660.2 511.7h0M676.3 515.7h0M657.2 503.5h0M638.4 502.3h0M661.6 506.6h0M641.7 505.6h0M677.2 512.3h0M681.6 519.6h0M686.6 514.5h0M656.6 504.1h0M690.8 519.3h0M639.3 502.8h0M638.4 500.0h0M685.1 515.4h0" stroke="#25c4ee" stroke-width="2.9" stroke-linecap="square" stroke-opacity="0.85" fill="none"/>
<path d="M613.4 476.5h0M608.9 470.8h0M598.8 468.8h0M620.9 472.7h0M610.4 473.8h0M599.4 468.5h0M611.9 471.0h0M589.8 469.7h0M604.5 469.5h0M590.9 469.9h0M601.0 472.3h0M604.2 467.5h0M591.6 464.1h0M593.1 466.3h0M599.7 469.0h0M600.1 465.2h0M606.9 471.6h0M594.0 468.0h0M588.9 468.7h0M612.0 475.2h0M595.2 463.5h0M601.4 466.6h0M606.7 470.0h0M616.2 473.7h0M602.6 466.7h0M594.2 463.4h0M593.2 461.9h0M612.5 469.8h0M613.8 470.9h0M591.1 466.4h0M615.1 473.8h0M600.4 469.4h0M594.3 463.8h0M610.5 468.9h0M616.1 469.9h0M605.1 471.5h0M616.7 471.4h0M596.6 462.1h0M594.5 465.9h0M602.6 467.6h0M605.8 469.7h0M596.8 468.1h0M593.5 470.0h0M594.6 468.8h0M605.5 472.3h0M608.5 469.3h0M599.6 470.7h0M598.9 469.5h0M596.5 463.9h0M597.8 468.6h0M605.1 471.1h0M613.8 476.7h0M613.4 470.8h0M616.6 474.7h0M594.5 466.3h0M600.3 468.5h0M612.6 468.8h0M602.8 471.2h0M614.6 475.9h0M593.8 468.2h0M604.5 467.2h0M600.9 470.9h0M615.9 473.9h0M615.6 475.3h0M601.2 470.8h0" stroke="#25c4ee" stroke-width="2.9" stroke-linecap="square" stroke-opacity="0.85" fill="none"/>
<path d="M601.7 492.9h0M606.9 495.0h0M599.8 479.4h0M598.6 486.4h0M612.7 495.5h0M596.3 480.1h0M604.1 486.0h0M602.4 485.4h0M600.5 481.3h0M604.6 488.4h0M602.1 488.2h0M611.0 491.7h0M595.3 478.8h0M609.3 491.1h0M603.4 487.4h0M601.7 482.9h0M610.9 497.9h0M607.7 497.7h0M605.2 487.9h0M601.5 488.5h0M601.2 486.2h0M598.4 479.3h0M601.4 479.8h0M604.3 488.3h0M614.2 496.0h0M600.4 479.1h0M599.6 489.2h0M601.8 484.1h0M607.7 489.8h0M600.8 484.3h0M600.2 484.8h0M604.6 486.5h0M595.9 478.1h0M609.6 493.5h0M598.7 481.2h0M610.6 490.9h0M601.1 482.1h0M600.4 479.4h0M597.0 487.7h0M609.4 495.4h0M602.1 482.9h0M598.9 485.2h0M604.6 486.8h0M601.3 483.4h0M607.7 492.4h0M602.9 488.1h0M600.7 486.2h0M598.0 483.4h0M605.8 492.4h0M610.6 492.3h0M608.5 489.9h0M611.2 491.3h0" stroke="#25c4ee" stroke-width="2.9" stroke-linecap="square" stroke-opacity="0.85" fill="none"/>
<path d="M645.9 506.2h0M695.8 526.2h0M694.6 529.4h0M666.7 518.5h0M689.2 526.0h0M640.9 508.4h0M684.8 520.2h0M660.3 509.9h0M697.4 526.8h0M649.5 508.5h0M647.4 507.3h0M687.4 518.0h0M651.0 504.2h0M656.0 511.2h0M655.1 511.7h0M642.0 504.1h0M670.2 517.5h0M685.6 521.0h0M649.8 512.0h0M690.5 526.3h0M690.4 525.4h0M677.3 517.0h0M673.8 517.9h0M662.7 509.7h0M666.2 518.3h0M679.8 520.5h0M682.0 525.3h0M644.2 506.6h0M696.4 525.5h0M649.0 507.7h0M673.0 515.8h0M688.6 528.6h0M657.6 512.8h0M699.5 523.0h0M689.4 524.8h0M667.5 513.1h0M656.5 507.9h0M675.7 518.4h0M686.2 523.6h0M641.7 505.7h0M687.3 521.0h0M642.7 503.5h0M687.0 521.8h0M657.1 509.9h0M690.8 525.8h0M676.3 515.5h0M660.7 511.0h0M662.7 512.2h0M663.8 510.2h0M687.3 523.8h0M678.9 518.6h0M638.4 506.1h0M688.4 522.4h0M692.1 525.5h0M693.7 530.3h0M657.6 515.4h0M669.6 516.4h0M652.7 504.6h0M679.9 524.6h0M652.1 508.6h0M681.9 522.3h0M696.4 528.6h0M653.1 511.4h0M652.8 509.5h0M673.5 517.9h0M690.8 522.7h0M673.2 520.5h0M675.2 516.4h0M655.8 509.1h0M641.3 504.6h0M650.4 511.9h0M675.2 514.8h0M664.5 515.2h0M651.6 512.0h0M661.0 514.3h0M695.5 525.5h0M659.2 516.6h0M647.7 507.9h0M652.7 507.7h0M696.4 525.6h0M701.9 529.1h0M649.6 505.8h0M680.1 525.2h0M682.7 520.0h0M690.8 523.2h0M689.3 527.6h0M676.1 520.6h0M644.0 506.7h0M672.8 521.8h0M639.9 509.6h0M674.8 515.9h0M702.3 524.6h0M656.4 513.0h0M647.5 505.1h0M693.3 523.8h0M656.0 509.5h0M683.8 524.2h0M651.0 505.5h0M696.3 529.0h0M639.6 509.0h0M694.2 525.9h0M658.3 512.6h0M661.4 515.1h0M661.8 516.0h0M652.6 511.4h0M645.4 509.4h0M666.2 515.8h0M688.2 526.1h0M688.5 524.5h0M656.6 514.7h0M673.7 521.3h0M645.6 503.2h0M673.1 518.6h0M641.9 501.9h0M647.5 511.9h0M653.3 512.2h0M691.5 524.4h0M661.5 514.1h0M695.9 522.2h0M682.8 525.7h0M644.1 509.3h0M650.1 508.0h0M642.8 509.6h0M699.5 530.1h0M692.0 525.6h0M702.3 531.3h0M656.8 509.9h0M653.6 511.3h0M652.9 509.2h0M702.3 529.4h0M677.9 523.1h0M671.5 521.0h0M674.8 516.1h0M679.6 518.5h0M689.8 526.8h0M666.2 515.8h0M676.6 523.0h0M646.0 507.3h0M663.1 514.2h0M663.8 515.4h0M641.9 506.8h0" stroke="#25c4ee" stroke-width="2.9" stroke-linecap="square" stroke-opacity="0.85" fill="none"/>
<path d="M631.1 520.9h0M644.7 522.4h0M631.4 524.6h0M629.6 521.6h0M644.6 519.2h0M631.0 520.5h0M638.2 520.2h0M644.4 519.7h0M618.2 524.5h0M626.9 524.6h0M634.1 521.5h0M645.8 519.2h0M632.4 523.6h0M618.2 524.2h0M623.9 521.1h0M635.9 521.4h0M628.1 524.1h0M636.4 521.9h0M643.1 523.2h0M644.7 523.0h0M635.2 523.0h0M633.9 519.8h0M645.8 522.6h0M619.6 521.3h0M625.1 525.1h0M630.9 519.4h0M629.9 523.0h0M637.9 522.7h0M616.5 528.0h0M627.5 519.8h0M629.0 519.8h0M636.8 522.5h0M643.7 523.6h0M617.3 526.0h0M642.0 520.2h0M621.5 526.2h0M617.4 528.7h0M614.1 523.0h0M642.0 524.3h0M633.4 521.9h0M633.6 520.6h0M639.6 524.3h0M625.4 519.5h0M638.2 518.4h0M614.4 527.2h0M620.1 522.2h0M611.9 523.8h0M635.5 523.1h0M642.8 521.6h0M634.9 525.4h0M622.1 524.1h0M620.7 524.4h0M616.5 522.3h0M645.9 519.0h0M633.8 518.5h0M627.2 526.6h0M620.0 521.3h0M645.3 523.9h0M631.6 525.3h0M644.8 522.1h0M635.0 519.8h0M623.1 522.1h0M632.2 518.4h0M641.4 521.1h0M640.0 521.8h0M628.5 520.2h0" stroke="#25c4ee" stroke-width="2.9" stroke-linecap="square" stroke-opacity="0.85" fill="none"/>
<path d="M660.7 500.2h0M669.3 498.2h0M681.0 512.5h0M666.8 501.5h0M667.3 503.9h0M666.1 498.1h0M673.6 508.9h0M662.7 504.0h0M666.1 501.0h0M674.8 506.9h0M677.5 503.8h0M685.4 513.4h0M673.2 507.8h0M683.0 510.3h0M690.5 511.9h0M686.4 508.3h0M688.1 516.1h0M698.0 513.8h0M673.9 502.7h0M679.9 506.9h0M665.9 504.4h0M661.3 498.1h0M684.0 512.8h0M690.2 515.2h0M683.8 511.2h0M672.7 502.8h0M686.9 510.6h0M667.4 502.3h0M671.8 504.3h0M662.6 500.8h0M664.8 497.7h0M678.9 511.2h0M681.2 505.4h0M682.0 507.2h0M676.4 510.0h0M694.9 517.7h0M686.8 510.1h0M668.0 497.9h0M682.0 506.5h0M690.3 514.0h0M673.8 510.8h0M682.7 511.7h0M673.2 504.0h0M686.2 515.0h0M694.0 514.7h0M675.9 501.7h0M684.8 509.5h0M667.2 502.8h0M679.2 505.4h0M672.4 502.5h0M673.4 509.3h0M662.6 499.0h0M702.9 515.5h0M680.1 508.7h0M675.3 509.6h0M693.0 516.9h0M682.2 510.9h0M674.4 505.2h0M679.6 506.5h0M678.1 510.1h0M698.5 517.0h0M682.4 505.9h0M666.9 499.8h0M686.8 510.9h0M690.0 515.9h0M690.6 518.6h0M663.7 501.1h0M690.9 515.4h0M679.4 503.6h0M674.6 503.4h0M694.3 516.1h0M666.7 505.6h0M675.5 504.0h0M679.3 505.9h0M688.2 515.7h0M676.1 502.4h0M664.0 502.2h0M676.5 512.6h0M670.3 505.7h0M673.3 503.7h0M699.3 518.4h0M673.6 509.0h0M673.3 507.3h0M662.4 498.5h0M677.2 508.3h0M678.2 505.3h0M684.1 512.9h0M692.3 518.0h0M678.0 505.2h0M679.2 506.2h0M672.9 500.1h0M696.9 519.2h0" stroke="#25c4ee" stroke-width="2.9" stroke-linecap="square" stroke-opacity="0.85" fill="none"/>
<path d="M606.0 526.6h0M605.0 531.6h0M593.6 514.4h0M600.3 526.1h0M598.1 515.3h0M596.3 513.9h0M603.5 525.6h0M596.8 521.2h0M602.4 524.2h0M597.7 512.1h0M604.5 524.9h0M597.6 515.0h0M605.1 529.1h0M603.6 525.3h0M606.4 526.9h0M602.7 528.9h0M600.1 509.1h0M602.8 520.3h0M600.5 520.1h0M604.2 522.6h0M597.3 514.2h0M602.8 516.0h0M597.3 515.0h0M603.2 527.4h0M599.3 510.2h0M594.8 514.8h0M602.5 531.5h0M594.8 510.7h0M599.4 513.8h0M602.8 525.7h0M604.4 526.9h0M599.6 521.6h0M595.7 508.5h0M600.7 519.5h0M598.0 517.2h0M609.4 525.2h0M604.2 526.0h0M599.4 520.5h0M602.6 529.0h0M598.3 514.0h0M601.2 521.5h0M604.1 527.5h0M597.6 515.1h0M602.1 526.8h0M608.8 527.7h0M599.4 525.0h0M598.8 519.2h0M597.1 517.3h0M595.5 515.1h0" stroke="#25c4ee" stroke-width="2.9" stroke-linecap="square" stroke-opacity="0.85" fill="none"/>
<path d="M679.7 520.0h0M688.3 517.7h0M680.0 515.7h0M679.1 517.9h0M690.3 518.5h0M707.0 522.1h0M698.7 522.3h0M703.0 521.8h0M685.1 521.9h0M697.6 519.0h0M690.3 522.3h0M709.2 526.2h0M691.3 521.0h0M709.6 528.4h0M702.2 521.1h0M712.4 528.4h0M716.3 526.0h0M715.3 527.8h0M693.9 517.9h0M699.8 524.6h0M680.4 515.4h0M697.3 523.3h0M704.8 521.6h0M681.6 521.8h0M707.4 528.8h0M685.7 520.3h0M694.8 525.5h0M690.9 517.6h0M683.8 521.5h0M701.7 521.7h0M682.0 521.5h0M694.8 520.9h0M698.5 522.7h0M687.5 516.4h0M699.3 519.6h0M684.4 519.6h0M688.8 517.0h0M709.7 523.5h0M689.8 522.9h0M691.7 519.8h0M699.6 520.7h0M707.2 522.6h0M705.8 521.1h0M719.7 527.1h0M713.7 522.6h0M682.3 518.0h0M704.6 522.2h0M698.7 518.3h0M718.8 526.5h0M683.5 518.5h0M681.5 521.6h0M719.7 526.8h0M711.2 528.2h0M705.7 524.1h0M698.7 522.8h0M691.9 520.3h0M710.2 524.7h0M690.9 523.3h0M705.5 525.3h0M710.8 522.3h0M686.6 522.2h0M709.2 528.5h0M712.5 528.2h0M710.6 528.3h0M716.4 526.5h0M705.6 524.9h0M719.5 526.6h0M687.5 519.9h0M707.8 526.6h0M711.0 523.9h0M699.1 522.9h0M720.0 530.1h0M703.7 526.7h0M704.7 523.9h0M709.6 521.6h0M684.3 517.3h0M688.9 520.2h0M689.7 519.2h0M677.6 515.8h0M716.1 528.6h0M708.1 523.4h0M695.8 523.7h0M696.3 519.6h0M698.6 519.6h0M684.7 516.5h0M701.2 523.5h0M707.0 522.8h0M685.2 517.4h0M687.8 520.4h0M709.7 522.6h0M694.9 519.4h0M716.4 529.2h0M687.2 517.8h0M718.3 529.6h0M718.4 527.5h0M703.0 526.0h0M700.6 526.0h0M688.8 517.6h0M703.5 520.6h0M714.2 525.5h0M684.5 517.1h0M702.2 525.1h0M710.6 525.2h0M715.3 527.6h0M679.9 520.4h0M684.4 519.7h0M715.2 527.9h0M710.0 526.4h0M686.9 521.9h0M703.3 520.5h0" stroke="#1e9a2c" stroke-width="2.8" stroke-linecap="square" stroke-opacity="0.92" fill="none"/>
<path d="M673.9 525.1h0M653.1 525.5h0M662.4 523.4h0M662.8 526.8h0M669.2 526.7h0M676.2 523.0h0M663.1 527.1h0M645.1 520.2h0M664.0 525.0h0M648.7 523.3h0M671.1 524.3h0M653.5 521.1h0M648.3 523.9h0M654.7 522.2h0M667.3 525.3h0M679.4 523.6h0M655.6 523.3h0M659.1 525.6h0M656.1 525.1h0M657.0 527.2h0M664.1 529.0h0M680.3 526.6h0M650.9 520.5h0M677.8 527.2h0M656.8 526.5h0M648.1 522.7h0M647.7 520.0h0M658.4 524.6h0M664.8 524.6h0M664.0 524.4h0" stroke="#1e9a2c" stroke-width="2.4" stroke-linecap="square" stroke-opacity="0.9" fill="none"/>
<path d="M646.8 527.0h0M653.0 532.7h0M655.8 532.0h0M660.7 531.9h0M655.3 533.1h0M651.6 529.0h0M649.7 529.9h0M651.4 532.0h0M648.0 527.3h0M656.0 533.5h0M660.3 535.1h0M648.6 532.0h0M657.7 535.3h0M649.2 532.4h0M656.5 528.8h0M655.5 535.1h0M652.9 533.2h0M653.1 530.5h0M650.5 532.8h0M655.0 532.9h0M651.5 531.8h0M660.2 536.3h0M658.2 536.3h0M651.0 530.5h0M654.1 535.0h0M654.3 531.2h0M664.4 532.4h0M656.6 533.0h0M659.8 531.2h0M650.4 532.5h0M660.4 533.5h0M654.2 534.1h0M647.2 532.5h0M653.9 532.3h0M657.0 531.2h0M658.2 537.6h0M655.7 533.0h0M650.6 530.9h0M655.3 535.2h0M654.2 530.7h0" stroke="#1e9a2c" stroke-width="2.8" stroke-linecap="square" stroke-opacity="0.92" fill="none"/>
<path d="M697.7 529.3h0M697.6 530.4h0M697.4 536.5h0M696.0 533.0h0M695.1 536.4h0M696.3 535.8h0M695.0 532.6h0M694.2 531.1h0M694.7 528.0h0M696.3 536.0h0M698.3 530.2h0M698.2 532.7h0M695.6 531.1h0M695.6 537.6h0M697.4 526.4h0M694.7 533.7h0" stroke="#1e9a2c" stroke-width="2.6" stroke-linecap="square" stroke-opacity="0.92" fill="none"/>
<path d="M743.5 447.5h0M836.5 516.0h0M839.0 518.5h0M844.0 518.5h0M857.5 510.0h0M832.5 530.0h0M800.0 545.0h0" stroke="#1e9a2c" stroke-width="2.8" stroke-linecap="round" stroke-opacity="0.95" fill="none"/>
</g><g filter="url(#bl3)">
<polyline points="573.8,442.5 588.8,456.0 607.5,462.5 618.8,467.0" fill="none" stroke="#1b2878" stroke-width="1.0" stroke-opacity="0.85" stroke-linejoin="round" stroke-linecap="round" />
<polyline points="612.5,487.5 626.0,486.0 640.0,483.8 650.0,487.5 667.5,497.5" fill="none" stroke="#1b2878" stroke-width="1.0" stroke-opacity="0.85" stroke-linejoin="round" stroke-linecap="round" />
<polyline points="607.5,505.0 630.0,515.0 657.5,516.0 695.0,525.0 716.0,527.5" fill="none" stroke="#1b2878" stroke-width="1.0" stroke-opacity="0.85" stroke-linejoin="round" stroke-linecap="round" />
<polyline points="631.0,517.5 613.8,536.0" fill="none" stroke="#1b2878" stroke-width="1.0" stroke-opacity="0.85" stroke-linejoin="round" stroke-linecap="round" />
<polyline points="640.0,483.8 645.0,496.0 655.0,510.0 657.5,516.0" fill="none" stroke="#1b2878" stroke-width="1.0" stroke-opacity="0.85" stroke-linejoin="round" stroke-linecap="round" />
<polyline points="650.0,487.5 665.0,505.0 657.5,510.0" fill="none" stroke="#1b2878" stroke-width="1.0" stroke-opacity="0.85" stroke-linejoin="round" stroke-linecap="round" />
<polyline points="697.5,525.0 696.0,537.5 697.5,550.0" fill="none" stroke="#1b2878" stroke-width="1.0" stroke-opacity="0.85" stroke-linejoin="round" stroke-linecap="round" />
<polyline points="612.5,481.0 600.0,474.0 592.0,470.0" fill="none" stroke="#1b2878" stroke-width="1.0" stroke-opacity="0.85" stroke-linejoin="round" stroke-linecap="round" />
<polyline points="618.0,467.0 608.0,458.0 600.0,457.0" fill="none" stroke="#1b2878" stroke-width="1.0" stroke-opacity="0.85" stroke-linejoin="round" stroke-linecap="round" />
<polyline points="607.5,505.0 596.0,500.0 590.0,492.0" fill="none" stroke="#1b2878" stroke-width="1.0" stroke-opacity="0.85" stroke-linejoin="round" stroke-linecap="round" />
<polyline points="660.0,497.0 690.0,512.0 705.0,522.0" fill="none" stroke="#1b2878" stroke-width="1.0" stroke-opacity="0.85" stroke-linejoin="round" stroke-linecap="round" />
<polyline points="626.0,486.0 628.0,500.0 630.0,515.0" fill="none" stroke="#1b2878" stroke-width="1.0" stroke-opacity="0.85" stroke-linejoin="round" stroke-linecap="round" />
<polyline points="612.0,520.0 600.0,524.0" fill="none" stroke="#1b2878" stroke-width="1.0" stroke-opacity="0.85" stroke-linejoin="round" stroke-linecap="round" />
<polyline points="645.0,411.0 643.8,420.0 640.0,453.5 618.8,467.2 612.5,481.0 607.5,505.0 600.0,536.0 596.0,576.0 591.0,638.5" fill="none" stroke="#1b2878" stroke-width="1.6" stroke-opacity="1" stroke-linejoin="round" stroke-linecap="round" />
<polyline points="655.0,516.0 712.5,526.0 750.0,529.8" fill="none" stroke="#1b2878" stroke-width="1.5" stroke-opacity="1" stroke-linejoin="round" stroke-linecap="round" />
<polyline points="702.5,498.5 712.5,521.0 715.0,533.5 697.5,556.0" fill="none" stroke="#1b2878" stroke-width="1.2" stroke-opacity="1" stroke-linejoin="round" stroke-linecap="round" />
<path d="M716.0 446.0h0M725.0 459.0h0M711.0 459.0h0M710.0 474.0h0M718.0 452.0h0M733.5 446.0h0M821.0 510.0h0M785.0 536.0h0M572.5 517.5h0M787.0 535.0h0M574.0 519.0h0" stroke="#f0a030" stroke-width="3.2" stroke-linecap="round" stroke-opacity="0.9" fill="none"/>
</g>
<rect x="692" y="551" width="9.5" height="10" fill="#1236e8"/>
<rect x="535.5" y="559.5" width="4" height="3" fill="#f07830"/>
<rect x="506" y="241" width="71" height="8.6" rx="3" fill="#fdfdfd" fill-opacity="0.95"/>
<rect x="507" y="242" width="6" height="6.6" rx="1" fill="#7ec850"/>
<text x="508" y="247.6" font-family="Liberation Sans, sans-serif" font-size="6" fill="#fff">L</text>
<text x="514" y="248.2" font-family="Liberation Sans, sans-serif" font-size="7.6" font-weight="bold" fill="#fff" stroke="#444" stroke-width="0.55" textLength="61" lengthAdjust="spacingAndGlyphs">01/21/2025 06:10:00</text>
<rect x="987" y="241.5" width="103" height="9.3" rx="3.5" fill="#fff" stroke="#222" stroke-width="0.6"/>
<text x="990.5" y="248.5" font-family="Liberation Sans, sans-serif" font-size="6.5" fill="#222" textLength="96.5" lengthAdjust="spacingAndGlyphs">Projection - 2025/01/21 00:00</text>
<rect x="987" y="239.6" width="104" height="1.2" fill="#444" fill-opacity="0.8"/>
<rect x="576.2" y="538.2" width="51.5" height="35.8" fill="#fff" stroke="#b8b8b8" stroke-width="0.5"/>
<text x="578.7" y="544.0999999999999" font-family="Liberation Sans, sans-serif" font-size="5.0" fill="#2a2a2a" letter-spacing="-0.15">ID</text>
<text x="624.5" y="544.0999999999999" text-anchor="end" font-family="Liberation Sans, sans-serif" font-size="5.0" fill="#2a2a2a" letter-spacing="-0.15">9571</text>
<text x="578.7" y="551.1999999999999" font-family="Liberation Sans, sans-serif" font-size="5.0" fill="#2a2a2a" letter-spacing="-0.15">Live Data Point</text>
<text x="624.5" y="551.1999999999999" text-anchor="end" font-family="Liberation Sans, sans-serif" font-size="5.0" fill="#2a2a2a" letter-spacing="-0.15">9571</text>
<text x="578.7" y="558.05" font-family="Liberation Sans, sans-serif" font-size="5.0" fill="#2a2a2a" letter-spacing="-0.15">actual</text>
<text x="624.5" y="558.05" text-anchor="end" font-family="Liberation Sans, sans-serif" font-size="5.0" fill="#2a2a2a" letter-spacing="-0.15">68.4</text>
<rect x="578.2" y="560.4" width="44.6" height="12.6" fill="#0a14f0"/>
<rect x="623.3" y="560.4" width="2.6" height="12.6" fill="#c4ecb8" stroke="#6cc85c" stroke-width="0.5"/>
<polyline points="608.0,546.0 616.0,559.0" fill="none" stroke="#444" stroke-width="0.5" stroke-opacity="1" stroke-linejoin="round" stroke-linecap="round" />
<polyline points="627.7,574.0 635.6,584.1" fill="none" stroke="#333" stroke-width="0.6" stroke-opacity="1" stroke-linejoin="round" stroke-linecap="round" />
<rect x="635.6" y="584.1" width="71.9" height="49.6" fill="#fff" stroke="#b8b8b8" stroke-width="0.5"/>
<text x="638.1" y="590.0" font-family="Liberation Sans, sans-serif" font-size="5.0" fill="#2a2a2a" letter-spacing="-0.15">ID</text>
<text x="704.3" y="590.0" text-anchor="end" font-family="Liberation Sans, sans-serif" font-size="5.0" fill="#2a2a2a" letter-spacing="-0.15" textLength="55.900000000000006" lengthAdjust="spacingAndGlyphs">ADEPUMPINLAGO1PMPP2-1</text>
<text x="638.1" y="597.0999999999999" font-family="Liberation Sans, sans-serif" font-size="5.0" fill="#2a2a2a" letter-spacing="-0.15">PUMP/Min ID</text>
<text x="704.3" y="597.0999999999999" text-anchor="end" font-family="Liberation Sans, sans-serif" font-size="5.0" fill="#2a2a2a" letter-spacing="-0.15">16644.2.02</text>
<text x="638.1" y="604.0" font-family="Liberation Sans, sans-serif" font-size="5.0" fill="#2a2a2a" letter-spacing="-0.15">Flow (L/s)</text>
<text x="704.3" y="604.0" text-anchor="end" font-family="Liberation Sans, sans-serif" font-size="5.0" fill="#2a2a2a" letter-spacing="-0.15">14.76</text>
<text x="638.1" y="611.0" font-family="Liberation Sans, sans-serif" font-size="5.0" fill="#2a2a2a" letter-spacing="-0.15">PDUMP</text>
<text x="704.3" y="611.0" text-anchor="end" font-family="Liberation Sans, sans-serif" font-size="5.0" fill="#2a2a2a" letter-spacing="-0.15">1</text>
<text x="638.1" y="617.9" font-family="Liberation Sans, sans-serif" font-size="5.0" fill="#2a2a2a" letter-spacing="-0.15">speed</text>
<text x="704.3" y="617.9" text-anchor="end" font-family="Liberation Sans, sans-serif" font-size="5.0" fill="#2a2a2a" letter-spacing="-0.15">1</text>
<circle cx="641.4" cy="626" r="5" fill="#d4f4cc"/><path d="M638.4 622 L645.4 626 L638.4 630Z" fill="#18c018"/>
<rect x="715.2" y="546.4" width="56.6" height="36.1" fill="#fff" stroke="#b8b8b8" stroke-width="0.5"/>
<text x="717.7" y="552.8" font-family="Liberation Sans, sans-serif" font-size="5.0" fill="#2a2a2a" letter-spacing="-0.15">ID</text>
<text x="768.6" y="552.8" text-anchor="end" font-family="Liberation Sans, sans-serif" font-size="5.0" fill="#2a2a2a" letter-spacing="-0.15">698330</text>
<text x="717.7" y="559.6999999999999" font-family="Liberation Sans, sans-serif" font-size="5.0" fill="#2a2a2a" letter-spacing="-0.15">Live Data Point</text>
<text x="768.6" y="559.6999999999999" text-anchor="end" font-family="Liberation Sans, sans-serif" font-size="5.0" fill="#2a2a2a" letter-spacing="-0.15">698330</text>
<text x="717.7" y="566.5999999999999" font-family="Liberation Sans, sans-serif" font-size="5.0" fill="#2a2a2a" letter-spacing="-0.15">actual</text>
<text x="768.6" y="566.5999999999999" text-anchor="end" font-family="Liberation Sans, sans-serif" font-size="5.0" fill="#2a2a2a" letter-spacing="-0.15">67.4</text>
<rect x="765.5" y="568.5" width="5" height="13" fill="#c4ecb8" stroke="#6cc85c" stroke-width="0.5"/>
<rect x="708.6" y="569.4" width="55.8" height="36.4" fill="#fff" stroke="#b8b8b8" stroke-width="0.5"/>
<rect x="746.4" y="571.8" width="15" height="5" fill="#bfe4b4"/>
<text x="711.1" y="575.8" font-family="Liberation Sans, sans-serif" font-size="5.0" fill="#2a2a2a" letter-spacing="-0.15">ID</text>
<text x="761.1999999999999" y="575.8" text-anchor="end" font-family="Liberation Sans, sans-serif" font-size="5.0" fill="#2a2a2a" letter-spacing="-0.15">698321</text>
<text x="711.1" y="582.6999999999999" font-family="Liberation Sans, sans-serif" font-size="5.0" fill="#2a2a2a" letter-spacing="-0.15">Live Data Point</text>
<text x="761.1999999999999" y="582.6999999999999" text-anchor="end" font-family="Liberation Sans, sans-serif" font-size="5.0" fill="#2a2a2a" letter-spacing="-0.15">698321</text>
<text x="711.1" y="589.55" font-family="Liberation Sans, sans-serif" font-size="5.0" fill="#2a2a2a" letter-spacing="-0.15">actual</text>
<text x="761.1999999999999" y="589.55" text-anchor="end" font-family="Liberation Sans, sans-serif" font-size="5.0" fill="#2a2a2a" letter-spacing="-0.15">61.4</text>
<rect x="709.8" y="593.2" width="49.7" height="11.9" fill="#0a14f0"/>
<rect x="760.3" y="588" width="2.8" height="17" fill="#c4ecb8" stroke="#6cc85c" stroke-width="0.5"/>
<rect x="1044.5" y="538.5" width="9.5" height="9.5" fill="#fff" stroke="#333" stroke-width="0.8"/>
<path d="M1040.5 536.5 L1040.5 546 L1043 543.8 L1044.5 547 L1046 546.2 L1044.6 543.2 L1047.5 543.2Z" fill="#fff" stroke="#111" stroke-width="0.6"/>
<rect x="1040.5" y="549" width="3.5" height="11" fill="#fff" fill-opacity="0.9"/>
<text x="1046.2" y="546.5" font-family="Liberation Sans, sans-serif" font-size="6" fill="#222">N</text>
<g opacity="0.75"><rect x="509" y="634.2" width="39" height="1.6" fill="#777"/><rect x="552" y="634.2" width="60" height="1.6" fill="#777"/>
<text x="510" y="632.5" font-family="Liberation Sans, sans-serif" font-size="4.5" fill="#eee">500 m</text><text x="553" y="632.5" font-family="Liberation Sans, sans-serif" font-size="4.5" fill="#eee">2000 ft</text></g>
</svg>
</div>
<div id="wm" class="abs">Autodesk Confidential &amp; Proprietary Information - Please do not post, copy or distribute without authorization.</div>
</body>
</html>
